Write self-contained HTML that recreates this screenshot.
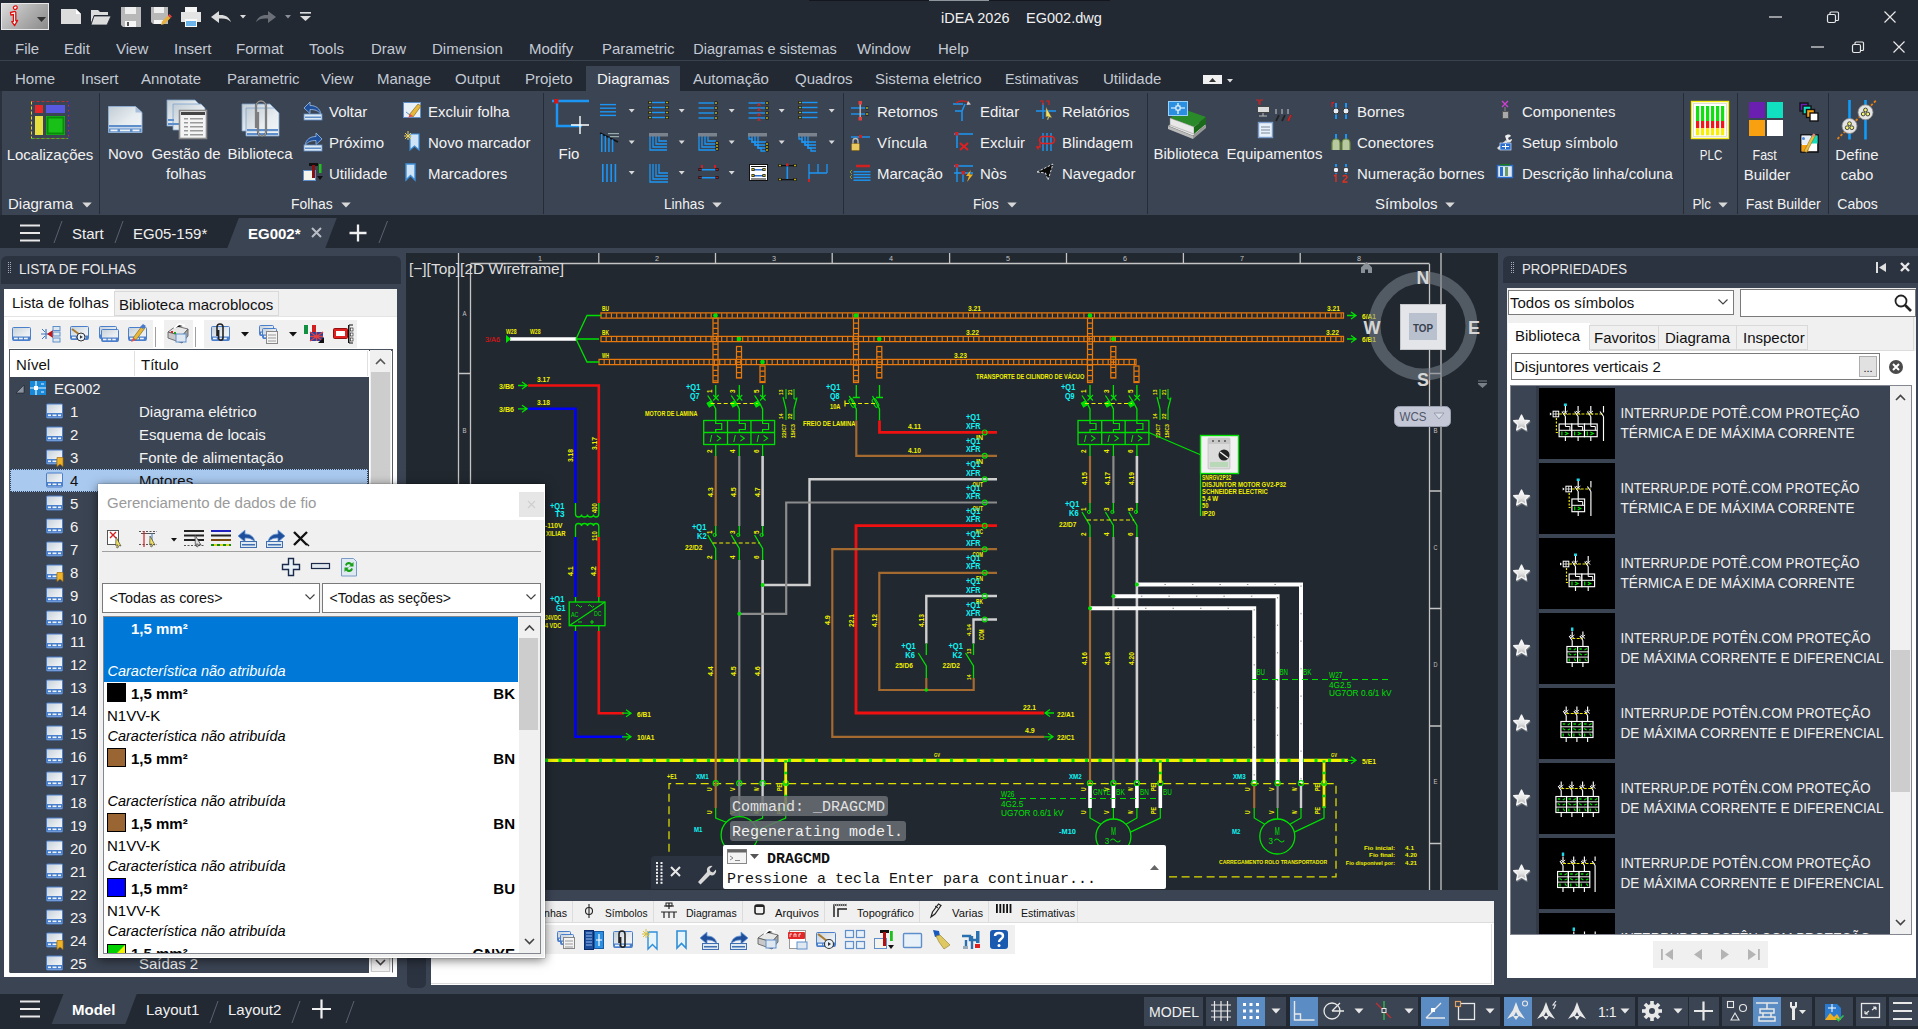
<!DOCTYPE html>
<html><head><meta charset="utf-8"><title>iDEA 2026 EG002.dwg</title><style>
html,body{margin:0;padding:0;}
body{width:1918px;height:1029px;overflow:hidden;background:#3b4453;position:relative;font-family:"Liberation Sans",sans-serif;}
div,span.t,svg{position:absolute;}
span.t{white-space:pre;}
svg{overflow:visible;}
</style></head><body>
<div style="left:0px;top:0px;width:1918px;height:91px;background:#222933;"></div>
<div style="left:809px;top:0px;width:301px;height:1px;background:#14181e;"></div>
<div style="left:929px;top:0px;width:60px;height:1px;background:#8f959d;"></div>
<div style="left:1px;top:3px;width:48px;height:27px;background:linear-gradient(135deg,#dcdcdc 0%,#b4b4b4 45%,#8a8a8a 100%);border:1px solid #e8e8e8;box-sizing:border-box;"></div>
<svg style="left:1px;top:3px;" width="48" height="27" viewBox="0 0 48 27"><path d="M13 3.5c1.5-1.2 3.4-0.6 3.2 1.2c-0.2 1.4-1.6 2-2.8 1.6c-1.2-0.5-1.4-2-0.4-2.8z" fill="#fff" stroke="#e01010" stroke-width="1.3"/><path d="M9.5 9.5l4.5-1.2l0.8 1v8.5l1.8-0.4l-3 5.2l-2.8-4l1.6-0.3v-7l-2.5 0.8z" fill="#fff" stroke="#e01010" stroke-width="1.3" stroke-linejoin="round"/><path d="M36 14l9 0l-4.5 5z" fill="#333"/></svg>
<svg style="left:0px;top:0px;" width="320" height="34" viewBox="0 0 320 34"><path d="M61 9h15l5 5v10h-20z" fill="#dcdcdc"/><path d="M76 9v5h5z" fill="#fff"/><path d="M91 10h7l2 2h8v3h-14l-3 8z" fill="#dcdcdc"/><path d="M94 16h17l-4 9h-16z" fill="#dcdcdc" stroke="#222933" stroke-width="0.8"/><path d="M121 7h20v20h-18l-2-2z" fill="#b8b8b8"/><rect x="125" y="7" width="11" height="7" fill="#efefef"/><rect x="125" y="21" width="11" height="6" fill="#f6f6f6"/><rect x="127" y="22" width="2" height="4" fill="#555"/><path d="M151 7h17v17h-15l-2-2z" fill="#b8b8b8"/><rect x="154" y="7" width="10" height="6" fill="#efefef"/><rect x="154" y="20" width="9" height="4" fill="#f6f6f6"/><path d="M161 25l1-3.5l6-6l2.5 2.5l-6 6z" fill="#e8b040"/><path d="M168 15.5l1.5-1.5l2.5 2.5l-1.5 1.5z" fill="#e04040"/><rect x="185" y="7" width="12" height="6" fill="#f4f4f4"/><path d="M181 12h20v10h-20z" fill="#e4e4e4"/><rect x="185" y="19" width="12" height="8" fill="#fafafa"/><rect x="186" y="21" width="10" height="5" fill="#6cb4ea"/><path d="M211 17l8-6v4c6-0.5 10 1.5 12 7c-3-3-6-4-12-3.5v4.5z" fill="#dcdcdc"/><path d="M240 15h6l-3 3.5z" fill="#dcdcdc"/><path d="M276 17l-8-6v4c-6-0.5-10 1.5-12 7c3-3 6-4 12-3.5v4.5z" fill="#6b7078"/><path d="M285 15h6l-3 3.5z" fill="#8a8f98"/><rect x="300" y="12" width="11" height="1.6" fill="#dcdcdc"/><path d="M300 16h11l-5.5 5z" fill="#dcdcdc"/></svg>
<span class="t" style="top:11px;font-size:14.5px;line-height:14.5px;color:#f0f0f0;font-family:'Liberation Sans',sans-serif;left:941px;">iDEA 2026</span>
<span class="t" style="top:11px;font-size:14.5px;line-height:14.5px;color:#f0f0f0;font-family:'Liberation Sans',sans-serif;left:1026px;">EG002.dwg</span>
<svg style="left:1760px;top:0px;" width="158" height="64" viewBox="0 0 158 64"><g stroke="#e8e8e8" stroke-width="1.2" fill="none"><path d="M9 17h13"/><rect x="67.5" y="14.5" width="8" height="8" rx="1.5"/><path d="M70 14.5v-1.5a1 1 0 0 1 1-1h6.5a1 1 0 0 1 1 1v6.5a1 1 0 0 1-1 1h-1.5"/><path d="M124.5 11.5l11 11M135.500 11.500l-11 11"/><path d="M51 47h13"/><rect x="92.500" y="44.500" width="8" height="8" rx="1.5"/><path d="M95 44.500v-1.5a1 1 0 0 1 1-1h6.500a1 1 0 0 1 1 1v6.500a1 1 0 0 1-1 1h-1.5"/><path d="M133.500 41.500l11 11M144.500 41.500l-11 11"/></g></svg>
<span class="t" style="top:41px;font-size:15px;line-height:15px;color:#c4cad3;font-family:'Liberation Sans',sans-serif;left:15px;">File</span>
<span class="t" style="top:41px;font-size:15px;line-height:15px;color:#c4cad3;font-family:'Liberation Sans',sans-serif;left:64px;">Edit</span>
<span class="t" style="top:41px;font-size:15px;line-height:15px;color:#c4cad3;font-family:'Liberation Sans',sans-serif;left:116px;">View</span>
<span class="t" style="top:41px;font-size:15px;line-height:15px;color:#c4cad3;font-family:'Liberation Sans',sans-serif;left:174px;">Insert</span>
<span class="t" style="top:41px;font-size:15px;line-height:15px;color:#c4cad3;font-family:'Liberation Sans',sans-serif;left:236px;">Format</span>
<span class="t" style="top:41px;font-size:15px;line-height:15px;color:#c4cad3;font-family:'Liberation Sans',sans-serif;left:309px;">Tools</span>
<span class="t" style="top:41px;font-size:15px;line-height:15px;color:#c4cad3;font-family:'Liberation Sans',sans-serif;left:371px;">Draw</span>
<span class="t" style="top:41px;font-size:15px;line-height:15px;color:#c4cad3;font-family:'Liberation Sans',sans-serif;left:432px;">Dimension</span>
<span class="t" style="top:41px;font-size:15px;line-height:15px;color:#c4cad3;font-family:'Liberation Sans',sans-serif;left:529px;">Modify</span>
<span class="t" style="top:41px;font-size:15px;line-height:15px;color:#c4cad3;font-family:'Liberation Sans',sans-serif;left:602px;">Parametric</span>
<svg style="left:0;top:0;" width="1" height="1"><text x="693.3" y="54" font-family="'Liberation Sans',sans-serif" font-size="15" font-weight="normal" font-style="normal" fill="#c4cad3" text-anchor="start" textLength="143.4" lengthAdjust="spacingAndGlyphs">Diagramas e sistemas</text></svg>
<span class="t" style="top:41px;font-size:15px;line-height:15px;color:#c4cad3;font-family:'Liberation Sans',sans-serif;left:857px;">Window</span>
<span class="t" style="top:41px;font-size:15px;line-height:15px;color:#c4cad3;font-family:'Liberation Sans',sans-serif;left:938px;">Help</span>
<div style="left:0px;top:60px;width:1918px;height:1px;background:#3a4250;"></div>
<div style="left:586px;top:66px;width:94px;height:26px;background:#3b4453;"></div>
<span class="t" style="top:71px;font-size:15px;line-height:15px;color:#c4cad3;font-family:'Liberation Sans',sans-serif;left:15px;">Home</span>
<span class="t" style="top:71px;font-size:15px;line-height:15px;color:#c4cad3;font-family:'Liberation Sans',sans-serif;left:81px;">Insert</span>
<span class="t" style="top:71px;font-size:15px;line-height:15px;color:#c4cad3;font-family:'Liberation Sans',sans-serif;left:141px;">Annotate</span>
<span class="t" style="top:71px;font-size:15px;line-height:15px;color:#c4cad3;font-family:'Liberation Sans',sans-serif;left:227px;">Parametric</span>
<span class="t" style="top:71px;font-size:15px;line-height:15px;color:#c4cad3;font-family:'Liberation Sans',sans-serif;left:321px;">View</span>
<span class="t" style="top:71px;font-size:15px;line-height:15px;color:#c4cad3;font-family:'Liberation Sans',sans-serif;left:377px;">Manage</span>
<span class="t" style="top:71px;font-size:15px;line-height:15px;color:#c4cad3;font-family:'Liberation Sans',sans-serif;left:455px;">Output</span>
<span class="t" style="top:71px;font-size:15px;line-height:15px;color:#c4cad3;font-family:'Liberation Sans',sans-serif;left:525px;">Projeto</span>
<span class="t" style="top:71px;font-size:15px;line-height:15px;color:#f4f4f4;font-family:'Liberation Sans',sans-serif;left:597px;">Diagramas</span>
<span class="t" style="top:71px;font-size:15px;line-height:15px;color:#c4cad3;font-family:'Liberation Sans',sans-serif;left:693px;">Automação</span>
<span class="t" style="top:71px;font-size:15px;line-height:15px;color:#c4cad3;font-family:'Liberation Sans',sans-serif;left:795px;">Quadros</span>
<span class="t" style="top:71px;font-size:15px;line-height:15px;color:#c4cad3;font-family:'Liberation Sans',sans-serif;left:875px;">Sistema eletrico</span>
<svg style="left:0;top:0;" width="1" height="1"><text x="1005" y="84" font-family="'Liberation Sans',sans-serif" font-size="15" font-weight="normal" font-style="normal" fill="#c4cad3" text-anchor="start" textLength="73.3" lengthAdjust="spacingAndGlyphs">Estimativas</text></svg>
<span class="t" style="top:71px;font-size:15px;line-height:15px;color:#c4cad3;font-family:'Liberation Sans',sans-serif;left:1103px;">Utilidade</span>
<div style="left:1203px;top:75px;width:19px;height:9px;background:#f0f0f0;"></div>
<svg style="left:1203px;top:75px;" width="35" height="10" viewBox="0 0 35 10"><path d="M6 7l3.500-4l3.500 4z" fill="#333"/><path d="M24 4h6l-3 3.500z" fill="#e0e0e0"/></svg>
<div style="left:0px;top:91px;width:1918px;height:124px;background:#3b4453;"></div>
<div style="left:0px;top:91px;width:2px;height:124px;background:#2a313d;"></div>
<div style="left:99px;top:93px;width:1px;height:121px;background:#252c37;"></div>
<div style="left:543px;top:93px;width:1px;height:121px;background:#252c37;"></div>
<div style="left:843px;top:93px;width:1px;height:121px;background:#252c37;"></div>
<div style="left:1147px;top:93px;width:1px;height:121px;background:#252c37;"></div>
<div style="left:1683px;top:93px;width:1px;height:121px;background:#252c37;"></div>
<div style="left:1737px;top:93px;width:1px;height:121px;background:#252c37;"></div>
<div style="left:1828px;top:93px;width:1px;height:121px;background:#252c37;"></div>
<svg style="left:0px;top:0px;" width="1918" height="216" viewBox="0 0 1918 216"><rect x="31.500" y="101.500" width="37" height="37" fill="none" stroke="#c03030" stroke-width="1" stroke-dasharray="3 2"/><path d="M31.500 101.500v37" stroke="#d8d830" stroke-dasharray="3 2"/><path d="M31.500 138.500h37" stroke="#30c030" stroke-dasharray="3 2"/><path d="M68.500 101.500v37" stroke="#3030c0" stroke-dasharray="3 2"/><rect x="35" y="105" width="8" height="8" fill="#e82828"/><rect x="46" y="105" width="19" height="8" fill="#5858e0"/><rect x="35" y="116" width="8" height="19" fill="#e8e040"/><rect x="46" y="116" width="19" height="19" fill="#18c018"/><rect x="47.500" y="117.500" width="16" height="16" fill="none" stroke="#0a8a0a" stroke-width="2"/><defs><linearGradient id="rbg" x1="0" y1="0" x2="1" y2="1"><stop offset="0" stop-color="#c2ccd4"/><stop offset="0.55" stop-color="#e6ecf0"/><stop offset="1" stop-color="#f4f7f9"/></linearGradient></defs><path d="M108.500 106.500h27l6.500 6v20h-33.500z" fill="url(#rbg)" stroke="#8fb0d6" stroke-width="0.9"/><path d="M135.500 106.500v6h6.500z" fill="#a8c0dc"/><rect x="109" y="125" width="32.500" height="7" fill="#5f8fcb"/><rect x="109" y="127.200" width="32.500" height="1.200" fill="#dfe8f2"/><rect x="110.500" y="129.500" width="7" height="1.800" fill="#eef3f8"/><rect x="120" y="129.500" width="10" height="1.800" fill="#eef3f8"/><rect x="132.500" y="129.500" width="7" height="1.800" fill="#eef3f8"/><path d="M167 100h28l4 4v22h-32z" fill="url(#rbg)" stroke="#7ea2cc" stroke-width="0.8"/><path d="M173 104h28l4 4v22h-32z" fill="url(#rbg)" stroke="#7ea2cc" stroke-width="0.8"/><rect x="168" y="123" width="12" height="2" fill="#5f8fcb"/><rect x="168" y="119" width="6" height="2" fill="#5f8fcb"/><rect x="179.500" y="110.500" width="27" height="28" fill="#f4f4f4" stroke="#8a8a8a" stroke-width="1.6"/><rect x="181" y="112" width="24" height="3" fill="#444"/><g fill="#9a9a9a"><rect x="184" y="118" width="4" height="1.5"/><rect x="190" y="118" width="13" height="1.5"/><rect x="184" y="122" width="4" height="1.5"/><rect x="190" y="122" width="13" height="1.5"/><rect x="184" y="126" width="4" height="1.5"/><rect x="190" y="126" width="13" height="1.5"/><rect x="184" y="130" width="4" height="1.5"/><rect x="190" y="130" width="13" height="1.5"/><rect x="184" y="134" width="4" height="1.5"/><rect x="190" y="134" width="13" height="1.5"/></g><path d="M242 104h28l5 5v22h-33z" fill="url(#rbg)" stroke="#7ea2cc" stroke-width="0.8"/><path d="M246 108h28l5 5v23h-33z" fill="url(#rbg)" stroke="#7ea2cc" stroke-width="0.8"/><rect x="247" y="129" width="31" height="2.200" fill="#5f8fcb"/><rect x="247" y="133" width="31" height="2.200" fill="#5f8fcb"/><path d="M256 128v-22a5 5 0 0 1 10 0v26a4 4 0 0 1 -8 0v-20" fill="none" stroke="#555" stroke-width="2.200"/><path d="M256 128v-22a5 5 0 0 1 10 0v26a4 4 0 0 1 -8 0v-20" fill="none" stroke="#b0b0b0" stroke-width="0.9"/><path d="M304 108l6-6v3.500c6 0 10 3 11 9c-3-4-6-5-11-5v4z" fill="#1f4e9a" stroke="#9cc0ea" stroke-width="0.8"/><rect x="304" y="114" width="18" height="6" fill="#dfe9f2" stroke="#5f8fcb" stroke-width="0.8"/><rect x="305" y="116.500" width="16" height="1.5" fill="#5f8fcb"/><path d="M322 139l-6-6v3.500c-6 0-10 3-11 9c3-4 6-5 11-5v4z" fill="#1f4e9a" stroke="#9cc0ea" stroke-width="0.8"/><rect x="304" y="145" width="18" height="6" fill="#dfe9f2" stroke="#5f8fcb" stroke-width="0.8"/><rect x="305" y="147.500" width="16" height="1.5" fill="#5f8fcb"/><rect x="303.500" y="170.500" width="12" height="10" fill="#f4f4ec" stroke="#5f8fcb"/><rect x="309" y="163" width="9" height="3" fill="#111"/><rect x="312" y="165" width="3" height="13" fill="#8a1010"/><rect x="319" y="164" width="2.500" height="9" fill="#20c020"/><path d="M317 176h6l-3 4z" fill="#111"/><rect x="403.500" y="102.500" width="17" height="15" fill="#e8f0f8" stroke="#5f8fcb"/><path d="M406 112l4 3l8-9" stroke="#5f8fcb" fill="none"/><path d="M409 115l9-11l3 2l-8 11z" fill="#e8b83a" stroke="#7a5a10" stroke-width="0.6"/><path d="M408 118l2-4l3 2z" fill="#e05050"/><path d="M410 134h9v16l-4.500-4l-4.500 4z" fill="#cfe4f6" stroke="#3f8fd8" stroke-width="1.2"/><path d="M405 133l6 6M405 139l6-6M408 131v9M404 136h8" stroke="#e8d060" stroke-width="1"/><path d="M406 164h9v16l-4.500-4.500l-4.500 4.500z" fill="#cfe4f6" stroke="#3f8fd8" stroke-width="1.4"/><path d="M552 101h37M557 101v25h25" fill="none" stroke="#1c96f4" stroke-width="2.400"/><rect x="554" y="99" width="4.500" height="4.500" fill="#d01818"/><path d="M580 116v18M571 125h18" stroke="#fff" stroke-width="1.4"/><rect x="600.0" y="103.9" width="16" height="1.400" fill="#1c96f4"/><rect x="600.0" y="107.5" width="16" height="1.400" fill="#1c96f4"/><rect x="600.0" y="111.1" width="16" height="1.400" fill="#1c96f4"/><rect x="600.0" y="114.7" width="16" height="1.400" fill="#1c96f4"/><rect x="650.5" y="101.8" width="15" height="1.400" fill="#1c96f4"/><rect x="650.5" y="106.8" width="15" height="1.400" fill="#1c96f4"/><rect x="650.5" y="111.8" width="15" height="1.400" fill="#1c96f4"/><rect x="650.5" y="116.8" width="15" height="1.400" fill="#1c96f4"/><rect x="648.5" y="101.0" width="3" height="3" fill="#111"/><rect x="649.2" y="101.7" width="1.600" height="1.600" fill="#e8d020"/><rect x="648.5" y="106.0" width="3" height="3" fill="#111"/><rect x="649.2" y="106.7" width="1.600" height="1.600" fill="#e8d020"/><rect x="648.5" y="111.0" width="3" height="3" fill="#111"/><rect x="649.2" y="111.7" width="1.600" height="1.600" fill="#e8d020"/><rect x="648.5" y="116.0" width="3" height="3" fill="#111"/><rect x="649.2" y="116.7" width="1.600" height="1.600" fill="#e8d020"/><rect x="665.5" y="101.0" width="3" height="3" fill="#111"/><rect x="666.2" y="101.7" width="1.600" height="1.600" fill="#e8d020"/><rect x="665.5" y="106.0" width="3" height="3" fill="#111"/><rect x="666.2" y="106.7" width="1.600" height="1.600" fill="#e8d020"/><rect x="665.5" y="111.0" width="3" height="3" fill="#111"/><rect x="666.2" y="111.7" width="1.600" height="1.600" fill="#e8d020"/><rect x="665.5" y="116.0" width="3" height="3" fill="#111"/><rect x="666.2" y="116.7" width="1.600" height="1.600" fill="#e8d020"/><rect x="698.5" y="102.3" width="17" height="1.400" fill="#1c96f4"/><rect x="698.5" y="107.3" width="17" height="1.400" fill="#1c96f4"/><rect x="698.5" y="112.3" width="17" height="1.400" fill="#1c96f4"/><rect x="698.5" y="117.3" width="17" height="1.400" fill="#1c96f4"/><rect x="714.5" y="101.5" width="3" height="3" fill="#111"/><rect x="715.2" y="102.2" width="1.600" height="1.600" fill="#e8d020"/><rect x="714.5" y="106.5" width="3" height="3" fill="#111"/><rect x="715.2" y="107.2" width="1.600" height="1.600" fill="#e8d020"/><rect x="714.5" y="111.5" width="3" height="3" fill="#111"/><rect x="715.2" y="112.2" width="1.600" height="1.600" fill="#e8d020"/><rect x="714.5" y="116.5" width="3" height="3" fill="#111"/><rect x="715.2" y="117.2" width="1.600" height="1.600" fill="#e8d020"/><rect x="748.5" y="102.3" width="17" height="1.400" fill="#1c96f4"/><rect x="748.5" y="107.3" width="17" height="1.400" fill="#1c96f4"/><rect x="748.5" y="112.3" width="17" height="1.400" fill="#1c96f4"/><rect x="748.5" y="117.3" width="17" height="1.400" fill="#1c96f4"/><rect x="765.5" y="101.5" width="3" height="3" fill="#111"/><rect x="766.2" y="102.2" width="1.600" height="1.600" fill="#e8d020"/><rect x="765.5" y="106.5" width="3" height="3" fill="#111"/><rect x="766.2" y="107.2" width="1.600" height="1.600" fill="#e8d020"/><rect x="765.5" y="111.5" width="3" height="3" fill="#111"/><rect x="766.2" y="112.2" width="1.600" height="1.600" fill="#e8d020"/><rect x="765.5" y="116.5" width="3" height="3" fill="#111"/><rect x="766.2" y="117.2" width="1.600" height="1.600" fill="#e8d020"/><path d="M757.5 103l3 3M760.5 103l-3 3" stroke="#e02020" stroke-width="1"/><path d="M757.5 108l3 3M760.5 108l-3 3" stroke="#e02020" stroke-width="1"/><path d="M757.5 113l3 3M760.5 113l-3 3" stroke="#e02020" stroke-width="1"/><path d="M757.5 118l3 3M760.5 118l-3 3" stroke="#e02020" stroke-width="1"/><rect x="800.5" y="101.8" width="17" height="1.400" fill="#1c96f4"/><rect x="800.5" y="106.8" width="17" height="1.400" fill="#1c96f4"/><rect x="800.5" y="111.8" width="17" height="1.400" fill="#1c96f4"/><rect x="800.5" y="116.8" width="17" height="1.400" fill="#1c96f4"/><rect x="798.5" y="101.0" width="3" height="3" fill="#111"/><rect x="799.2" y="101.7" width="1.600" height="1.600" fill="#e8d020"/><rect x="798.5" y="106.0" width="3" height="3" fill="#111"/><rect x="799.2" y="106.7" width="1.600" height="1.600" fill="#e8d020"/><rect x="798.5" y="111.0" width="3" height="3" fill="#111"/><rect x="799.2" y="111.7" width="1.600" height="1.600" fill="#e8d020"/><rect x="798.5" y="116.0" width="3" height="3" fill="#111"/><rect x="799.2" y="116.7" width="1.600" height="1.600" fill="#e8d020"/><path d="M628.7 109.0h6l-3 3.5z" fill="#d8d8d8"/><path d="M678.7 109.0h6l-3 3.5z" fill="#d8d8d8"/><path d="M728.7 109.0h6l-3 3.5z" fill="#d8d8d8"/><path d="M778.7 109.0h6l-3 3.5z" fill="#d8d8d8"/><path d="M828.7 109.0h6l-3 3.5z" fill="#d8d8d8"/><path d="M600 133l18 9" stroke="#111" stroke-width="1.5"/><rect x="601.0" y="134.0" width="1.500" height="18.0" fill="#1c96f4"/><rect x="604.6" y="135.8" width="1.500" height="16.2" fill="#1c96f4"/><rect x="608.2" y="137.6" width="1.500" height="14.4" fill="#1c96f4"/><rect x="611.8" y="139.4" width="1.500" height="12.6" fill="#1c96f4"/><rect x="608" y="133" width="11" height="1.200" fill="#9aa"/><rect x="610" y="136" width="9" height="1.200" fill="#9aa"/><path d="M650 136V150H667" fill="none" stroke="#1c96f4" stroke-width="1.300"/><path d="M653 136V147H667" fill="none" stroke="#1c96f4" stroke-width="1.300"/><path d="M656 136V144H667" fill="none" stroke="#1c96f4" stroke-width="1.300"/><path d="M659 136V141H667" fill="none" stroke="#1c96f4" stroke-width="1.300"/><rect x="649" y="133" width="19" height="3.500" fill="#7a828e"/><path d="M699 136V150H716" fill="none" stroke="#1c96f4" stroke-width="1.300"/><path d="M702 136V147H716" fill="none" stroke="#1c96f4" stroke-width="1.300"/><path d="M705 136V144H716" fill="none" stroke="#1c96f4" stroke-width="1.300"/><path d="M708 136V141H716" fill="none" stroke="#1c96f4" stroke-width="1.300"/><rect x="698" y="133" width="19" height="3.500" fill="#7a828e"/><rect x="715.5" y="141.5" width="3" height="3" fill="#111"/><rect x="716.2" y="142.2" width="1.600" height="1.600" fill="#e8d020"/><rect x="715.5" y="144.5" width="3" height="3" fill="#111"/><rect x="716.2" y="145.2" width="1.600" height="1.600" fill="#e8d020"/><rect x="715.5" y="147.5" width="3" height="3" fill="#111"/><rect x="716.2" y="148.2" width="1.600" height="1.600" fill="#e8d020"/><path d="M749 136V141l3 3V150H766" fill="none" stroke="#1c96f4" stroke-width="1.300" opacity="0"/><path d="M749 136V139H752V142H766" fill="none" stroke="#1c96f4" stroke-width="1.300"/><path d="M752 136V143l3 3V150H766" fill="none" stroke="#1c96f4" stroke-width="1.300" opacity="0"/><path d="M752 136V142H755V145H766" fill="none" stroke="#1c96f4" stroke-width="1.300"/><path d="M755 136V145l3 3V150H766" fill="none" stroke="#1c96f4" stroke-width="1.300" opacity="0"/><path d="M755 136V145H758V148H766" fill="none" stroke="#1c96f4" stroke-width="1.300"/><path d="M758 136V147l3 3V150H766" fill="none" stroke="#1c96f4" stroke-width="1.300" opacity="0"/><path d="M758 136V148H761V151H766" fill="none" stroke="#1c96f4" stroke-width="1.300"/><rect x="748" y="133" width="19" height="3.500" fill="#7a828e"/><rect x="765.5" y="142.5" width="3" height="3" fill="#111"/><rect x="766.2" y="143.2" width="1.600" height="1.600" fill="#e8d020"/><rect x="765.5" y="145.5" width="3" height="3" fill="#111"/><rect x="766.2" y="146.2" width="1.600" height="1.600" fill="#e8d020"/><rect x="765.5" y="148.5" width="3" height="3" fill="#111"/><rect x="766.2" y="149.2" width="1.600" height="1.600" fill="#e8d020"/><path d="M799 136V141l3 3V150H816" fill="none" stroke="#1c96f4" stroke-width="1.300" opacity="0"/><path d="M799 136V139H802V142H816" fill="none" stroke="#1c96f4" stroke-width="1.300"/><path d="M802 136V143l3 3V150H816" fill="none" stroke="#1c96f4" stroke-width="1.300" opacity="0"/><path d="M802 136V142H805V145H816" fill="none" stroke="#1c96f4" stroke-width="1.300"/><path d="M805 136V145l3 3V150H816" fill="none" stroke="#1c96f4" stroke-width="1.300" opacity="0"/><path d="M805 136V145H808V148H816" fill="none" stroke="#1c96f4" stroke-width="1.300"/><path d="M808 136V147l3 3V150H816" fill="none" stroke="#1c96f4" stroke-width="1.300" opacity="0"/><path d="M808 136V148H811V151H816" fill="none" stroke="#1c96f4" stroke-width="1.300"/><rect x="798" y="133" width="19" height="3.500" fill="#7a828e"/><path d="M628.7 140.5h6l-3 3.5z" fill="#d8d8d8"/><path d="M678.7 140.5h6l-3 3.5z" fill="#d8d8d8"/><path d="M728.7 140.5h6l-3 3.5z" fill="#d8d8d8"/><path d="M778.7 140.5h6l-3 3.5z" fill="#d8d8d8"/><path d="M828.7 140.5h6l-3 3.5z" fill="#d8d8d8"/><rect x="602.0" y="164" width="1.600" height="18" fill="#1c96f4"/><rect x="606.2" y="164" width="1.600" height="18" fill="#1c96f4"/><rect x="610.4" y="164" width="1.600" height="18" fill="#1c96f4"/><rect x="614.6" y="164" width="1.600" height="18" fill="#1c96f4"/><path d="M650 164V182H668" fill="none" stroke="#1c96f4" stroke-width="1.300"/><path d="M653 164V179H668" fill="none" stroke="#1c96f4" stroke-width="1.300"/><path d="M656 164V176H668" fill="none" stroke="#1c96f4" stroke-width="1.300"/><path d="M659 164V173H668" fill="none" stroke="#1c96f4" stroke-width="1.300"/><rect x="700" y="169" width="17" height="1.500" fill="#1c96f4"/><rect x="700" y="177" width="17" height="1.500" fill="#1c96f4"/><rect x="698.5" y="168.0" width="3" height="3" fill="#111"/><rect x="699.2" y="168.7" width="1.600" height="1.600" fill="#d02020"/><rect x="698.5" y="176.0" width="3" height="3" fill="#111"/><rect x="699.2" y="176.7" width="1.600" height="1.600" fill="#d02020"/><rect x="715.5" y="168.0" width="3" height="3" fill="#111"/><rect x="716.2" y="168.7" width="1.600" height="1.600" fill="#d02020"/><rect x="715.5" y="176.0" width="3" height="3" fill="#111"/><rect x="716.2" y="176.7" width="1.600" height="1.600" fill="#d02020"/><rect x="701" y="165" width="2" height="3" fill="#d02020"/><rect x="714" y="165" width="2" height="3" fill="#d02020"/><rect x="749.500" y="164.500" width="18" height="16" fill="#fff" stroke="#111"/><rect x="752" y="169" width="13" height="1.500" fill="#2f6fd0"/><rect x="752" y="175" width="13" height="1.500" fill="#2f6fd0"/><rect x="751.5" y="168.0" width="3" height="3" fill="#111"/><rect x="752.2" y="168.7" width="1.600" height="1.600" fill="#e8d020"/><rect x="751.5" y="174.0" width="3" height="3" fill="#111"/><rect x="752.2" y="174.7" width="1.600" height="1.600" fill="#e8d020"/><rect x="762.5" y="168.0" width="3" height="3" fill="#111"/><rect x="763.2" y="168.7" width="1.600" height="1.600" fill="#e8d020"/><rect x="762.5" y="174.0" width="3" height="3" fill="#111"/><rect x="763.2" y="174.7" width="1.600" height="1.600" fill="#e8d020"/><rect x="751" y="166" width="15" height="1" fill="#111"/><rect x="751" y="178.500" width="15" height="1" fill="#111"/><rect x="786.500" y="166" width="1.600" height="14" fill="#1c96f4"/><rect x="780" y="165" width="15" height="1.300" fill="#111"/><rect x="780" y="179" width="15" height="1.300" fill="#111"/><rect x="778.5" y="164.0" width="3" height="3" fill="#111"/><rect x="779.2" y="164.7" width="1.600" height="1.600" fill="#e8d020"/><rect x="778.5" y="178.0" width="3" height="3" fill="#111"/><rect x="779.2" y="178.7" width="1.600" height="1.600" fill="#e8d020"/><rect x="793.5" y="164.0" width="3" height="3" fill="#111"/><rect x="794.2" y="164.7" width="1.600" height="1.600" fill="#e8d020"/><rect x="793.5" y="178.0" width="3" height="3" fill="#111"/><rect x="794.2" y="178.7" width="1.600" height="1.600" fill="#e8d020"/><rect x="786" y="163.500" width="2.500" height="2.500" fill="#d02020"/><path d="M809 164v18M809 173h18M818 164v9M827 164v9" fill="none" stroke="#1c96f4" stroke-width="1.300"/><rect x="808" y="179" width="2" height="3" fill="#d02020"/><path d="M628.7 171.0h6l-3 3.5z" fill="#d8d8d8"/><path d="M678.7 171.0h6l-3 3.5z" fill="#d8d8d8"/><path d="M728.7 171.0h6l-3 3.5z" fill="#d8d8d8"/><rect x="851.0" y="107.3" width="18" height="1.400" fill="#1c96f4"/><rect x="851.0" y="113.3" width="18" height="1.400" fill="#1c96f4"/><rect x="859.500" y="101" width="1.400" height="19" fill="#bbb" /><rect x="858.500" y="101" width="3.500" height="3.500" fill="#e04040"/><rect x="858.500" y="117" width="3.500" height="3.500" fill="#e04040"/><rect x="865.5" y="106.5" width="3" height="3" fill="#111"/><rect x="866.2" y="107.2" width="1.600" height="1.600" fill="#e8d020"/><rect x="865.5" y="112.5" width="3" height="3" fill="#111"/><rect x="866.2" y="113.2" width="1.600" height="1.600" fill="#e8d020"/><path d="M851 137h19" stroke="#1c96f4" stroke-width="1.400"/><rect x="859" y="135" width="3" height="3" fill="#d02020"/><rect x="851.500" y="143.500" width="8" height="7" rx="1" fill="#e8c860" stroke="#8a6a10" stroke-width="0.7"/><path d="M853 143.500v-2.500a2.500 2.500 0 0 1 5 0v2.500" fill="none" stroke="#bbb" stroke-width="1.300"/><rect x="853.5" y="171.1" width="17" height="1.400" fill="#1c96f4"/><rect x="853.5" y="173.9" width="17" height="1.400" fill="#1c96f4"/><rect x="853.5" y="176.7" width="17" height="1.400" fill="#1c96f4"/><rect x="853.5" y="179.5" width="17" height="1.400" fill="#1c96f4"/><path d="M856 166h14" stroke="#d02020" stroke-width="2.500"/><path d="M852 170l-2 2l2 2M852 175l-2 2l2 2" stroke="#8a9a30" fill="none"/><path d="M953 104h10M955 111h7l3-7M962 111v10" stroke="#1c96f4" stroke-width="1.500" fill="none"/><path d="M956 103c4-3 10-3 14 1" stroke="#d02020" fill="none" stroke-width="1.200"/><path d="M968 101l3 3.500l-4.500 0.500z" fill="#ccc"/><path d="M954 134h19M957 134v14" stroke="#1c96f4" stroke-width="1.500" fill="none"/><rect x="955" y="132" width="3.500" height="3.500" fill="#d02020"/><path d="M960 143l8 7M968 143l-8 7" stroke="#e02020" stroke-width="2"/><path d="M954 166h19M954 173h19M957 166v16M963 173v9" stroke="#1c96f4" stroke-width="1.400" fill="none"/><rect x="955" y="164" width="3.500" height="3.500" fill="#d02020"/><rect x="961.500" y="171" width="3.500" height="3.500" fill="#d02020"/><path d="M971 170l-5 6h3l-2 6l6-7.500h-3.500z" fill="#f0b020"/><path d="M1036 111h20M1043 103v16" stroke="#1c96f4" stroke-width="1.400"/><path d="M1040 101h3v4M1046 101h3v4" stroke="#d02020" fill="none" stroke-width="1.200"/><path d="M1046 107l6 11l-2.500-1l-1.500 3l-1.200-0.500l1.500-3l-2.500 0.500z" fill="#f0e060" stroke="#555" stroke-width="0.5"/><path d="M1043 133v18M1047 133v18M1051 133v18" stroke="#1c96f4" stroke-width="1.400"/><rect x="1039.500" y="136.500" width="15" height="7" rx="3.500" fill="none" stroke="#e02020" stroke-width="1.600"/><path d="M1040 143v4h-3l1.500 2.500" stroke="#e02020" fill="none" stroke-width="1.400"/><path d="M1037 172l16-8l-5 16l-2.500-7z" fill="#0a0a0a" stroke="#eee" stroke-width="0.9" stroke-dasharray="2.500 1.500"/><path d="M1168 126l14-9l24 8l-13 11z" fill="#e8e8e8" stroke="#777" stroke-width="0.8"/><path d="M1168 126v3l25 10v-3z" fill="#bbb"/><path d="M1193 136v3l13-11v-3z" fill="#999"/><path d="M1170 118l13-9l23 8l-12 10z" fill="#2a8a2a"/><path d="M1170 118v7l24 9v-7z" fill="#e8e8e8" stroke="#888" stroke-width="0.5"/><path d="M1194 127v7l12-10v-7z" fill="#1a6a1a"/><rect x="1168.500" y="101.500" width="19" height="14" fill="#2a8fe0" stroke="#9cd0f8"/><path d="M1171 108h14M1178 103v11" stroke="#fff" stroke-width="1.200"/><rect x="1176" y="106" width="4" height="4" fill="#2a8fe0" stroke="#fff"/><rect x="1257.500" y="106.500" width="12" height="6" fill="#ddd" stroke="#444"/><path d="M1263 113v3M1259 116h8" stroke="#bbb"/><path d="M1256 100h3v4M1260 100v5M1260 100h3" stroke="#d02020" fill="none"/><path d="M1276 121l3-6M1282 121l3-6M1288 121l3-6" stroke="#222" stroke-width="1.800"/><path d="M1288 121l3-6" stroke="#d02020" stroke-width="1.800"/><path d="M1276 109v5M1282 109v5M1288 109v5" stroke="#eee" stroke-width="0.800"/><rect x="1258.500" y="122.500" width="14" height="15" fill="#e8f0fa" stroke="#7a9ac8" stroke-width="1.400"/><path d="M1261 127h9M1261 130h9M1261 133h9" stroke="#7a8a9a" stroke-width="1"/><path d="M1336 103v16M1346 103v16" stroke="#1c96f4" stroke-width="2"/><circle cx="1336" cy="111" r="3" fill="#e8eef8" stroke="#333"/><circle cx="1346" cy="111" r="3" fill="#e8eef8" stroke="#333"/><path d="M1332 102v5M1334 102l-2 2" stroke="#d02020" stroke-width="1.200"/><path d="M1336 134v16M1346 134v16" stroke="#1c96f4" stroke-width="2"/><path d="M1332 150v-7a4 4 0 0 1 8 0v7M1342 150v-7a4 4 0 0 1 8 0v7" fill="#b8c8a0" stroke="#6a8a3a" stroke-width="1.200"/><path d="M1336 164v10M1346 164v10" stroke="#1c96f4" stroke-width="2"/><circle cx="1336" cy="170" r="2.800" fill="#e8eef8" stroke="#333"/><circle cx="1346" cy="170" r="2.800" fill="#e8eef8" stroke="#333"/><path d="M1334 176l2-1v7M1343 176.500c1-1.500 4-1.500 4 0.500c0 2-4 3-4 5h4.500" stroke="#e03020" stroke-width="1.400" fill="none"/><path d="M1502 101l6 6M1508 101l-6 6" stroke="#d040d0" stroke-width="1.400"/><rect x="1502.500" y="111.500" width="6" height="7" fill="#aaa" stroke="#555"/><path d="M1505 107v4" stroke="#888"/><path d="M1497 148l9-8l2 2l-9 8z" fill="#ddd"/><path d="M1505 136c2-2 5-2 6 0l-3 2l1 2l3-1c0 3-3 4-5 3z" fill="#eee"/><rect x="1500" y="143" width="11" height="7" fill="#2a6fd0" stroke="#cfe0f8" stroke-width="0.7"/><path d="M1502 146.500h7M1505.500 144v5" stroke="#fff"/><rect x="1497.500" y="165.500" width="15" height="12" fill="#dfe9f2" stroke="#2a6fd0" stroke-width="1.400"/><rect x="1500" y="167" width="3" height="9" fill="#2a6fd0"/><rect x="1505" y="167" width="3" height="9" fill="#6a9a6a"/><rect x="1500" y="164" width="10" height="1.500" fill="#1a7a1a"/><rect x="1691.500" y="101.500" width="37" height="37" fill="#ffffff" stroke="#f0e810" stroke-width="1.400"/><rect x="1693.500" y="103.500" width="33" height="33" fill="none" stroke="#d8d8c8" stroke-width="0.800"/><rect x="1696.0" y="106" width="3.200" height="15" fill="#10e010"/><rect x="1696.0" y="121" width="3.200" height="7.300" fill="#f01818"/><rect x="1696.0" y="128.300" width="3.200" height="7" fill="#f8f000"/><rect x="1701.0" y="106" width="3.200" height="15" fill="#10e010"/><rect x="1701.0" y="121" width="3.200" height="7.300" fill="#f01818"/><rect x="1701.0" y="128.300" width="3.200" height="7" fill="#f8f000"/><rect x="1706.0" y="106" width="3.200" height="15" fill="#10e010"/><rect x="1706.0" y="121" width="3.200" height="7.300" fill="#f01818"/><rect x="1706.0" y="128.300" width="3.200" height="7" fill="#f8f000"/><rect x="1711.0" y="106" width="3.200" height="15" fill="#10e010"/><rect x="1711.0" y="121" width="3.200" height="7.300" fill="#f01818"/><rect x="1711.0" y="128.300" width="3.200" height="7" fill="#f8f000"/><rect x="1716.0" y="106" width="3.200" height="15" fill="#10e010"/><rect x="1716.0" y="121" width="3.200" height="7.300" fill="#f01818"/><rect x="1716.0" y="128.300" width="3.200" height="7" fill="#f8f000"/><rect x="1721.0" y="106" width="3.200" height="15" fill="#10e010"/><rect x="1721.0" y="121" width="3.200" height="7.300" fill="#f01818"/><rect x="1721.0" y="128.300" width="3.200" height="7" fill="#f8f000"/><rect x="1749" y="102" width="16" height="16" fill="#6a1fb0"/><rect x="1767" y="102" width="16" height="16" fill="#10e0c0"/><rect x="1749" y="120" width="16" height="16" fill="#f8a010"/><rect x="1767" y="120" width="16" height="16" fill="#ffffff"/><rect x="1800" y="103" width="8" height="8" fill="#6a1fb0" stroke="#111" stroke-width="1.400"/><rect x="1803" y="106" width="8" height="8" fill="#10e0c0" stroke="#111" stroke-width="1.400"/><rect x="1806.500" y="109.500" width="8" height="8" fill="#f8a010" stroke="#111" stroke-width="1.400"/><rect x="1810" y="113" width="8" height="8" fill="#fff" stroke="#111" stroke-width="1.400"/><rect x="1801" y="135" width="17" height="17" fill="#fff" stroke="#111" stroke-width="1.600"/><rect x="1811" y="135.500" width="6.500" height="8" fill="#10e0c0"/><rect x="1801.500" y="145" width="7" height="6.500" fill="#f8a010"/><path d="M1801.500 135.500h9v6l-4 3h-5z" fill="#e8eef8"/><circle cx="1803.500" cy="138.500" r="1.500" fill="#4a8ad8"/><path d="M1804 151l9-17l2.500 1.500l-9 17z" fill="#e8c040" stroke="#7a5a20" stroke-width="0.500"/><path d="M1812 136l1.500-2.500l2 1l-1.500 2.500z" fill="#d88"/><path d="M1849.500 100v39.500M1865.500 100v39.500" stroke="#109cf8" stroke-width="2.600"/><path d="M1837.500 139l39-39" stroke="#e88010" stroke-width="1.800" stroke-dasharray="2.500 1.800"/><circle cx="1865.500" cy="112.300" r="7.500" fill="#e4e4e4" stroke="#8a8a8a" stroke-width="0.800"/><circle cx="1849.500" cy="126" r="7.500" fill="#e4e4e4" stroke="#8a8a8a" stroke-width="0.800"/><g fill="#f0f070" stroke="#333" stroke-width="0.900"><circle cx="1863.200" cy="114" r="1.900"/><circle cx="1867.800" cy="114" r="1.900"/><circle cx="1865.500" cy="110" r="1.900"/><circle cx="1847.200" cy="127.700" r="1.900"/><circle cx="1851.800" cy="127.700" r="1.900"/><circle cx="1849.500" cy="123.700" r="1.900"/></g><path d="M82.3 202.500h9.400l-4.700 5z" fill="#d8d8d8"/><path d="M341.3 202.500h9.400l-4.700 5z" fill="#d8d8d8"/><path d="M712.3 202.500h9.400l-4.700 5z" fill="#d8d8d8"/><path d="M1007.3 202.500h9.400l-4.700 5z" fill="#d8d8d8"/><path d="M1445.3 202.500h9.400l-4.700 5z" fill="#d8d8d8"/><path d="M1718.3 202.500h9.400l-4.700 5z" fill="#d8d8d8"/></svg>
<span class="t" style="top:147px;font-size:15px;line-height:15px;color:#f2f2f2;font-family:'Liberation Sans',sans-serif;left:50px;transform:translateX(-50%);">Localizações</span>
<span class="t" style="top:146px;font-size:15px;line-height:15px;color:#f2f2f2;font-family:'Liberation Sans',sans-serif;left:125.5px;transform:translateX(-50%);">Novo</span>
<span class="t" style="top:146px;font-size:15px;line-height:15px;color:#f2f2f2;font-family:'Liberation Sans',sans-serif;left:186px;transform:translateX(-50%);">Gestão de</span>
<span class="t" style="top:166px;font-size:15px;line-height:15px;color:#f2f2f2;font-family:'Liberation Sans',sans-serif;left:186px;transform:translateX(-50%);">folhas</span>
<span class="t" style="top:146px;font-size:15px;line-height:15px;color:#f2f2f2;font-family:'Liberation Sans',sans-serif;left:260px;transform:translateX(-50%);">Biblioteca</span>
<span class="t" style="top:104px;font-size:15px;line-height:15px;color:#f2f2f2;font-family:'Liberation Sans',sans-serif;left:329px;">Voltar</span>
<span class="t" style="top:135px;font-size:15px;line-height:15px;color:#f2f2f2;font-family:'Liberation Sans',sans-serif;left:329px;">Próximo</span>
<span class="t" style="top:166px;font-size:15px;line-height:15px;color:#f2f2f2;font-family:'Liberation Sans',sans-serif;left:329px;">Utilidade</span>
<span class="t" style="top:104px;font-size:15px;line-height:15px;color:#f2f2f2;font-family:'Liberation Sans',sans-serif;left:428px;">Excluir folha</span>
<span class="t" style="top:135px;font-size:15px;line-height:15px;color:#f2f2f2;font-family:'Liberation Sans',sans-serif;left:428px;">Novo marcador</span>
<span class="t" style="top:166px;font-size:15px;line-height:15px;color:#f2f2f2;font-family:'Liberation Sans',sans-serif;left:428px;">Marcadores</span>
<span class="t" style="top:146px;font-size:15px;line-height:15px;color:#f2f2f2;font-family:'Liberation Sans',sans-serif;left:569px;transform:translateX(-50%);">Fio</span>
<span class="t" style="top:104px;font-size:15px;line-height:15px;color:#f2f2f2;font-family:'Liberation Sans',sans-serif;left:877px;">Retornos</span>
<span class="t" style="top:135px;font-size:15px;line-height:15px;color:#f2f2f2;font-family:'Liberation Sans',sans-serif;left:877px;">Víncula</span>
<span class="t" style="top:166px;font-size:15px;line-height:15px;color:#f2f2f2;font-family:'Liberation Sans',sans-serif;left:877px;">Marcação</span>
<span class="t" style="top:104px;font-size:15px;line-height:15px;color:#f2f2f2;font-family:'Liberation Sans',sans-serif;left:980px;">Editar</span>
<span class="t" style="top:135px;font-size:15px;line-height:15px;color:#f2f2f2;font-family:'Liberation Sans',sans-serif;left:980px;">Excluir</span>
<span class="t" style="top:166px;font-size:15px;line-height:15px;color:#f2f2f2;font-family:'Liberation Sans',sans-serif;left:980px;">Nòs</span>
<span class="t" style="top:104px;font-size:15px;line-height:15px;color:#f2f2f2;font-family:'Liberation Sans',sans-serif;left:1062px;">Relatórios</span>
<span class="t" style="top:135px;font-size:15px;line-height:15px;color:#f2f2f2;font-family:'Liberation Sans',sans-serif;left:1062px;">Blindagem</span>
<span class="t" style="top:166px;font-size:15px;line-height:15px;color:#f2f2f2;font-family:'Liberation Sans',sans-serif;left:1062px;">Navegador</span>
<span class="t" style="top:146px;font-size:15px;line-height:15px;color:#f2f2f2;font-family:'Liberation Sans',sans-serif;left:1186px;transform:translateX(-50%);">Biblioteca</span>
<span class="t" style="top:146px;font-size:15px;line-height:15px;color:#f2f2f2;font-family:'Liberation Sans',sans-serif;left:1274.5px;transform:translateX(-50%);">Equipamentos</span>
<span class="t" style="top:104px;font-size:15px;line-height:15px;color:#f2f2f2;font-family:'Liberation Sans',sans-serif;left:1357px;">Bornes</span>
<span class="t" style="top:135px;font-size:15px;line-height:15px;color:#f2f2f2;font-family:'Liberation Sans',sans-serif;left:1357px;">Conectores</span>
<span class="t" style="top:166px;font-size:15px;line-height:15px;color:#f2f2f2;font-family:'Liberation Sans',sans-serif;left:1357px;">Numeração bornes</span>
<span class="t" style="top:104px;font-size:15px;line-height:15px;color:#f2f2f2;font-family:'Liberation Sans',sans-serif;left:1522px;">Componentes</span>
<span class="t" style="top:135px;font-size:15px;line-height:15px;color:#f2f2f2;font-family:'Liberation Sans',sans-serif;left:1522px;">Setup símbolo</span>
<span class="t" style="top:166px;font-size:15px;line-height:15px;color:#f2f2f2;font-family:'Liberation Sans',sans-serif;left:1522px;">Descrição linha/coluna</span>
<svg style="left:0;top:0;" width="1" height="1"><text x="1711" y="160" font-family="'Liberation Sans',sans-serif" font-size="15" font-weight="normal" font-style="normal" fill="#f2f2f2" text-anchor="middle" textLength="22.5" lengthAdjust="spacingAndGlyphs">PLC</text></svg>
<svg style="left:0;top:0;" width="1" height="1"><text x="1764.7" y="160" font-family="'Liberation Sans',sans-serif" font-size="15" font-weight="normal" font-style="normal" fill="#f2f2f2" text-anchor="middle" textLength="24.2" lengthAdjust="spacingAndGlyphs">Fast</text></svg>
<span class="t" style="top:167px;font-size:15px;line-height:15px;color:#f2f2f2;font-family:'Liberation Sans',sans-serif;left:1767px;transform:translateX(-50%);">Builder</span>
<span class="t" style="top:147px;font-size:15px;line-height:15px;color:#f2f2f2;font-family:'Liberation Sans',sans-serif;left:1857px;transform:translateX(-50%);">Define</span>
<span class="t" style="top:167px;font-size:15px;line-height:15px;color:#f2f2f2;font-family:'Liberation Sans',sans-serif;left:1857px;transform:translateX(-50%);">cabo</span>
<span class="t" style="top:196px;font-size:15px;line-height:15px;color:#f2f2f2;font-family:'Liberation Sans',sans-serif;left:8px;">Diagrama</span>
<svg style="left:0;top:0;" width="1" height="1"><text x="291" y="209" font-family="'Liberation Sans',sans-serif" font-size="15" font-weight="normal" font-style="normal" fill="#f2f2f2" text-anchor="start" textLength="41.7" lengthAdjust="spacingAndGlyphs">Folhas</text></svg>
<svg style="left:0;top:0;" width="1" height="1"><text x="664" y="209" font-family="'Liberation Sans',sans-serif" font-size="15" font-weight="normal" font-style="normal" fill="#f2f2f2" text-anchor="start" textLength="40.2" lengthAdjust="spacingAndGlyphs">Linhas</text></svg>
<svg style="left:0;top:0;" width="1" height="1"><text x="973" y="209" font-family="'Liberation Sans',sans-serif" font-size="15" font-weight="normal" font-style="normal" fill="#f2f2f2" text-anchor="start" textLength="25.7" lengthAdjust="spacingAndGlyphs">Fios</text></svg>
<span class="t" style="top:196px;font-size:15px;line-height:15px;color:#f2f2f2;font-family:'Liberation Sans',sans-serif;left:1375px;">Símbolos</span>
<svg style="left:0;top:0;" width="1" height="1"><text x="1692.4" y="209" font-family="'Liberation Sans',sans-serif" font-size="15" font-weight="normal" font-style="normal" fill="#f2f2f2" text-anchor="start" textLength="18.6" lengthAdjust="spacingAndGlyphs">Plc</text></svg>
<svg style="left:0;top:0;" width="1" height="1"><text x="1745.7" y="209" font-family="'Liberation Sans',sans-serif" font-size="15" font-weight="normal" font-style="normal" fill="#f2f2f2" text-anchor="start" textLength="75" lengthAdjust="spacingAndGlyphs">Fast Builder</text></svg>
<svg style="left:0;top:0;" width="1" height="1"><text x="1837.3" y="209" font-family="'Liberation Sans',sans-serif" font-size="15" font-weight="normal" font-style="normal" fill="#f2f2f2" text-anchor="start" textLength="40.6" lengthAdjust="spacingAndGlyphs">Cabos</text></svg>
<div style="left:0px;top:215px;width:1918px;height:33px;background:#222933;"></div>
<div style="left:0px;top:248px;width:1918px;height:8px;background:#3b4453;"></div>
<svg style="left:220px;top:215px;" width="130" height="34" viewBox="0 0 130 34"><path d="M7.300 33L18.800 3h98l-11.500 30z" fill="#3b4453"/></svg>
<svg style="left:18px;top:222px;" width="24" height="22" viewBox="0 0 24 22"><path d="M2 3.500h20M2 11h20M2 18.500h20" stroke="#e8e8e8" stroke-width="2"/></svg>
<svg style="left:0px;top:215px;" width="420" height="34" viewBox="0 0 420 34"><g stroke="#5a6270" stroke-width="1"><path d="M54 28l8-22M115 28l8-22M379 28l8.500-22"/></g><path d="M349.500 18h17M358 9.500v17" stroke="#f0f0f0" stroke-width="2.300"/><path d="M312 13l9 9M321 13l-9 9" stroke="#b8bcc4" stroke-width="2"/></svg>
<span class="t" style="top:226px;font-size:15px;line-height:15px;color:#f0f0f0;font-family:'Liberation Sans',sans-serif;left:72px;">Start</span>
<span class="t" style="top:226px;font-size:15px;line-height:15px;color:#f0f0f0;font-family:'Liberation Sans',sans-serif;left:133px;">EG05-159*</span>
<span class="t" style="top:226px;font-size:15px;line-height:15px;color:#ffffff;font-family:'Liberation Sans',sans-serif;font-weight:bold;left:248px;">EG002*</span>
<div style="left:406px;top:253px;width:1092px;height:637px;background:#212830;overflow:hidden;"><svg style="left:0;top:0;font-family:'Liberation Sans',sans-serif;" width="1092" height="637" viewBox="406 253 1092 637"><path d="M458.500 253V890M470.500 264V890M470.500 263.500H1429.500M1429.500 264V890M1441 253V890" stroke="#c4c4c4" stroke-width="1.3" fill="none" /><path d="M598.8 253V263.500" stroke="#c4c4c4" stroke-width="1.3" fill="none" /><path d="M715.5 253V263.500" stroke="#c4c4c4" stroke-width="1.3" fill="none" /><path d="M832.2 253V263.500" stroke="#c4c4c4" stroke-width="1.3" fill="none" /><path d="M949.6 253V263.500" stroke="#c4c4c4" stroke-width="1.3" fill="none" /><path d="M1066.5 253V263.500" stroke="#c4c4c4" stroke-width="1.3" fill="none" /><path d="M1183.4 253V263.500" stroke="#c4c4c4" stroke-width="1.3" fill="none" /><path d="M1300.2 253V263.500" stroke="#c4c4c4" stroke-width="1.3" fill="none" /><text x="540" y="260.5" fill="#c4c4c4" font-size="8" font-weight="normal" text-anchor="middle" textLength="4.0" lengthAdjust="spacingAndGlyphs">1</text><text x="657" y="260.5" fill="#c4c4c4" font-size="8" font-weight="normal" text-anchor="middle" textLength="4.0" lengthAdjust="spacingAndGlyphs">2</text><text x="774" y="260.5" fill="#c4c4c4" font-size="8" font-weight="normal" text-anchor="middle" textLength="4.0" lengthAdjust="spacingAndGlyphs">3</text><text x="891" y="260.5" fill="#c4c4c4" font-size="8" font-weight="normal" text-anchor="middle" textLength="4.0" lengthAdjust="spacingAndGlyphs">4</text><text x="1008" y="260.5" fill="#c4c4c4" font-size="8" font-weight="normal" text-anchor="middle" textLength="4.0" lengthAdjust="spacingAndGlyphs">5</text><text x="1125" y="260.5" fill="#c4c4c4" font-size="8" font-weight="normal" text-anchor="middle" textLength="4.0" lengthAdjust="spacingAndGlyphs">6</text><text x="1242" y="260.5" fill="#c4c4c4" font-size="8" font-weight="normal" text-anchor="middle" textLength="4.0" lengthAdjust="spacingAndGlyphs">7</text><text x="1359" y="260.5" fill="#c4c4c4" font-size="8" font-weight="normal" text-anchor="middle" textLength="4.0" lengthAdjust="spacingAndGlyphs">8</text><path d="M458.500 373.5H470.500M1429.500 373.5H1441" stroke="#c4c4c4" stroke-width="1.3" fill="none" /><path d="M458.500 491H470.500M1429.500 491H1441" stroke="#c4c4c4" stroke-width="1.3" fill="none" /><path d="M458.500 608.5H470.500M1429.500 608.5H1441" stroke="#c4c4c4" stroke-width="1.3" fill="none" /><path d="M458.500 726H470.500M1429.500 726H1441" stroke="#c4c4c4" stroke-width="1.3" fill="none" /><path d="M458.500 843.5H470.500M1429.500 843.5H1441" stroke="#c4c4c4" stroke-width="1.3" fill="none" /><text x="464.5" y="316" fill="#c4c4c4" font-size="8" font-weight="normal" text-anchor="middle" textLength="4.0" lengthAdjust="spacingAndGlyphs">A</text><text x="464.5" y="433" fill="#c4c4c4" font-size="8" font-weight="normal" text-anchor="middle" textLength="4.0" lengthAdjust="spacingAndGlyphs">B</text><text x="1435.5" y="433" fill="#c4c4c4" font-size="8" font-weight="normal" text-anchor="middle" textLength="4.0" lengthAdjust="spacingAndGlyphs">B</text><text x="464.5" y="550" fill="#c4c4c4" font-size="8" font-weight="normal" text-anchor="middle" textLength="4.0" lengthAdjust="spacingAndGlyphs">C</text><text x="1435.5" y="550" fill="#c4c4c4" font-size="8" font-weight="normal" text-anchor="middle" textLength="4.0" lengthAdjust="spacingAndGlyphs">C</text><text x="464.5" y="667" fill="#c4c4c4" font-size="8" font-weight="normal" text-anchor="middle" textLength="4.0" lengthAdjust="spacingAndGlyphs">D</text><text x="1435.5" y="667" fill="#c4c4c4" font-size="8" font-weight="normal" text-anchor="middle" textLength="4.0" lengthAdjust="spacingAndGlyphs">D</text><text x="464.5" y="784" fill="#c4c4c4" font-size="8" font-weight="normal" text-anchor="middle" textLength="4.0" lengthAdjust="spacingAndGlyphs">E</text><text x="1435.5" y="784" fill="#c4c4c4" font-size="8" font-weight="normal" text-anchor="middle" textLength="4.0" lengthAdjust="spacingAndGlyphs">E</text><rect x="601" y="312.9" width="742.5" height="5.200" fill="none" stroke="#e8780c" stroke-width="1.250"/><path d="M605.6 315.5H1343.5" stroke="#e8780c" stroke-width="4.600" stroke-dasharray="1.150 4.100"/><rect x="601" y="336.4" width="742.5" height="5.200" fill="none" stroke="#e8780c" stroke-width="1.250"/><path d="M605.6 339H1343.5" stroke="#e8780c" stroke-width="4.600" stroke-dasharray="1.150 4.100"/><rect x="599" y="359.4" width="537" height="5.200" fill="none" stroke="#e8780c" stroke-width="1.250"/><path d="M603.6 362H1136" stroke="#e8780c" stroke-width="4.600" stroke-dasharray="1.150 4.100"/><rect x="713.0" y="318" width="5" height="64.5" fill="none" stroke="#e8780c" stroke-width="1.250"/><path d="M715.5 322.6V382.5" stroke="#e8780c" stroke-width="4.600" stroke-dasharray="1.150 4.100"/><rect x="853.5" y="318" width="5" height="64.5" fill="none" stroke="#e8780c" stroke-width="1.250"/><path d="M856 322.6V382.5" stroke="#e8780c" stroke-width="4.600" stroke-dasharray="1.150 4.100"/><rect x="1087.5" y="318" width="5" height="64.5" fill="none" stroke="#e8780c" stroke-width="1.250"/><path d="M1090 322.6V382.5" stroke="#e8780c" stroke-width="4.600" stroke-dasharray="1.150 4.100"/><rect x="736.5" y="346.5" width="5" height="31.5" fill="none" stroke="#e8780c" stroke-width="1.250"/><path d="M739 351.1V378" stroke="#e8780c" stroke-width="4.600" stroke-dasharray="1.150 4.100"/><rect x="876.8" y="346.5" width="5" height="31.5" fill="none" stroke="#e8780c" stroke-width="1.250"/><path d="M879.3 351.1V378" stroke="#e8780c" stroke-width="4.600" stroke-dasharray="1.150 4.100"/><rect x="1110.8" y="346.5" width="5" height="31.5" fill="none" stroke="#e8780c" stroke-width="1.250"/><path d="M1113.3 351.1V378" stroke="#e8780c" stroke-width="4.600" stroke-dasharray="1.150 4.100"/><rect x="760.0" y="366" width="5" height="16.5" fill="none" stroke="#e8780c" stroke-width="1.250"/><path d="M762.5 370.6V382.5" stroke="#e8780c" stroke-width="4.600" stroke-dasharray="1.150 4.100"/><rect x="1134.0" y="366" width="5" height="16.5" fill="none" stroke="#e8780c" stroke-width="1.250"/><path d="M1136.5 370.6V382.5" stroke="#e8780c" stroke-width="4.600" stroke-dasharray="1.150 4.100"/><circle cx="715.5" cy="315.5" r="2.3" fill="#00e000"/><circle cx="739" cy="339" r="2.3" fill="#00e000"/><circle cx="762.5" cy="362" r="2.3" fill="#00e000"/><circle cx="856" cy="315.5" r="2.3" fill="#00e000"/><circle cx="879.3" cy="339" r="2.3" fill="#00e000"/><circle cx="1090" cy="315.5" r="2.3" fill="#00e000"/><circle cx="1113.3" cy="339" r="2.3" fill="#00e000"/><path d="M510 339H576" stroke="#ffffff" stroke-width="3.4" fill="none" /><path d="M576 339L587 315.500H601M576 339H599M576 339L587 362H599" stroke="#00e000" stroke-width="1.3" fill="none" /><path d="M506 335l5 4l-5 4z" fill="#00e000"/><text x="485" y="342" fill="#f01010" font-size="7.5" font-weight="normal" text-anchor="start" textLength="15.0" lengthAdjust="spacingAndGlyphs">3/A6</text><text x="506" y="334" fill="#f0f000" font-size="7" font-weight="bold" text-anchor="start" textLength="10.5" lengthAdjust="spacingAndGlyphs">W28</text><text x="530" y="334" fill="#f0f000" font-size="7" font-weight="bold" text-anchor="start" textLength="10.5" lengthAdjust="spacingAndGlyphs">W28</text><text x="602" y="311" fill="#f0f000" font-size="7" font-weight="bold" text-anchor="start" textLength="7.0" lengthAdjust="spacingAndGlyphs">BU</text><text x="602" y="334.5" fill="#f0f000" font-size="7" font-weight="bold" text-anchor="start" textLength="7.0" lengthAdjust="spacingAndGlyphs">BK</text><text x="602" y="358" fill="#f0f000" font-size="7" font-weight="bold" text-anchor="start" textLength="7.0" lengthAdjust="spacingAndGlyphs">WH</text><text x="968" y="311" fill="#f0f000" font-size="6.5" font-weight="bold" text-anchor="start" textLength="13.0" lengthAdjust="spacingAndGlyphs">3.21</text><text x="966" y="334.5" fill="#f0f000" font-size="6.5" font-weight="bold" text-anchor="start" textLength="13.0" lengthAdjust="spacingAndGlyphs">3.22</text><text x="954" y="358" fill="#f0f000" font-size="6.5" font-weight="bold" text-anchor="start" textLength="13.0" lengthAdjust="spacingAndGlyphs">3.23</text><text x="1327" y="311" fill="#f0f000" font-size="6.5" font-weight="bold" text-anchor="start" textLength="13.0" lengthAdjust="spacingAndGlyphs">3.21</text><text x="1326" y="334.5" fill="#f0f000" font-size="6.5" font-weight="bold" text-anchor="start" textLength="13.0" lengthAdjust="spacingAndGlyphs">3.22</text><path d="M1347 315.5H1356M1351 312.0L1356 315.5L1351 319.0" stroke="#00e000" stroke-width="1.3" fill="none" /><path d="M1347 339H1356M1351 335.5L1356 339L1351 342.5" stroke="#00e000" stroke-width="1.3" fill="none" /><text x="1362" y="318.5" fill="#f0f000" font-size="7" font-weight="bold" text-anchor="start" textLength="14.0" lengthAdjust="spacingAndGlyphs">6/A1</text><text x="1362" y="342" fill="#f0f000" font-size="7" font-weight="bold" text-anchor="start" textLength="14.0" lengthAdjust="spacingAndGlyphs">6/B1</text><text x="976" y="379" fill="#f0f000" font-size="6.5" font-weight="bold" text-anchor="start" textLength="108.3" lengthAdjust="spacingAndGlyphs">TRANSPORTE DE CILINDRO DE VÁCUO</text><path d="M528 385.500H598.800V503" stroke="#f01010" stroke-width="2.6" fill="none" /><path d="M528 408.800H575.500V503" stroke="#0000f8" stroke-width="2.6" fill="none" /><path d="M518 385.5H527M522 382.0L527 385.5L522 389.0" stroke="#00e000" stroke-width="1.3" fill="none" /><path d="M518 408.8H527M522 405.3L527 408.8L522 412.3" stroke="#00e000" stroke-width="1.3" fill="none" /><text x="499" y="389" fill="#f0f000" font-size="7.5" font-weight="bold" text-anchor="start" textLength="15.0" lengthAdjust="spacingAndGlyphs">3/B6</text><text x="499" y="412" fill="#f0f000" font-size="7.5" font-weight="bold" text-anchor="start" textLength="15.0" lengthAdjust="spacingAndGlyphs">3/B6</text><text x="537" y="382" fill="#f0f000" font-size="6.5" font-weight="bold" text-anchor="start" textLength="13.0" lengthAdjust="spacingAndGlyphs">3.17</text><text x="537" y="405" fill="#f0f000" font-size="6.5" font-weight="bold" text-anchor="start" textLength="13.0" lengthAdjust="spacingAndGlyphs">3.18</text><text x="596.5" y="450" fill="#f0f000" font-size="6.5" font-weight="bold" text-anchor="start" transform="rotate(-90 596.5 450)" textLength="13.0" lengthAdjust="spacingAndGlyphs">3.17</text><text x="573" y="462" fill="#f0f000" font-size="6.5" font-weight="bold" text-anchor="start" transform="rotate(-90 573 462)" textLength="13.0" lengthAdjust="spacingAndGlyphs">3.18</text><path d="M575.500 503V514q0 3 3 3q3 0 3 -2.500q0 2.500 3 2.500q3 0 3 -2.500q0 2.500 3 2.500q3 0 3 -2.500q0 2.500 2.500 2.500q2.800 0 2.800 -3V503" stroke="#00e000" stroke-width="1.3" fill="none" /><path d="M575.500 537V526.500q0 -3 3 -3q3 0 3 2.500q0 -2.500 3 -2.500q3 0 3 2.500q0 -2.500 3 -2.500q3 0 3 2.500q0 -2.500 2.500 -2.500q2.800 0 2.800 3V537" stroke="#00e000" stroke-width="1.3" fill="none" /><path d="M575.500 537V597" stroke="#0000f8" stroke-width="2.6" fill="none" /><path d="M598.800 537V597" stroke="#f01010" stroke-width="2.6" fill="none" /><text x="550" y="509" fill="#10f4f4" font-size="8.5" font-weight="bold" text-anchor="start" textLength="14.3" lengthAdjust="spacingAndGlyphs">+Q1</text><text x="555" y="517" fill="#10f4f4" font-size="8.5" font-weight="bold" text-anchor="start" textLength="9.6" lengthAdjust="spacingAndGlyphs">T3</text><text x="545" y="528" fill="#f0f000" font-size="7" font-weight="bold" text-anchor="start" textLength="17.5" lengthAdjust="spacingAndGlyphs">-110V</text><text x="546" y="535.5" fill="#f0f000" font-size="6.5" font-weight="bold" text-anchor="start" textLength="19.5" lengthAdjust="spacingAndGlyphs">XILIAR</text><text x="596.5" y="513" fill="#f0f000" font-size="6.5" font-weight="bold" text-anchor="start" transform="rotate(-90 596.5 513)" textLength="9.8" lengthAdjust="spacingAndGlyphs">400</text><text x="596.5" y="541" fill="#f0f000" font-size="6.5" font-weight="bold" text-anchor="start" transform="rotate(-90 596.5 541)" textLength="9.8" lengthAdjust="spacingAndGlyphs">110</text><text x="572.5" y="576" fill="#f0f000" font-size="6.5" font-weight="bold" text-anchor="start" transform="rotate(-90 572.5 576)" textLength="9.8" lengthAdjust="spacingAndGlyphs">4.1</text><text x="596" y="576" fill="#f0f000" font-size="6.5" font-weight="bold" text-anchor="start" transform="rotate(-90 596 576)" textLength="9.8" lengthAdjust="spacingAndGlyphs">4.2</text><path d="M575.500 597V602M598.800 597V602M575.500 625.700V631M598.800 625.700V631" stroke="#00e000" stroke-width="1.3" fill="none" /><rect x="569.200" y="602" width="35.800" height="23.700" fill="none" stroke="#00e000" stroke-width="1.300"/><path d="M569.200 625.700L605 602" stroke="#00e000" stroke-width="1.2" fill="none" /><text x="571" y="616.5" fill="#00e000" font-size="7.5" font-weight="normal" text-anchor="start" textLength="7.5" lengthAdjust="spacingAndGlyphs">AC</text><text x="594" y="616" fill="#00e000" font-size="7.5" font-weight="normal" text-anchor="start" textLength="7.5" lengthAdjust="spacingAndGlyphs">DC</text><path d="M576 606q1.500 -2.500 3 0t3 0M588 606q1.500 -2.500 3 0t3 0M578 622h4M590 622h4M592 620v4" stroke="#00e000" stroke-width="1" fill="none" /><text x="550" y="602" fill="#10f4f4" font-size="8.5" font-weight="bold" text-anchor="start" textLength="14.3" lengthAdjust="spacingAndGlyphs">+Q1</text><text x="556" y="611" fill="#10f4f4" font-size="8.5" font-weight="bold" text-anchor="start" textLength="9.6" lengthAdjust="spacingAndGlyphs">G1</text><text x="545" y="620" fill="#f0f000" font-size="6.5" font-weight="bold" text-anchor="start" textLength="16.2" lengthAdjust="spacingAndGlyphs">24VDC</text><text x="545" y="627.5" fill="#f0f000" font-size="6.5" font-weight="bold" text-anchor="start" textLength="16.2" lengthAdjust="spacingAndGlyphs">4 VDC</text><path d="M575.500 631V736.800H624" stroke="#0000f8" stroke-width="2.6" fill="none" /><path d="M598.800 631V713.200H624" stroke="#f01010" stroke-width="2.6" fill="none" /><path d="M622 713.2H631M626 709.7L631 713.2L626 716.7" stroke="#00e000" stroke-width="1.3" fill="none" /><path d="M622 736.8H631M626 733.3L631 736.8L626 740.3" stroke="#00e000" stroke-width="1.3" fill="none" /><text x="637" y="716.5" fill="#f0f000" font-size="7" font-weight="bold" text-anchor="start" textLength="14.0" lengthAdjust="spacingAndGlyphs">6/B1</text><text x="637" y="740" fill="#f0f000" font-size="7" font-weight="bold" text-anchor="start" textLength="17.5" lengthAdjust="spacingAndGlyphs">10/A1</text><path d="M545 760.300H1348" stroke="#f0f000" stroke-width="3.2" fill="none" /><path d="M545 760.300H1348" stroke="#00e000" stroke-width="3.2" fill="none" stroke-dasharray="3 10.500"/><path d="M1347 760.3H1356M1351 756.8L1356 760.3L1351 763.8" stroke="#00e000" stroke-width="1.3" fill="none" /><text x="1362" y="763.5" fill="#f0f000" font-size="7" font-weight="bold" text-anchor="start" textLength="14.0" lengthAdjust="spacingAndGlyphs">5/E1</text><text x="934" y="757" fill="#f0f000" font-size="6" font-weight="bold" text-anchor="start" textLength="6.0" lengthAdjust="spacingAndGlyphs">GV</text><text x="1331" y="757" fill="#f0f000" font-size="6" font-weight="bold" text-anchor="start" textLength="6.0" lengthAdjust="spacingAndGlyphs">GV</text><path d="M715.7 385V397" stroke="#00e000" stroke-width="1.3" fill="none" /><path d="M713.2 395L718.7 400.500M718.7 395L713.2 400.500" stroke="#00e000" stroke-width="1.1" fill="none" /><path d="M707.7 395.500L712.7 403L715.7 409V420.500" stroke="#00e000" stroke-width="1.3" fill="none" /><rect x="707.2" y="401.500" width="5.500" height="5.500" fill="#00e000" transform="rotate(-30 709.7 404)"/><path d="M715.7 444.500V456" stroke="#00e000" stroke-width="1.3" fill="none" /><text x="711.7" y="393" fill="#f0f000" font-size="7" font-weight="bold" text-anchor="start" transform="rotate(-90 711.7 393)" textLength="3.5" lengthAdjust="spacingAndGlyphs">1</text><text x="711.7" y="453" fill="#f0f000" font-size="7" font-weight="bold" text-anchor="start" transform="rotate(-90 711.7 453)" textLength="3.5" lengthAdjust="spacingAndGlyphs">2</text><path d="M739.3 385V397" stroke="#00e000" stroke-width="1.3" fill="none" /><path d="M736.8 395L742.3 400.500M742.3 395L736.8 400.500" stroke="#00e000" stroke-width="1.1" fill="none" /><path d="M731.3 395.500L736.3 403L739.3 409V420.500" stroke="#00e000" stroke-width="1.3" fill="none" /><rect x="730.8" y="401.500" width="5.500" height="5.500" fill="#00e000" transform="rotate(-30 733.3 404)"/><path d="M739.3 444.500V456" stroke="#00e000" stroke-width="1.3" fill="none" /><text x="735.3" y="393" fill="#f0f000" font-size="7" font-weight="bold" text-anchor="start" transform="rotate(-90 735.3 393)" textLength="3.5" lengthAdjust="spacingAndGlyphs">3</text><text x="735.3" y="453" fill="#f0f000" font-size="7" font-weight="bold" text-anchor="start" transform="rotate(-90 735.3 453)" textLength="3.5" lengthAdjust="spacingAndGlyphs">4</text><path d="M762.6 385V397" stroke="#00e000" stroke-width="1.3" fill="none" /><path d="M760.1 395L765.6 400.500M765.6 395L760.1 400.500" stroke="#00e000" stroke-width="1.1" fill="none" /><path d="M754.6 395.500L759.6 403L762.6 409V420.500" stroke="#00e000" stroke-width="1.3" fill="none" /><rect x="754.1" y="401.500" width="5.500" height="5.500" fill="#00e000" transform="rotate(-30 756.6 404)"/><path d="M762.6 444.500V456" stroke="#00e000" stroke-width="1.3" fill="none" /><text x="758.6" y="393" fill="#f0f000" font-size="7" font-weight="bold" text-anchor="start" transform="rotate(-90 758.6 393)" textLength="3.5" lengthAdjust="spacingAndGlyphs">5</text><text x="758.6" y="453" fill="#f0f000" font-size="7" font-weight="bold" text-anchor="start" transform="rotate(-90 758.6 453)" textLength="3.5" lengthAdjust="spacingAndGlyphs">6</text><path d="M710.7 403.500H757.6" stroke="#f0f000" stroke-width="1.2" fill="none" stroke-dasharray="4 2.500"/><rect x="703.7" y="420.500" width="70.89999999999998" height="24" fill="none" stroke="#00e000" stroke-width="1.300"/><path d="M703.7 432.500H774.6M727.5 420.500V444.500M750.95 420.500V444.500" stroke="#00e000" stroke-width="1.3" fill="none" /><path d="M715.7 420.500V423.500H721.7V429.500H715.7V432.500" stroke="#00e000" stroke-width="1.2" fill="none" /><path d="M711.7 435l-1.500 7M716.7 435.500l4 2.800l-4 2.800" stroke="#00e000" stroke-width="1.1" fill="none" /><path d="M739.3 420.500V423.500H745.3V429.500H739.3V432.500" stroke="#00e000" stroke-width="1.2" fill="none" /><path d="M735.3 435l-1.500 7M740.3 435.500l4 2.800l-4 2.800" stroke="#00e000" stroke-width="1.1" fill="none" /><path d="M762.6 420.500V423.500H768.6V429.500H762.6V432.500" stroke="#00e000" stroke-width="1.2" fill="none" /><path d="M758.6 435l-1.500 7M763.6 435.500l4 2.800l-4 2.800" stroke="#00e000" stroke-width="1.1" fill="none" /><text x="686" y="390" fill="#10f4f4" font-size="8.5" font-weight="bold" text-anchor="start" textLength="14.3" lengthAdjust="spacingAndGlyphs">+Q1</text><text x="690" y="398.5" fill="#10f4f4" font-size="8.5" font-weight="bold" text-anchor="start" textLength="9.6" lengthAdjust="spacingAndGlyphs">Q7</text><text x="645" y="416" fill="#f0f000" font-size="6.5" font-weight="bold" text-anchor="start" textLength="52.4" lengthAdjust="spacingAndGlyphs">MOTOR DE LAMINA</text><path d="M715.7 456V526" stroke="#a46a30" stroke-width="2.2" fill="none" /><path d="M715.7 560V783" stroke="#a46a30" stroke-width="2.2" fill="none" /><path d="M739.3 456V526" stroke="#8c8c8c" stroke-width="2.2" fill="none" /><path d="M739.3 560V783" stroke="#8c8c8c" stroke-width="2.2" fill="none" /><path d="M762.6 456V526" stroke="#cfcfcf" stroke-width="2.6" fill="none" /><path d="M762.6 560V783" stroke="#cfcfcf" stroke-width="2.6" fill="none" /><text x="711.7" y="534" fill="#f0f000" font-size="7" font-weight="bold" text-anchor="start" transform="rotate(-90 711.7 534)" textLength="3.5" lengthAdjust="spacingAndGlyphs">1</text><text x="711.7" y="559" fill="#f0f000" font-size="7" font-weight="bold" text-anchor="start" transform="rotate(-90 711.7 559)" textLength="3.5" lengthAdjust="spacingAndGlyphs">2</text><path d="M715.7 526V536" stroke="#00e000" stroke-width="1.3" fill="none" /><circle cx="714.7" cy="535" r="1.600" fill="none" stroke="#00e000" stroke-width="1"/><path d="M707.7 535L715.7 548.5V560" stroke="#00e000" stroke-width="1.3" fill="none" /><text x="735.3" y="534" fill="#f0f000" font-size="7" font-weight="bold" text-anchor="start" transform="rotate(-90 735.3 534)" textLength="3.5" lengthAdjust="spacingAndGlyphs">3</text><text x="735.3" y="559" fill="#f0f000" font-size="7" font-weight="bold" text-anchor="start" transform="rotate(-90 735.3 559)" textLength="3.5" lengthAdjust="spacingAndGlyphs">4</text><path d="M739.3 526V536" stroke="#00e000" stroke-width="1.3" fill="none" /><circle cx="738.3" cy="535" r="1.600" fill="none" stroke="#00e000" stroke-width="1"/><path d="M731.3 535L739.3 548.5V560" stroke="#00e000" stroke-width="1.3" fill="none" /><text x="758.6" y="534" fill="#f0f000" font-size="7" font-weight="bold" text-anchor="start" transform="rotate(-90 758.6 534)" textLength="3.5" lengthAdjust="spacingAndGlyphs">5</text><text x="758.6" y="559" fill="#f0f000" font-size="7" font-weight="bold" text-anchor="start" transform="rotate(-90 758.6 559)" textLength="3.5" lengthAdjust="spacingAndGlyphs">6</text><path d="M762.6 526V536" stroke="#00e000" stroke-width="1.3" fill="none" /><circle cx="761.6" cy="535" r="1.600" fill="none" stroke="#00e000" stroke-width="1"/><path d="M754.6 535L762.6 548.5V560" stroke="#00e000" stroke-width="1.3" fill="none" /><path d="M712.7 543H759.6" stroke="#f0f000" stroke-width="1.2" fill="none" stroke-dasharray="4 2.500"/><text x="692" y="530" fill="#10f4f4" font-size="8.5" font-weight="bold" text-anchor="start" textLength="14.3" lengthAdjust="spacingAndGlyphs">+Q1</text><text x="697" y="539" fill="#10f4f4" font-size="8.5" font-weight="bold" text-anchor="start" textLength="9.6" lengthAdjust="spacingAndGlyphs">K2</text><text x="685" y="550" fill="#f0f000" font-size="7" font-weight="bold" text-anchor="start" textLength="17.5" lengthAdjust="spacingAndGlyphs">22/D2</text><text x="712.7" y="497" fill="#f0f000" font-size="6.5" font-weight="bold" text-anchor="start" transform="rotate(-90 712.7 497)" textLength="9.8" lengthAdjust="spacingAndGlyphs">4.3</text><text x="712.7" y="676" fill="#f0f000" font-size="6.5" font-weight="bold" text-anchor="start" transform="rotate(-90 712.7 676)" textLength="9.8" lengthAdjust="spacingAndGlyphs">4.4</text><text x="736.3" y="497" fill="#f0f000" font-size="6.5" font-weight="bold" text-anchor="start" transform="rotate(-90 736.3 497)" textLength="9.8" lengthAdjust="spacingAndGlyphs">4.5</text><text x="736.3" y="676" fill="#f0f000" font-size="6.5" font-weight="bold" text-anchor="start" transform="rotate(-90 736.3 676)" textLength="9.8" lengthAdjust="spacingAndGlyphs">4.5</text><text x="759.6" y="497" fill="#f0f000" font-size="6.5" font-weight="bold" text-anchor="start" transform="rotate(-90 759.6 497)" textLength="9.8" lengthAdjust="spacingAndGlyphs">4.7</text><text x="759.6" y="676" fill="#f0f000" font-size="6.5" font-weight="bold" text-anchor="start" transform="rotate(-90 759.6 676)" textLength="9.8" lengthAdjust="spacingAndGlyphs">4.6</text><path d="M786 389V399M786 409V420M783 397L786 409" stroke="#00e000" stroke-width="1.2" fill="none" /><path d="M794 389V399M794 409V420M797 397.500L794 409M794 399H797" stroke="#00e000" stroke-width="1.2" fill="none" /><text x="783" y="395" fill="#f0f000" font-size="5.5" font-weight="bold" text-anchor="start" transform="rotate(-90 783 395)" textLength="5.5" lengthAdjust="spacingAndGlyphs">13</text><text x="792" y="395" fill="#f0f000" font-size="5.5" font-weight="bold" text-anchor="start" transform="rotate(-90 792 395)" textLength="5.5" lengthAdjust="spacingAndGlyphs">21</text><text x="783" y="419" fill="#f0f000" font-size="5.5" font-weight="bold" text-anchor="start" transform="rotate(-90 783 419)" textLength="5.5" lengthAdjust="spacingAndGlyphs">14</text><text x="792" y="419" fill="#f0f000" font-size="5.5" font-weight="bold" text-anchor="start" transform="rotate(-90 792 419)" textLength="5.5" lengthAdjust="spacingAndGlyphs">22</text><text x="786" y="438" fill="#f0f000" font-size="5.5" font-weight="bold" text-anchor="start" transform="rotate(-90 786 438)" textLength="13.8" lengthAdjust="spacingAndGlyphs">22/C7</text><text x="795" y="438" fill="#f0f000" font-size="5.5" font-weight="bold" text-anchor="start" transform="rotate(-90 795 438)" textLength="13.8" lengthAdjust="spacingAndGlyphs">15/C3</text><path d="M1160 389V399M1160 409V420M1157 397L1160 409" stroke="#00e000" stroke-width="1.2" fill="none" /><path d="M1168 389V399M1168 409V420M1171 397.500L1168 409M1168 399H1171" stroke="#00e000" stroke-width="1.2" fill="none" /><text x="1157" y="395" fill="#f0f000" font-size="5.5" font-weight="bold" text-anchor="start" transform="rotate(-90 1157 395)" textLength="5.5" lengthAdjust="spacingAndGlyphs">13</text><text x="1166" y="395" fill="#f0f000" font-size="5.5" font-weight="bold" text-anchor="start" transform="rotate(-90 1166 395)" textLength="5.5" lengthAdjust="spacingAndGlyphs">21</text><text x="1157" y="419" fill="#f0f000" font-size="5.5" font-weight="bold" text-anchor="start" transform="rotate(-90 1157 419)" textLength="5.5" lengthAdjust="spacingAndGlyphs">14</text><text x="1166" y="419" fill="#f0f000" font-size="5.5" font-weight="bold" text-anchor="start" transform="rotate(-90 1166 419)" textLength="5.5" lengthAdjust="spacingAndGlyphs">22</text><text x="1160" y="438" fill="#f0f000" font-size="5.5" font-weight="bold" text-anchor="start" transform="rotate(-90 1160 438)" textLength="13.8" lengthAdjust="spacingAndGlyphs">22/C7</text><text x="1169" y="438" fill="#f0f000" font-size="5.5" font-weight="bold" text-anchor="start" transform="rotate(-90 1169 438)" textLength="13.8" lengthAdjust="spacingAndGlyphs">15/C3</text><path d="M856.3 385V397.500M852.8 397.500H859.8M849.3 396L856.3 409V420.500" stroke="#00e000" stroke-width="1.3" fill="none" /><rect x="850.3" y="398.500" width="4" height="9" rx="1.500" fill="none" stroke="#00e000" stroke-width="1.100" transform="rotate(-30 852.3 403)"/><path d="M879.5 385V397.500M876.0 397.500H883.0M872.5 396L879.5 409V420.500" stroke="#00e000" stroke-width="1.3" fill="none" /><rect x="873.5" y="398.500" width="4" height="9" rx="1.500" fill="none" stroke="#00e000" stroke-width="1.100" transform="rotate(-30 875.5 403)"/><path d="M845 403.500H877" stroke="#f0f000" stroke-width="1.2" fill="none" stroke-dasharray="4 2.500"/><path d="M845 400.500V406.500" stroke="#f0f000" stroke-width="1.2" fill="none" /><text x="826" y="390" fill="#10f4f4" font-size="8.5" font-weight="bold" text-anchor="start" textLength="14.3" lengthAdjust="spacingAndGlyphs">+Q1</text><text x="830" y="398.5" fill="#10f4f4" font-size="8.5" font-weight="bold" text-anchor="start" textLength="9.6" lengthAdjust="spacingAndGlyphs">Q8</text><text x="830" y="408.5" fill="#f0f000" font-size="7" font-weight="bold" text-anchor="start" textLength="10.5" lengthAdjust="spacingAndGlyphs">10A</text><text x="803" y="426" fill="#f0f000" font-size="6.5" font-weight="bold" text-anchor="start" textLength="52.4" lengthAdjust="spacingAndGlyphs">FREIO DE LAMINA</text><path d="M879.500 420.500V432.400H997" stroke="#f01010" stroke-width="2.8" fill="none" /><path d="M856.300 420.500V455.800H997" stroke="#a46a30" stroke-width="2.2" fill="none" /><text x="908" y="429" fill="#f0f000" font-size="6.5" font-weight="bold" text-anchor="start" textLength="13.0" lengthAdjust="spacingAndGlyphs">4.11</text><text x="908" y="452.5" fill="#f0f000" font-size="6.5" font-weight="bold" text-anchor="start" textLength="13.0" lengthAdjust="spacingAndGlyphs">4.10</text><path d="M997 479.200H809.500V585H762.600" stroke="#cfcfcf" stroke-width="2.4" fill="none" /><path d="M997 502.500H786.200V613.800H739.300" stroke="#8c8c8c" stroke-width="2.2" fill="none" /><path d="M997 525.700H856V713H1044" stroke="#f01010" stroke-width="2.8" fill="none" /><path d="M997 549.200H832.300V736.800H1044" stroke="#a46a30" stroke-width="2.2" fill="none" /><path d="M997 572.800H879.300V690H973.700V678" stroke="#a46a30" stroke-width="2.2" fill="none" /><path d="M926.300 690V678" stroke="#a46a30" stroke-width="2.2" fill="none" /><path d="M997 596H926.300V643.500" stroke="#cfcfcf" stroke-width="2.4" fill="none" /><path d="M997 619.500H973.500V643.500" stroke="#cfcfcf" stroke-width="2.4" fill="none" /><circle cx="762.6" cy="585" r="2" fill="#00e000"/><circle cx="739.3" cy="613.8" r="2" fill="#00e000"/><circle cx="926.3" cy="690" r="1.8" fill="#00e000"/><path d="M926.3 643.500V655M918.3 653L926.3 666V678" stroke="#00e000" stroke-width="1.3" fill="none" /><text x="901.3" y="649" fill="#10f4f4" font-size="8.5" font-weight="bold" text-anchor="start" textLength="14.3" lengthAdjust="spacingAndGlyphs">+Q1</text><text x="905.3" y="658" fill="#10f4f4" font-size="8.5" font-weight="bold" text-anchor="start" textLength="9.6" lengthAdjust="spacingAndGlyphs">K6</text><text x="895.3" y="668" fill="#f0f000" font-size="7" font-weight="bold" text-anchor="start" textLength="17.5" lengthAdjust="spacingAndGlyphs">25/D6</text><path d="M973.5 643.500V655M965.5 653L973.5 666V678" stroke="#00e000" stroke-width="1.3" fill="none" /><text x="948.5" y="649" fill="#10f4f4" font-size="8.5" font-weight="bold" text-anchor="start" textLength="14.3" lengthAdjust="spacingAndGlyphs">+Q1</text><text x="952.5" y="658" fill="#10f4f4" font-size="8.5" font-weight="bold" text-anchor="start" textLength="9.6" lengthAdjust="spacingAndGlyphs">K2</text><text x="942.5" y="668" fill="#f0f000" font-size="7" font-weight="bold" text-anchor="start" textLength="17.5" lengthAdjust="spacingAndGlyphs">22/D2</text><text x="971" y="654" fill="#f0f000" font-size="5.5" font-weight="bold" text-anchor="start" transform="rotate(-90 971 654)" textLength="5.5" lengthAdjust="spacingAndGlyphs">13</text><text x="971" y="680" fill="#f0f000" font-size="5.5" font-weight="bold" text-anchor="start" transform="rotate(-90 971 680)" textLength="5.5" lengthAdjust="spacingAndGlyphs">14</text><text x="971" y="636" fill="#f0f000" font-size="6" font-weight="bold" text-anchor="start" transform="rotate(-90 971 636)" textLength="12.0" lengthAdjust="spacingAndGlyphs">4.14</text><text x="983.5" y="640" fill="#f0f000" font-size="7" font-weight="bold" text-anchor="start" transform="rotate(-90 983.5 640)" textLength="10.5" lengthAdjust="spacingAndGlyphs">COM</text><text x="830" y="625" fill="#f0f000" font-size="6.5" font-weight="bold" text-anchor="start" transform="rotate(-90 830 625)" textLength="9.8" lengthAdjust="spacingAndGlyphs">4.9</text><text x="853.5" y="627" fill="#f0f000" font-size="6.5" font-weight="bold" text-anchor="start" transform="rotate(-90 853.5 627)" textLength="13.0" lengthAdjust="spacingAndGlyphs">22.1</text><text x="877" y="627" fill="#f0f000" font-size="6.5" font-weight="bold" text-anchor="start" transform="rotate(-90 877 627)" textLength="13.0" lengthAdjust="spacingAndGlyphs">4.12</text><text x="924" y="627" fill="#f0f000" font-size="6.5" font-weight="bold" text-anchor="start" transform="rotate(-90 924 627)" textLength="13.0" lengthAdjust="spacingAndGlyphs">4.13</text><path d="M1054 713H1045M1050 709.5L1045 713L1050 716.5" stroke="#00e000" stroke-width="1.3" fill="none" /><path d="M1044 736.8H1053M1048 733.3L1053 736.8L1048 740.3" stroke="#00e000" stroke-width="1.3" fill="none" /><text x="1057" y="716.5" fill="#f0f000" font-size="7" font-weight="bold" text-anchor="start" textLength="17.5" lengthAdjust="spacingAndGlyphs">22/A1</text><text x="1057" y="740" fill="#f0f000" font-size="7" font-weight="bold" text-anchor="start" textLength="17.5" lengthAdjust="spacingAndGlyphs">22/C1</text><text x="1023" y="709.5" fill="#f0f000" font-size="6.5" font-weight="bold" text-anchor="start" textLength="13.0" lengthAdjust="spacingAndGlyphs">22.1</text><text x="1025" y="733" fill="#f0f000" font-size="6.5" font-weight="bold" text-anchor="start" textLength="9.8" lengthAdjust="spacingAndGlyphs">4.9</text><circle cx="984.7" cy="432.4" r="2.4" fill="none" stroke="#00e000" stroke-width="1.200"/><text x="966" y="420.4" fill="#10f4f4" font-size="8.5" font-weight="bold" text-anchor="start" textLength="14.3" lengthAdjust="spacingAndGlyphs">+Q1</text><text x="966" y="428.9" fill="#10f4f4" font-size="8.5" font-weight="bold" text-anchor="start" textLength="14.3" lengthAdjust="spacingAndGlyphs">XFR</text><text x="983" y="440.4" fill="#f0f000" font-size="7" font-weight="bold" text-anchor="end" textLength="7.0" lengthAdjust="spacingAndGlyphs">IN</text><circle cx="984.7" cy="455.8" r="2.4" fill="none" stroke="#00e000" stroke-width="1.200"/><text x="966" y="443.8" fill="#10f4f4" font-size="8.5" font-weight="bold" text-anchor="start" textLength="14.3" lengthAdjust="spacingAndGlyphs">+Q1</text><text x="966" y="452.3" fill="#10f4f4" font-size="8.5" font-weight="bold" text-anchor="start" textLength="14.3" lengthAdjust="spacingAndGlyphs">XFR</text><text x="983" y="463.8" fill="#f0f000" font-size="7" font-weight="bold" text-anchor="end" textLength="7.0" lengthAdjust="spacingAndGlyphs">IN</text><circle cx="984.7" cy="479.2" r="2.4" fill="none" stroke="#00e000" stroke-width="1.200"/><text x="966" y="467.2" fill="#10f4f4" font-size="8.5" font-weight="bold" text-anchor="start" textLength="14.3" lengthAdjust="spacingAndGlyphs">+Q1</text><text x="966" y="475.7" fill="#10f4f4" font-size="8.5" font-weight="bold" text-anchor="start" textLength="14.3" lengthAdjust="spacingAndGlyphs">XFR</text><text x="983" y="487.2" fill="#f0f000" font-size="7" font-weight="bold" text-anchor="end" textLength="10.5" lengthAdjust="spacingAndGlyphs">OUT</text><circle cx="984.7" cy="502.5" r="2.4" fill="none" stroke="#00e000" stroke-width="1.200"/><text x="966" y="490.5" fill="#10f4f4" font-size="8.5" font-weight="bold" text-anchor="start" textLength="14.3" lengthAdjust="spacingAndGlyphs">+Q1</text><text x="966" y="499.0" fill="#10f4f4" font-size="8.5" font-weight="bold" text-anchor="start" textLength="14.3" lengthAdjust="spacingAndGlyphs">XFR</text><text x="983" y="510.5" fill="#f0f000" font-size="7" font-weight="bold" text-anchor="end" textLength="10.5" lengthAdjust="spacingAndGlyphs">OUT</text><circle cx="984.7" cy="525.7" r="2.4" fill="none" stroke="#00e000" stroke-width="1.200"/><text x="966" y="513.7" fill="#10f4f4" font-size="8.5" font-weight="bold" text-anchor="start" textLength="14.3" lengthAdjust="spacingAndGlyphs">+Q1</text><text x="966" y="522.2" fill="#10f4f4" font-size="8.5" font-weight="bold" text-anchor="start" textLength="14.3" lengthAdjust="spacingAndGlyphs">XFR</text><text x="983" y="533.7" fill="#f0f000" font-size="7" font-weight="bold" text-anchor="end" textLength="7.0" lengthAdjust="spacingAndGlyphs">NC</text><circle cx="984.7" cy="549.2" r="2.4" fill="none" stroke="#00e000" stroke-width="1.200"/><text x="966" y="537.2" fill="#10f4f4" font-size="8.5" font-weight="bold" text-anchor="start" textLength="14.3" lengthAdjust="spacingAndGlyphs">+Q1</text><text x="966" y="545.7" fill="#10f4f4" font-size="8.5" font-weight="bold" text-anchor="start" textLength="14.3" lengthAdjust="spacingAndGlyphs">XFR</text><text x="983" y="557.2" fill="#f0f000" font-size="7" font-weight="bold" text-anchor="end" textLength="10.5" lengthAdjust="spacingAndGlyphs">COM</text><circle cx="984.7" cy="572.8" r="2.4" fill="none" stroke="#00e000" stroke-width="1.200"/><text x="966" y="560.8" fill="#10f4f4" font-size="8.5" font-weight="bold" text-anchor="start" textLength="14.3" lengthAdjust="spacingAndGlyphs">+Q1</text><text x="966" y="569.3" fill="#10f4f4" font-size="8.5" font-weight="bold" text-anchor="start" textLength="14.3" lengthAdjust="spacingAndGlyphs">XFR</text><text x="983" y="580.8" fill="#f0f000" font-size="7" font-weight="bold" text-anchor="end" textLength="7.0" lengthAdjust="spacingAndGlyphs">FN</text><circle cx="984.7" cy="596" r="2.4" fill="none" stroke="#00e000" stroke-width="1.200"/><text x="966" y="584" fill="#10f4f4" font-size="8.5" font-weight="bold" text-anchor="start" textLength="14.3" lengthAdjust="spacingAndGlyphs">+Q1</text><text x="966" y="592.5" fill="#10f4f4" font-size="8.5" font-weight="bold" text-anchor="start" textLength="14.3" lengthAdjust="spacingAndGlyphs">XFR</text><text x="983" y="604" fill="#f0f000" font-size="7" font-weight="bold" text-anchor="end" textLength="7.0" lengthAdjust="spacingAndGlyphs">BK</text><circle cx="984.7" cy="619.5" r="2.4" fill="none" stroke="#00e000" stroke-width="1.200"/><text x="966" y="607.5" fill="#10f4f4" font-size="8.5" font-weight="bold" text-anchor="start" textLength="14.3" lengthAdjust="spacingAndGlyphs">+Q1</text><text x="966" y="616.0" fill="#10f4f4" font-size="8.5" font-weight="bold" text-anchor="start" textLength="14.3" lengthAdjust="spacingAndGlyphs">XFR</text><text x="983" y="627.5" fill="#f0f000" font-size="7" font-weight="bold" text-anchor="end" textLength="0.0" lengthAdjust="spacingAndGlyphs"></text><path d="M1090 385V397" stroke="#00e000" stroke-width="1.3" fill="none" /><path d="M1087.5 395L1093 400.500M1093 395L1087.5 400.500" stroke="#00e000" stroke-width="1.1" fill="none" /><path d="M1082 395.500L1087 403L1090 409V420.500" stroke="#00e000" stroke-width="1.3" fill="none" /><rect x="1081.5" y="401.500" width="5.500" height="5.500" fill="#00e000" transform="rotate(-30 1084 404)"/><path d="M1090 444.500V456" stroke="#00e000" stroke-width="1.3" fill="none" /><text x="1086" y="393" fill="#f0f000" font-size="7" font-weight="bold" text-anchor="start" transform="rotate(-90 1086 393)" textLength="3.5" lengthAdjust="spacingAndGlyphs">1</text><text x="1086" y="453" fill="#f0f000" font-size="7" font-weight="bold" text-anchor="start" transform="rotate(-90 1086 453)" textLength="3.5" lengthAdjust="spacingAndGlyphs">2</text><path d="M1113.4 385V397" stroke="#00e000" stroke-width="1.3" fill="none" /><path d="M1110.9 395L1116.4 400.500M1116.4 395L1110.9 400.500" stroke="#00e000" stroke-width="1.1" fill="none" /><path d="M1105.4 395.500L1110.4 403L1113.4 409V420.500" stroke="#00e000" stroke-width="1.3" fill="none" /><rect x="1104.9" y="401.500" width="5.500" height="5.500" fill="#00e000" transform="rotate(-30 1107.4 404)"/><path d="M1113.4 444.500V456" stroke="#00e000" stroke-width="1.3" fill="none" /><text x="1109.4" y="393" fill="#f0f000" font-size="7" font-weight="bold" text-anchor="start" transform="rotate(-90 1109.4 393)" textLength="3.5" lengthAdjust="spacingAndGlyphs">3</text><text x="1109.4" y="453" fill="#f0f000" font-size="7" font-weight="bold" text-anchor="start" transform="rotate(-90 1109.4 453)" textLength="3.5" lengthAdjust="spacingAndGlyphs">4</text><path d="M1136.9 385V397" stroke="#00e000" stroke-width="1.3" fill="none" /><path d="M1134.4 395L1139.9 400.500M1139.9 395L1134.4 400.500" stroke="#00e000" stroke-width="1.1" fill="none" /><path d="M1128.9 395.500L1133.9 403L1136.9 409V420.500" stroke="#00e000" stroke-width="1.3" fill="none" /><rect x="1128.4" y="401.500" width="5.500" height="5.500" fill="#00e000" transform="rotate(-30 1130.9 404)"/><path d="M1136.9 444.500V456" stroke="#00e000" stroke-width="1.3" fill="none" /><text x="1132.9" y="393" fill="#f0f000" font-size="7" font-weight="bold" text-anchor="start" transform="rotate(-90 1132.9 393)" textLength="3.5" lengthAdjust="spacingAndGlyphs">5</text><text x="1132.9" y="453" fill="#f0f000" font-size="7" font-weight="bold" text-anchor="start" transform="rotate(-90 1132.9 453)" textLength="3.5" lengthAdjust="spacingAndGlyphs">6</text><path d="M1085 403.500H1131.9" stroke="#f0f000" stroke-width="1.2" fill="none" stroke-dasharray="4 2.500"/><rect x="1078" y="420.500" width="70.90000000000009" height="24" fill="none" stroke="#00e000" stroke-width="1.300"/><path d="M1078 432.500H1148.9M1101.7 420.500V444.500M1125.15 420.500V444.500" stroke="#00e000" stroke-width="1.3" fill="none" /><path d="M1090 420.500V423.500H1096V429.500H1090V432.500" stroke="#00e000" stroke-width="1.2" fill="none" /><path d="M1086 435l-1.500 7M1091 435.500l4 2.800l-4 2.800" stroke="#00e000" stroke-width="1.1" fill="none" /><path d="M1113.4 420.500V423.500H1119.4V429.500H1113.4V432.500" stroke="#00e000" stroke-width="1.2" fill="none" /><path d="M1109.4 435l-1.500 7M1114.4 435.500l4 2.800l-4 2.800" stroke="#00e000" stroke-width="1.1" fill="none" /><path d="M1136.9 420.500V423.500H1142.9V429.500H1136.9V432.500" stroke="#00e000" stroke-width="1.2" fill="none" /><path d="M1132.9 435l-1.500 7M1137.9 435.500l4 2.800l-4 2.800" stroke="#00e000" stroke-width="1.1" fill="none" /><text x="1061" y="390" fill="#10f4f4" font-size="8.5" font-weight="bold" text-anchor="start" textLength="14.3" lengthAdjust="spacingAndGlyphs">+Q1</text><text x="1065" y="398.5" fill="#10f4f4" font-size="8.5" font-weight="bold" text-anchor="start" textLength="9.6" lengthAdjust="spacingAndGlyphs">Q9</text><path d="M1090 456V503" stroke="#a46a30" stroke-width="2.2" fill="none" /><path d="M1090 537V783" stroke="#a46a30" stroke-width="2.2" fill="none" /><path d="M1113.4 456V503" stroke="#8c8c8c" stroke-width="2.2" fill="none" /><path d="M1113.4 537V783" stroke="#8c8c8c" stroke-width="2.2" fill="none" /><path d="M1136.9 456V503" stroke="#cfcfcf" stroke-width="2.6" fill="none" /><path d="M1136.9 537V783" stroke="#cfcfcf" stroke-width="2.6" fill="none" /><text x="1086" y="511" fill="#f0f000" font-size="7" font-weight="bold" text-anchor="start" transform="rotate(-90 1086 511)" textLength="3.5" lengthAdjust="spacingAndGlyphs">1</text><text x="1086" y="536" fill="#f0f000" font-size="7" font-weight="bold" text-anchor="start" transform="rotate(-90 1086 536)" textLength="3.5" lengthAdjust="spacingAndGlyphs">2</text><path d="M1090 503V513" stroke="#00e000" stroke-width="1.3" fill="none" /><circle cx="1089" cy="512" r="1.600" fill="none" stroke="#00e000" stroke-width="1"/><path d="M1082 512L1090 525.5V537" stroke="#00e000" stroke-width="1.3" fill="none" /><text x="1109.4" y="511" fill="#f0f000" font-size="7" font-weight="bold" text-anchor="start" transform="rotate(-90 1109.4 511)" textLength="3.5" lengthAdjust="spacingAndGlyphs">3</text><text x="1109.4" y="536" fill="#f0f000" font-size="7" font-weight="bold" text-anchor="start" transform="rotate(-90 1109.4 536)" textLength="3.5" lengthAdjust="spacingAndGlyphs">4</text><path d="M1113.4 503V513" stroke="#00e000" stroke-width="1.3" fill="none" /><circle cx="1112.4" cy="512" r="1.600" fill="none" stroke="#00e000" stroke-width="1"/><path d="M1105.4 512L1113.4 525.5V537" stroke="#00e000" stroke-width="1.3" fill="none" /><text x="1132.9" y="511" fill="#f0f000" font-size="7" font-weight="bold" text-anchor="start" transform="rotate(-90 1132.9 511)" textLength="3.5" lengthAdjust="spacingAndGlyphs">5</text><text x="1132.9" y="536" fill="#f0f000" font-size="7" font-weight="bold" text-anchor="start" transform="rotate(-90 1132.9 536)" textLength="3.5" lengthAdjust="spacingAndGlyphs">6</text><path d="M1136.9 503V513" stroke="#00e000" stroke-width="1.3" fill="none" /><circle cx="1135.9" cy="512" r="1.600" fill="none" stroke="#00e000" stroke-width="1"/><path d="M1128.9 512L1136.9 525.5V537" stroke="#00e000" stroke-width="1.3" fill="none" /><path d="M1087 520H1133.9" stroke="#f0f000" stroke-width="1.2" fill="none" stroke-dasharray="4 2.500"/><text x="1065" y="507" fill="#10f4f4" font-size="8.5" font-weight="bold" text-anchor="start" textLength="14.3" lengthAdjust="spacingAndGlyphs">+Q1</text><text x="1069" y="516" fill="#10f4f4" font-size="8.5" font-weight="bold" text-anchor="start" textLength="9.6" lengthAdjust="spacingAndGlyphs">K6</text><text x="1059" y="527" fill="#f0f000" font-size="7" font-weight="bold" text-anchor="start" textLength="17.5" lengthAdjust="spacingAndGlyphs">22/D7</text><text x="1087" y="485" fill="#f0f000" font-size="6.5" font-weight="bold" text-anchor="start" transform="rotate(-90 1087 485)" textLength="13.0" lengthAdjust="spacingAndGlyphs">4.15</text><text x="1087" y="665" fill="#f0f000" font-size="6.5" font-weight="bold" text-anchor="start" transform="rotate(-90 1087 665)" textLength="13.0" lengthAdjust="spacingAndGlyphs">4.16</text><text x="1110.4" y="485" fill="#f0f000" font-size="6.5" font-weight="bold" text-anchor="start" transform="rotate(-90 1110.4 485)" textLength="13.0" lengthAdjust="spacingAndGlyphs">4.17</text><text x="1110.4" y="665" fill="#f0f000" font-size="6.5" font-weight="bold" text-anchor="start" transform="rotate(-90 1110.4 665)" textLength="13.0" lengthAdjust="spacingAndGlyphs">4.18</text><text x="1133.9" y="485" fill="#f0f000" font-size="6.5" font-weight="bold" text-anchor="start" transform="rotate(-90 1133.9 485)" textLength="13.0" lengthAdjust="spacingAndGlyphs">4.19</text><text x="1133.9" y="665" fill="#f0f000" font-size="6.5" font-weight="bold" text-anchor="start" transform="rotate(-90 1133.9 665)" textLength="13.0" lengthAdjust="spacingAndGlyphs">4.20</text><path d="M1136.9 584.5H1301V783" stroke="#ffffff" stroke-width="4" fill="none" /><path d="M1136.9 584.5H1301V783" stroke="#8a8a8a" stroke-width="1" fill="none" stroke-dasharray="1.500 26"/><circle cx="1136.9" cy="584.5" r="2" fill="#00e000"/><path d="M1113.4 596.2H1277.6V783" stroke="#ffffff" stroke-width="4" fill="none" /><path d="M1113.4 596.2H1277.6V783" stroke="#8a8a8a" stroke-width="1" fill="none" stroke-dasharray="1.500 26"/><circle cx="1113.4" cy="596.2" r="2" fill="#00e000"/><path d="M1090 608.3H1254.2V783" stroke="#ffffff" stroke-width="4" fill="none" /><path d="M1090 608.3H1254.2V783" stroke="#8a8a8a" stroke-width="1" fill="none" stroke-dasharray="1.500 26"/><circle cx="1090" cy="608.3" r="2" fill="#00e000"/><text x="1256.5" y="675" fill="#00e000" font-size="8.5" font-weight="normal" text-anchor="start" textLength="8.5" lengthAdjust="spacingAndGlyphs">BU</text><text x="1279.5" y="675" fill="#00e000" font-size="8.5" font-weight="normal" text-anchor="start" textLength="8.5" lengthAdjust="spacingAndGlyphs">BN</text><text x="1303" y="675" fill="#00e000" font-size="8.5" font-weight="normal" text-anchor="start" textLength="8.5" lengthAdjust="spacingAndGlyphs">BK</text><path d="M1252 679.500H1390" stroke="#00e000" stroke-width="1.2" fill="none" stroke-dasharray="6 4"/><text x="1329" y="677.5" fill="#00e000" font-size="8.5" font-weight="normal" text-anchor="start" textLength="13.4" lengthAdjust="spacingAndGlyphs">W27</text><text x="1329" y="687.5" fill="#00e000" font-size="8.5" font-weight="normal" text-anchor="start" textLength="22.3" lengthAdjust="spacingAndGlyphs">4G2.5</text><text x="1329" y="696" fill="#00e000" font-size="8.5" font-weight="normal" text-anchor="start" textLength="62.5" lengthAdjust="spacingAndGlyphs">UG7OR 0.6/1 kV</text><path d="M1148.700 432.500L1201 455" stroke="#00e000" stroke-width="1.2" fill="none" /><rect x="1200.500" y="435.500" width="38" height="38" fill="#f2f2f2" stroke="#00e000" stroke-width="1.400"/><rect x="1208" y="438" width="22" height="31" rx="1" fill="#dcdcdc" stroke="#aaa" stroke-width="0.500"/><rect x="1208" y="438" width="22" height="6" fill="#c8c8c8"/><circle cx="1224" cy="455" r="5.500" fill="#222"/><path d="M1220 452l8 6" stroke="#eee" stroke-width="1.500"/><rect x="1210" y="462" width="18" height="5" fill="#b8d8b8"/><circle cx="1213" cy="441" r="1" fill="#555"/><circle cx="1219" cy="441" r="1" fill="#555"/><circle cx="1225" cy="441" r="1" fill="#555"/><path d="M1200.500 474V516" stroke="#00e000" stroke-width="1.2" fill="none" /><text x="1202" y="480.0" fill="#f0f000" font-size="6.5" font-weight="bold" text-anchor="start" textLength="29.2" lengthAdjust="spacingAndGlyphs">SNRGV2P32</text><text x="1202" y="487.1" fill="#f0f000" font-size="6.5" font-weight="bold" text-anchor="start" textLength="84.1" lengthAdjust="spacingAndGlyphs">DISJUNTOR MOTOR GV2-P32</text><text x="1202" y="494.2" fill="#f0f000" font-size="6.5" font-weight="bold" text-anchor="start" textLength="65.8" lengthAdjust="spacingAndGlyphs">SCHNEIDER ELECTRIC</text><text x="1202" y="501.3" fill="#f0f000" font-size="6.5" font-weight="bold" text-anchor="start" textLength="16.2" lengthAdjust="spacingAndGlyphs">5,4 W</text><text x="1202" y="508.4" fill="#f0f000" font-size="6.5" font-weight="bold" text-anchor="start" textLength="6.5" lengthAdjust="spacingAndGlyphs">50</text><text x="1202" y="515.5" fill="#f0f000" font-size="6.5" font-weight="bold" text-anchor="start" textLength="13.0" lengthAdjust="spacingAndGlyphs">IP20</text><path d="M669 876.800V783.500H1336V876.800H1169" stroke="#e0e000" stroke-width="1.25" fill="none" stroke-dasharray="8 4.500"/><text x="667" y="779" fill="#f0f000" font-size="6.5" font-weight="bold" text-anchor="start" textLength="9.8" lengthAdjust="spacingAndGlyphs">+E1</text><text x="696" y="779" fill="#10f4f4" font-size="7.5" font-weight="bold" text-anchor="start" textLength="12.7" lengthAdjust="spacingAndGlyphs">XM1</text><text x="1069" y="779" fill="#10f4f4" font-size="7.5" font-weight="bold" text-anchor="start" textLength="12.7" lengthAdjust="spacingAndGlyphs">XM2</text><text x="1233" y="779" fill="#10f4f4" font-size="7.5" font-weight="bold" text-anchor="start" textLength="12.7" lengthAdjust="spacingAndGlyphs">XM3</text><circle cx="715.7" cy="783.3" r="2.6" fill="none" stroke="#00e000" stroke-width="1.200"/><circle cx="739.3" cy="783.3" r="2.6" fill="none" stroke="#00e000" stroke-width="1.200"/><circle cx="762.6" cy="783.3" r="2.6" fill="none" stroke="#00e000" stroke-width="1.200"/><circle cx="1090" cy="783.3" r="2.6" fill="none" stroke="#00e000" stroke-width="1.200"/><circle cx="1113.4" cy="783.3" r="2.6" fill="none" stroke="#00e000" stroke-width="1.200"/><circle cx="1136.9" cy="783.3" r="2.6" fill="none" stroke="#00e000" stroke-width="1.200"/><circle cx="1160.3" cy="783.3" r="2.6" fill="none" stroke="#00e000" stroke-width="1.200"/><circle cx="1254.2" cy="783.3" r="2.6" fill="none" stroke="#00e000" stroke-width="1.200"/><circle cx="1277.6" cy="783.3" r="2.6" fill="none" stroke="#00e000" stroke-width="1.200"/><circle cx="1301" cy="783.3" r="2.6" fill="none" stroke="#00e000" stroke-width="1.200"/><circle cx="1324" cy="783.3" r="2.6" fill="none" stroke="#00e000" stroke-width="1.200"/><circle cx="785.7" cy="783.3" r="2.6" fill="none" stroke="#00e000" stroke-width="1.200"/><path d="M785.7 760.300V812" stroke="#f0f000" stroke-width="2.8" fill="none" /><path d="M785.7 760.300V812" stroke="#00e000" stroke-width="2.8" fill="none" stroke-dasharray="2.500 9"/><path d="M1160.3 760.300V783" stroke="#f0f000" stroke-width="2.8" fill="none" /><path d="M1160.3 760.300V783" stroke="#00e000" stroke-width="2.8" fill="none" stroke-dasharray="2.500 9"/><path d="M1324 760.300V808" stroke="#f0f000" stroke-width="2.8" fill="none" /><path d="M1324 760.300V808" stroke="#00e000" stroke-width="2.8" fill="none" stroke-dasharray="2.500 9"/><path d="M715.700 783V808" stroke="#a46a30" stroke-width="2.2" fill="none" /><path d="M739.300 783V808" stroke="#8c8c8c" stroke-width="2.2" fill="none" /><path d="M762.600 783V808" stroke="#cfcfcf" stroke-width="2.4" fill="none" /><circle cx="739.4" cy="835" r="18.3" fill="none" stroke="#00e000" stroke-width="1.300"/><path d="M715.7 808V818L726.2 822.2" stroke="#00e000" stroke-width="1.2" fill="none" /><path d="M739.3 808V816.7" stroke="#00e000" stroke-width="1.2" fill="none" /><path d="M762.6 808V818L752.6 822.2" stroke="#00e000" stroke-width="1.2" fill="none" /><path d="M785.7 808V818L757.2 830.4" stroke="#00e000" stroke-width="1.2" fill="none" /><text x="694" y="832" fill="#10f4f4" font-size="7.5" font-weight="bold" text-anchor="start" textLength="8.4" lengthAdjust="spacingAndGlyphs">M1</text><text x="711.7" y="791" fill="#f0f000" font-size="7" font-weight="bold" text-anchor="start" transform="rotate(-90 711.7 791)" textLength="3.5" lengthAdjust="spacingAndGlyphs">U</text><text x="711.7" y="814" fill="#f0f000" font-size="7" font-weight="bold" text-anchor="start" transform="rotate(-90 711.7 814)" textLength="3.5" lengthAdjust="spacingAndGlyphs">U</text><text x="735.3" y="791" fill="#f0f000" font-size="7" font-weight="bold" text-anchor="start" transform="rotate(-90 735.3 791)" textLength="3.5" lengthAdjust="spacingAndGlyphs">V</text><text x="735.3" y="814" fill="#f0f000" font-size="7" font-weight="bold" text-anchor="start" transform="rotate(-90 735.3 814)" textLength="3.5" lengthAdjust="spacingAndGlyphs">V</text><text x="758.6" y="791" fill="#f0f000" font-size="7" font-weight="bold" text-anchor="start" transform="rotate(-90 758.6 791)" textLength="3.5" lengthAdjust="spacingAndGlyphs">W</text><text x="758.6" y="814" fill="#f0f000" font-size="7" font-weight="bold" text-anchor="start" transform="rotate(-90 758.6 814)" textLength="3.5" lengthAdjust="spacingAndGlyphs">W</text><text x="781.7" y="791" fill="#f0f000" font-size="7" font-weight="bold" text-anchor="start" transform="rotate(-90 781.7 791)" textLength="7.0" lengthAdjust="spacingAndGlyphs">PE</text><text x="781.7" y="814" fill="#f0f000" font-size="7" font-weight="bold" text-anchor="start" transform="rotate(-90 781.7 814)" textLength="7.0" lengthAdjust="spacingAndGlyphs">PE</text><path d="M1090 786V808" stroke="#ffffff" stroke-width="3.6" fill="none" /><path d="M1113.4 786V808" stroke="#ffffff" stroke-width="3.6" fill="none" /><path d="M1136.9 786V808" stroke="#ffffff" stroke-width="3.6" fill="none" /><path d="M1160.3 786V808" stroke="#ffffff" stroke-width="3.6" fill="none" /><circle cx="1113.4" cy="836.5" r="17.5" fill="none" stroke="#00e000" stroke-width="1.300"/><path d="M1090 808V818L1100.8 824.2" stroke="#00e000" stroke-width="1.2" fill="none" /><path d="M1113.4 808V819.0" stroke="#00e000" stroke-width="1.2" fill="none" /><path d="M1136.9 808V818L1126.0 824.2" stroke="#00e000" stroke-width="1.2" fill="none" /><path d="M1160.3 808V818L1130.4 832.1" stroke="#00e000" stroke-width="1.2" fill="none" /><text x="1113.4" y="834.5" fill="#00e000" font-size="10" font-weight="normal" text-anchor="middle" textLength="5.0" lengthAdjust="spacingAndGlyphs">M</text><text x="1106.9" y="844.0" fill="#00e000" font-size="9" font-weight="normal" text-anchor="middle" textLength="4.5" lengthAdjust="spacingAndGlyphs">3</text><path d="M1110.4 840.5q2.500 -3 5 0t5 0" stroke="#00e000" stroke-width="1.1" fill="none" /><text x="1059" y="834" fill="#10f4f4" font-size="7.5" font-weight="bold" text-anchor="start" textLength="16.9" lengthAdjust="spacingAndGlyphs">-M10</text><text x="1093" y="795" fill="#00e000" font-size="8.5" font-weight="normal" text-anchor="start" textLength="17.8" lengthAdjust="spacingAndGlyphs">GNYE</text><text x="1116" y="795" fill="#00e000" font-size="8.5" font-weight="normal" text-anchor="start" textLength="8.9" lengthAdjust="spacingAndGlyphs">BK</text><text x="1140" y="795" fill="#00e000" font-size="8.5" font-weight="normal" text-anchor="start" textLength="8.9" lengthAdjust="spacingAndGlyphs">BN</text><text x="1163" y="795" fill="#00e000" font-size="8.5" font-weight="normal" text-anchor="start" textLength="8.9" lengthAdjust="spacingAndGlyphs">BU</text><path d="M1000 798.500H1160" stroke="#00e000" stroke-width="1.2" fill="none" stroke-dasharray="6 4"/><text x="1001" y="797" fill="#00e000" font-size="8.5" font-weight="normal" text-anchor="start" textLength="13.4" lengthAdjust="spacingAndGlyphs">W26</text><text x="1001" y="807" fill="#00e000" font-size="8.5" font-weight="normal" text-anchor="start" textLength="22.3" lengthAdjust="spacingAndGlyphs">4G2.5</text><text x="1001" y="815.5" fill="#00e000" font-size="8.5" font-weight="normal" text-anchor="start" textLength="62.5" lengthAdjust="spacingAndGlyphs">UG7OR 0.6/1 kV</text><text x="1086" y="791" fill="#f0f000" font-size="7" font-weight="bold" text-anchor="start" transform="rotate(-90 1086 791)" textLength="3.5" lengthAdjust="spacingAndGlyphs">U</text><text x="1086" y="814" fill="#f0f000" font-size="7" font-weight="bold" text-anchor="start" transform="rotate(-90 1086 814)" textLength="3.5" lengthAdjust="spacingAndGlyphs">U</text><text x="1109.4" y="791" fill="#f0f000" font-size="7" font-weight="bold" text-anchor="start" transform="rotate(-90 1109.4 791)" textLength="3.5" lengthAdjust="spacingAndGlyphs">V</text><text x="1109.4" y="814" fill="#f0f000" font-size="7" font-weight="bold" text-anchor="start" transform="rotate(-90 1109.4 814)" textLength="3.5" lengthAdjust="spacingAndGlyphs">V</text><text x="1132.9" y="791" fill="#f0f000" font-size="7" font-weight="bold" text-anchor="start" transform="rotate(-90 1132.9 791)" textLength="3.5" lengthAdjust="spacingAndGlyphs">W</text><text x="1132.9" y="814" fill="#f0f000" font-size="7" font-weight="bold" text-anchor="start" transform="rotate(-90 1132.9 814)" textLength="3.5" lengthAdjust="spacingAndGlyphs">W</text><text x="1156.3" y="791" fill="#f0f000" font-size="7" font-weight="bold" text-anchor="start" transform="rotate(-90 1156.3 791)" textLength="7.0" lengthAdjust="spacingAndGlyphs">PE</text><text x="1156.3" y="814" fill="#f0f000" font-size="7" font-weight="bold" text-anchor="start" transform="rotate(-90 1156.3 814)" textLength="7.0" lengthAdjust="spacingAndGlyphs">PE</text><path d="M1254.200 786V808" stroke="#a46a30" stroke-width="2.2" fill="none" /><path d="M1277.600 786V808" stroke="#8c8c8c" stroke-width="2.2" fill="none" /><path d="M1301 786V808" stroke="#cfcfcf" stroke-width="2.4" fill="none" /><circle cx="1277.3" cy="836.5" r="17.5" fill="none" stroke="#00e000" stroke-width="1.300"/><path d="M1254.2 808V818L1264.7 824.2" stroke="#00e000" stroke-width="1.2" fill="none" /><path d="M1277.6 808V819.0" stroke="#00e000" stroke-width="1.2" fill="none" /><path d="M1301 808V818L1289.9 824.2" stroke="#00e000" stroke-width="1.2" fill="none" /><path d="M1324 808V818L1294.3 832.1" stroke="#00e000" stroke-width="1.2" fill="none" /><text x="1277.3" y="834.5" fill="#00e000" font-size="10" font-weight="normal" text-anchor="middle" textLength="5.0" lengthAdjust="spacingAndGlyphs">M</text><text x="1270.8" y="844.0" fill="#00e000" font-size="9" font-weight="normal" text-anchor="middle" textLength="4.5" lengthAdjust="spacingAndGlyphs">3</text><path d="M1274.3 840.5q2.500 -3 5 0t5 0" stroke="#00e000" stroke-width="1.1" fill="none" /><text x="1232" y="834" fill="#10f4f4" font-size="7.5" font-weight="bold" text-anchor="start" textLength="8.4" lengthAdjust="spacingAndGlyphs">M2</text><text x="1250.2" y="791" fill="#f0f000" font-size="7" font-weight="bold" text-anchor="start" transform="rotate(-90 1250.2 791)" textLength="3.5" lengthAdjust="spacingAndGlyphs">U</text><text x="1250.2" y="814" fill="#f0f000" font-size="7" font-weight="bold" text-anchor="start" transform="rotate(-90 1250.2 814)" textLength="3.5" lengthAdjust="spacingAndGlyphs">U</text><text x="1273.6" y="791" fill="#f0f000" font-size="7" font-weight="bold" text-anchor="start" transform="rotate(-90 1273.6 791)" textLength="3.5" lengthAdjust="spacingAndGlyphs">V</text><text x="1273.6" y="814" fill="#f0f000" font-size="7" font-weight="bold" text-anchor="start" transform="rotate(-90 1273.6 814)" textLength="3.5" lengthAdjust="spacingAndGlyphs">V</text><text x="1297" y="791" fill="#f0f000" font-size="7" font-weight="bold" text-anchor="start" transform="rotate(-90 1297 791)" textLength="3.5" lengthAdjust="spacingAndGlyphs">W</text><text x="1297" y="814" fill="#f0f000" font-size="7" font-weight="bold" text-anchor="start" transform="rotate(-90 1297 814)" textLength="3.5" lengthAdjust="spacingAndGlyphs">W</text><text x="1320" y="791" fill="#f0f000" font-size="7" font-weight="bold" text-anchor="start" transform="rotate(-90 1320 791)" textLength="7.0" lengthAdjust="spacingAndGlyphs">PE</text><text x="1320" y="814" fill="#f0f000" font-size="7" font-weight="bold" text-anchor="start" transform="rotate(-90 1320 814)" textLength="7.0" lengthAdjust="spacingAndGlyphs">PE</text><text x="1219" y="863.5" fill="#f0f000" font-size="6" font-weight="bold" text-anchor="start" textLength="108.1" lengthAdjust="spacingAndGlyphs">CARREGAMENTO ROLO TRANSPORTADOR</text><text x="1395" y="849.5" fill="#f0f000" font-size="6" font-weight="bold" text-anchor="end" textLength="31.0" lengthAdjust="spacingAndGlyphs">Fio inicial:</text><text x="1405" y="849.5" fill="#f0f000" font-size="6" font-weight="bold" text-anchor="start" textLength="9.0" lengthAdjust="spacingAndGlyphs">4.1</text><text x="1395" y="857.4" fill="#f0f000" font-size="6" font-weight="bold" text-anchor="end" textLength="25.9" lengthAdjust="spacingAndGlyphs">Fio final:</text><text x="1405" y="857.4" fill="#f0f000" font-size="6" font-weight="bold" text-anchor="start" textLength="12.0" lengthAdjust="spacingAndGlyphs">4.20</text><text x="1395" y="865.3" fill="#f0f000" font-size="6" font-weight="bold" text-anchor="end" textLength="49.2" lengthAdjust="spacingAndGlyphs">Fio disponível por:</text><text x="1405" y="865.3" fill="#f0f000" font-size="6" font-weight="bold" text-anchor="start" textLength="12.0" lengthAdjust="spacingAndGlyphs">4.21</text></svg></div>
<svg style="left:0;top:0;" width="1" height="1"><text x="409" y="274" font-family="'Liberation Sans',sans-serif" font-size="15.5" font-weight="normal" font-style="normal" fill="#dcdcdc" text-anchor="start" textLength="155" lengthAdjust="spacingAndGlyphs">[−][Top][2D Wireframe]</text></svg>
<svg style="left:0px;top:0px;" width="1500" height="440" viewBox="0 0 1500 440"><circle cx="1423" cy="326" r="48.500" fill="none" stroke="#7c838e" stroke-width="12" opacity="0.55"/><rect x="1400.500" y="304.500" width="45" height="45" fill="#e4e5e8" stroke="#c4c6ca" stroke-width="1"/><rect x="1409" y="313" width="28" height="27" fill="#b9c1ce"/><path d="M1361 267.500l5.500-5.500l5.500 5.500v5.500h-4v-3.500h-3v3.500h-4z" fill="#8a9098"/><path d="M1478 381h9M1478 383.500h9l-4.500 4z" stroke="#7a8088" fill="#7a8088" stroke-width="1"/><rect x="1394.500" y="406.500" width="56" height="20" rx="5" fill="#c4c8d6" stroke="#9aa0b0" stroke-width="1"/><path d="M1434 413h10l-5 6z" fill="#d8dce8" stroke="#8a90a0" stroke-width="0.800"/></svg>
<svg style="left:0;top:0;" width="1" height="1"><text x="1423" y="331.5" font-family="'Liberation Sans',sans-serif" font-size="11.5" font-weight="bold" font-style="normal" fill="#3a4250" text-anchor="middle" textLength="20" lengthAdjust="spacingAndGlyphs">TOP</text></svg>
<span class="t" style="top:269px;font-size:18px;line-height:18px;color:#d6d6d6;font-family:'Liberation Sans',sans-serif;font-weight:bold;left:1423px;transform:translateX(-50%);">N</span>
<span class="t" style="top:371px;font-size:18px;line-height:18px;color:#d6d6d6;font-family:'Liberation Sans',sans-serif;font-weight:bold;left:1423px;transform:translateX(-50%);">S</span>
<span class="t" style="top:319px;font-size:18px;line-height:18px;color:#d6d6d6;font-family:'Liberation Sans',sans-serif;font-weight:bold;left:1372px;transform:translateX(-50%);">W</span>
<span class="t" style="top:319px;font-size:18px;line-height:18px;color:#d6d6d6;font-family:'Liberation Sans',sans-serif;font-weight:bold;left:1474px;transform:translateX(-50%);">E</span>
<svg style="left:0;top:0;" width="1" height="1"><text x="1413" y="421" font-family="'Liberation Sans',sans-serif" font-size="12.5" font-weight="normal" font-style="normal" fill="#50566a" text-anchor="middle" textLength="27" lengthAdjust="spacingAndGlyphs">WCS</text></svg>
<div style="left:730px;top:796px;width:158px;height:20px;background:rgba(106,110,116,0.85);border-radius:3px;"></div>
<div style="left:730px;top:821px;width:176px;height:20px;background:rgba(106,110,116,0.85);border-radius:3px;"></div>
<span class="t" style="top:800px;font-size:15px;line-height:15px;color:#e2e2e2;font-family:'Liberation Mono',sans-serif;left:732px;">Command: _DRAGCMD</span>
<span class="t" style="top:825px;font-size:15px;line-height:15px;color:#f0f0f0;font-family:'Liberation Mono',sans-serif;left:732px;">Regenerating model.</span>
<div style="left:651px;top:856px;width:74px;height:33px;background:#2c3340;border-radius:4px 0 0 0;"></div>
<svg style="left:651px;top:856px;" width="74" height="33" viewBox="0 0 74 33"><rect x="5.0" y="6.0" width="2" height="2" fill="#f0f0f0"/><rect x="9.5" y="6.0" width="2" height="2" fill="#f0f0f0"/><rect x="5.0" y="9.3" width="2" height="2" fill="#f0f0f0"/><rect x="9.5" y="9.3" width="2" height="2" fill="#f0f0f0"/><rect x="5.0" y="12.6" width="2" height="2" fill="#f0f0f0"/><rect x="9.5" y="12.6" width="2" height="2" fill="#f0f0f0"/><rect x="5.0" y="15.9" width="2" height="2" fill="#f0f0f0"/><rect x="9.5" y="15.9" width="2" height="2" fill="#f0f0f0"/><rect x="5.0" y="19.2" width="2" height="2" fill="#f0f0f0"/><rect x="9.5" y="19.2" width="2" height="2" fill="#f0f0f0"/><rect x="5.0" y="22.5" width="2" height="2" fill="#f0f0f0"/><rect x="9.5" y="22.5" width="2" height="2" fill="#f0f0f0"/><rect x="5.0" y="25.8" width="2" height="2" fill="#f0f0f0"/><rect x="9.5" y="25.8" width="2" height="2" fill="#f0f0f0"/><path d="M20 11l9 9M29 11l-9 9" stroke="#e8e8e8" stroke-width="2"/><path d="M47 26l9-10a4.500 4.500 0 0 1 5.500-6l-3 3l1 2.500l2.500 1l3-3a4.500 4.500 0 0 1 -6 5.500l-9.500 9.500z" fill="#d8d8d8"/></svg>
<div style="left:723px;top:845px;width:443px;height:44px;background:#ffffff;border-radius:2px;"></div>
<svg style="left:727px;top:848px;" width="44" height="18" viewBox="0 0 44 18"><rect x="0.500" y="1.500" width="19" height="14" fill="#f4f4f4" stroke="#888"/><rect x="0.500" y="1.500" width="19" height="3" fill="#666"/><path d="M3 8l3 2l-3 2M8 12.500h5" stroke="#888" fill="none"/><path d="M23 6h9l-4.500 5z" fill="#555"/></svg>
<span class="t" style="top:852px;font-size:15px;line-height:15px;color:#111;font-family:'Liberation Mono',sans-serif;font-weight:bold;left:767px;">DRAGCMD</span>
<span class="t" style="top:872px;font-size:15px;line-height:15px;color:#111;font-family:'Liberation Mono',sans-serif;left:727px;">Pressione a tecla Enter para continuar...</span>
<svg style="left:1148px;top:862px;" width="14" height="10" viewBox="0 0 14 10"><path d="M2 8l4.500-5l4.500 5z" fill="#666"/></svg>
<div style="left:1px;top:256px;width:400px;height:32px;background:#2c3340;border-radius:6px 6px 0 0;"></div>
<div style="left:1px;top:284px;width:400px;height:700px;background:#3b4453;border-radius:0 0 6px 6px;"></div>
<svg style="left:8px;top:262px;" width="6" height="14" viewBox="0 0 6 14"><rect x="0" y="0" width="1" height="1" fill="#aab"/><rect x="2" y="0" width="1" height="1" fill="#aab"/><rect x="0" y="2" width="1" height="1" fill="#aab"/><rect x="2" y="2" width="1" height="1" fill="#aab"/><rect x="0" y="4" width="1" height="1" fill="#aab"/><rect x="2" y="4" width="1" height="1" fill="#aab"/><rect x="0" y="6" width="1" height="1" fill="#aab"/><rect x="2" y="6" width="1" height="1" fill="#aab"/><rect x="0" y="8" width="1" height="1" fill="#aab"/><rect x="2" y="8" width="1" height="1" fill="#aab"/><rect x="0" y="10" width="1" height="1" fill="#aab"/><rect x="2" y="10" width="1" height="1" fill="#aab"/></svg>
<svg style="left:0;top:0;" width="1" height="1"><text x="19" y="274" font-family="'Liberation Sans',sans-serif" font-size="15" font-weight="normal" font-style="normal" fill="#e8e8e8" text-anchor="start" textLength="117" lengthAdjust="spacingAndGlyphs">LISTA DE FOLHAS</text></svg>
<div style="left:4px;top:289px;width:393px;height:688px;background:#ffffff;"></div>
<div style="left:4px;top:289px;width:393px;height:27px;background:#f0f0f0;"></div>
<div style="left:4px;top:289px;width:111px;height:28px;background:#ffffff;"></div>
<div style="left:114px;top:291px;width:165px;height:25px;background:#f0f0f0;border:1px solid #d9d9d9;box-sizing:border-box;"></div>
<div style="left:4px;top:316px;width:393px;height:1px;background:#e4e4e4;"></div>
<span class="t" style="top:295px;font-size:15px;line-height:15px;color:#111;font-family:'Liberation Sans',sans-serif;left:12px;">Lista de folhas</span>
<span class="t" style="top:297px;font-size:15px;line-height:15px;color:#111;font-family:'Liberation Sans',sans-serif;left:119px;">Biblioteca macroblocos</span>
<div style="left:8px;top:320px;width:145px;height:28px;background:#f0f0f0;"></div>
<div style="left:164px;top:320px;width:29px;height:28px;background:#f0f0f0;"></div>
<div style="left:204px;top:320px;width:153px;height:28px;background:#f0f0f0;"></div>
<div style="left:155px;top:327px;width:1px;height:20px;background:#a0a0a0;"></div>
<div style="left:195px;top:327px;width:1px;height:20px;background:#a0a0a0;"></div>
<svg style="left:0px;top:0px;" width="400" height="360" viewBox="0 0 400 360"><defs><linearGradient id="shg2" x1="0" y1="0" x2="1" y2="1"><stop offset="0" stop-color="#c4cfd8"/><stop offset="0.6" stop-color="#e9eef2"/><stop offset="1" stop-color="#f6f8fa"/></linearGradient></defs><rect x="12.5" y="327.5" width="18" height="13" rx="1" fill="url(#shg2)" stroke="#4a7fcc" stroke-width="1"/><rect x="13" y="336.5" width="17" height="4" fill="#4a7fcc"/><rect x="14.0" y="337.7" width="3.8" height="1.600" fill="#eef3f8"/><rect x="19.0" y="337.7" width="3.8" height="1.600" fill="#eef3f8"/><rect x="24.0" y="337.7" width="3.8" height="1.600" fill="#eef3f8"/><path d="M41 334h9M46 329v10" stroke="#3f78c0" stroke-width="1.2"/><path d="M47 334l6-4v8z" fill="#c01818"/><rect x="53" y="326.500" width="7" height="4" fill="#dfe8f1" stroke="#5f8fcb"/><rect x="53" y="332" width="7" height="4" fill="#dfe8f1" stroke="#5f8fcb"/><rect x="53" y="338" width="7" height="4" fill="#dfe8f1" stroke="#5f8fcb"/><path d="M42 329l3 3M42 339l3-3" stroke="#3f78c0"/><rect x="70.5" y="326.5" width="18" height="13" rx="1" fill="url(#shg2)" stroke="#4a7fcc" stroke-width="1"/><rect x="71" y="335.5" width="17" height="4" fill="#4a7fcc"/><rect x="72.0" y="336.7" width="3.8" height="1.600" fill="#eef3f8"/><rect x="77.0" y="336.7" width="3.8" height="1.600" fill="#eef3f8"/><rect x="82.0" y="336.7" width="3.8" height="1.600" fill="#eef3f8"/><path d="M72 329l8 6" stroke="#a87a30" stroke-width="2"/><circle cx="81" cy="337" r="4" fill="#e8f0f8" stroke="#333" stroke-width="1"/><path d="M80 335.200v3.600l2.800-1.800z" fill="#333"/><rect x="99.5" y="326.5" width="17" height="12" rx="1" fill="url(#shg2)" stroke="#4a7fcc" stroke-width="1"/><rect x="100" y="334.5" width="16" height="4" fill="#4a7fcc"/><rect x="101.0" y="335.7" width="3.5" height="1.600" fill="#eef3f8"/><rect x="105.7" y="335.7" width="3.5" height="1.600" fill="#eef3f8"/><rect x="110.3" y="335.7" width="3.5" height="1.600" fill="#eef3f8"/><rect x="101.5" y="329.5" width="17" height="12" rx="1" fill="url(#shg2)" stroke="#4a7fcc" stroke-width="1"/><rect x="102" y="337.5" width="16" height="4" fill="#4a7fcc"/><rect x="103.0" y="338.7" width="3.5" height="1.600" fill="#eef3f8"/><rect x="107.7" y="338.7" width="3.5" height="1.600" fill="#eef3f8"/><rect x="112.3" y="338.7" width="3.5" height="1.600" fill="#eef3f8"/><rect x="128.5" y="327.5" width="18" height="13" rx="1" fill="url(#shg2)" stroke="#4a7fcc" stroke-width="1"/><rect x="129" y="336.5" width="17" height="4" fill="#4a7fcc"/><rect x="130.0" y="337.7" width="3.8" height="1.600" fill="#eef3f8"/><rect x="135.0" y="337.7" width="3.8" height="1.600" fill="#eef3f8"/><rect x="140.0" y="337.7" width="3.8" height="1.600" fill="#eef3f8"/><path d="M133 338l9-12l3 2l-9 12z" fill="#e8b83a" stroke="#7a5a10" stroke-width="0.6"/><path d="M131 342l2-4l3 2z" fill="#e05050"/><path d="M140 327l3-3l3 2l-3 3z" fill="#4a7ad0"/><path d="M168 332l8-6l12 3l-6 7z" fill="#e8e8e8" stroke="#555" stroke-width="0.8"/><path d="M168 332v6l14 5v-7z" fill="#c8c8c8" stroke="#555" stroke-width="0.8"/><path d="M182 336v7l6-7v-7z" fill="#aaa" stroke="#555" stroke-width="0.8"/><rect x="176" y="334" width="10" height="8" fill="#dfe8f1" stroke="#5f8fcb"/><path d="M174 328l5-4l6 1.500" stroke="#fff" stroke-width="2"/><rect x="171" y="331" width="2" height="2" fill="#e02020"/><rect x="174" y="332" width="2" height="2" fill="#20a020"/><rect x="211.5" y="326.5" width="18" height="14" rx="1" fill="url(#shg2)" stroke="#4a7fcc" stroke-width="1"/><rect x="212" y="336.5" width="17" height="4" fill="#4a7fcc"/><rect x="213.0" y="337.7" width="3.8" height="1.600" fill="#eef3f8"/><rect x="218.0" y="337.7" width="3.8" height="1.600" fill="#eef3f8"/><rect x="223.0" y="337.7" width="3.8" height="1.600" fill="#eef3f8"/><path d="M217 336v-9a3 3 0 0 1 6 0v11a2.200 2.200 0 0 1 -4.400 0v-8" fill="none" stroke="#222" stroke-width="1.600"/><path d="M241 332h8l-4 4.500z" fill="#111"/><rect x="259.5" y="325.5" width="14" height="10" rx="1" fill="url(#shg2)" stroke="#4a7fcc" stroke-width="1"/><rect x="260" y="331.5" width="13" height="4" fill="#4a7fcc"/><rect x="261.0" y="332.7" width="2.5" height="1.600" fill="#eef3f8"/><rect x="264.7" y="332.7" width="2.5" height="1.600" fill="#eef3f8"/><rect x="268.3" y="332.7" width="2.5" height="1.600" fill="#eef3f8"/><rect x="262.5" y="328.5" width="14" height="10" rx="1" fill="url(#shg2)" stroke="#4a7fcc" stroke-width="1"/><rect x="263" y="334.5" width="13" height="4" fill="#4a7fcc"/><rect x="264.0" y="335.7" width="2.5" height="1.600" fill="#eef3f8"/><rect x="267.7" y="335.7" width="2.5" height="1.600" fill="#eef3f8"/><rect x="271.3" y="335.7" width="2.5" height="1.600" fill="#eef3f8"/><rect x="266.500" y="331.500" width="11" height="12" fill="#f4f4f4" stroke="#888"/><path d="M268 335h8M268 338h8M268 341h8" stroke="#999"/><path d="M289 332h8l-4 4.500z" fill="#111"/><rect x="304" y="325" width="4" height="9" fill="#109040"/><rect x="308" y="325" width="4" height="9" fill="#f4f4f4"/><rect x="312" y="325" width="4" height="9" fill="#d02020"/><rect x="310" y="332" width="13" height="9" fill="#2840a0"/><path d="M310 332l13 9M323 332l-13 9M316.500 332v9M310 336.500h13" stroke="#e04040" stroke-width="1.400"/><path d="M324 337v6h-6z" fill="#111"/><rect x="333.500" y="328.500" width="14" height="10" rx="1" fill="#e02020" stroke="#901010"/><rect x="336" y="331" width="9" height="5" fill="#fff"/><rect x="348" y="325" width="1.500" height="18" fill="#111"/><path d="M349 325h4M349 343h4" stroke="#111"/><rect x="350.500" y="328" width="2.500" height="3" fill="#fff" stroke="#111" stroke-width="0.6"/><rect x="350.500" y="333" width="2.500" height="3" fill="#fff" stroke="#111" stroke-width="0.6"/><rect x="350.500" y="338" width="2.500" height="3" fill="#fff" stroke="#111" stroke-width="0.6"/></svg>
<div style="left:9px;top:349px;width:384px;height:624px;background:#ffffff;border:1px solid #555c66;border-top:2px solid #4a5260;border-bottom-color:#fff;box-sizing:border-box;"></div>
<div style="left:10px;top:350px;width:359px;height:27px;background:#ffffff;"></div>
<div style="left:134px;top:351px;width:1px;height:25px;background:#e0e0e0;"></div>
<div style="left:367px;top:351px;width:1px;height:25px;background:#e0e0e0;"></div>
<span class="t" style="top:357px;font-size:15px;line-height:15px;color:#111;font-family:'Liberation Sans',sans-serif;left:16px;">Nível</span>
<span class="t" style="top:357px;font-size:15px;line-height:15px;color:#111;font-family:'Liberation Sans',sans-serif;left:141px;">Título</span>
<div style="left:10px;top:377px;width:359px;height:596px;background:#3b4453;"></div>
<div style="left:370px;top:350px;width:21px;height:622px;background:#f0f0f0;"></div>
<div style="left:371px;top:372px;width:19px;height:120px;background:#cdcdcd;"></div>
<svg style="left:370px;top:350px;" width="21" height="622" viewBox="0 0 21 622"><path d="M6 14l4.500-4.500l4.500 4.500" stroke="#555" stroke-width="1.600" fill="none"/><path d="M6 609l4.500 4.500l4.500-4.500" stroke="#555" stroke-width="1.600" fill="none"/></svg>
<div style="left:371px;top:953px;width:19px;height:19px;background:#f0f0f0;border:1px solid #c8c8c8;box-sizing:border-box;"></div>
<svg style="left:370px;top:953px;" width="21" height="19" viewBox="0 0 21 19"><path d="M6 7l4.500 4.500l4.500-4.500" stroke="#444" stroke-width="1.600" fill="none"/></svg>
<div style="left:10px;top:469px;width:358px;height:23px;background:#a9c9ef;border:1px dotted #30425e;box-sizing:border-box;"></div>
<svg style="left:0px;top:0px;" width="400" height="980" viewBox="0 0 400 980"><defs><linearGradient id="shg" x1="0" y1="0" x2="1" y2="1"><stop offset="0" stop-color="#c4cfd8"/><stop offset="0.6" stop-color="#e9eef2"/><stop offset="1" stop-color="#f6f8fa"/></linearGradient></defs><path d="M16 393l8-8v8z" fill="#8a92a0" stroke="#1a1f28" stroke-width="0.6"/><rect x="30" y="381" width="16" height="14" fill="#1888d8"/><path d="M30 388h16M36 381v14" stroke="#e8f4ff" stroke-width="1.200"/><rect x="34" y="386" width="4" height="4" fill="#fff"/><path d="M41 384h3M41 392h3" stroke="#e8f4ff"/><rect x="46.5" y="404.0" width="16" height="14" rx="1" fill="url(#shg)" stroke="#4a7fcc" stroke-width="1"/><rect x="47" y="413.0" width="15" height="4.500" fill="#4a7fcc"/><rect x="48" y="414.5" width="3" height="1.600" fill="#eef3f8"/><rect x="52.5" y="414.5" width="4" height="1.600" fill="#eef3f8"/><rect x="58" y="414.5" width="3" height="1.600" fill="#eef3f8"/><rect x="46.5" y="427.0" width="16" height="14" rx="1" fill="url(#shg)" stroke="#4a7fcc" stroke-width="1"/><rect x="47" y="436.0" width="15" height="4.500" fill="#4a7fcc"/><rect x="48" y="437.5" width="3" height="1.600" fill="#eef3f8"/><rect x="52.5" y="437.5" width="4" height="1.600" fill="#eef3f8"/><rect x="58" y="437.5" width="3" height="1.600" fill="#eef3f8"/><rect x="46.5" y="450.0" width="16" height="14" rx="1" fill="url(#shg)" stroke="#4a7fcc" stroke-width="1"/><rect x="47" y="459.0" width="15" height="4.500" fill="#4a7fcc"/><rect x="48" y="460.5" width="3" height="1.600" fill="#eef3f8"/><rect x="52.5" y="460.5" width="4" height="1.600" fill="#eef3f8"/><rect x="58" y="460.5" width="3" height="1.600" fill="#eef3f8"/><path d="M57 457.5h6v9l-3-2.500l-3 2.500z" fill="#f0b428" stroke="#a87010" stroke-width="0.7"/><rect x="46.5" y="473.0" width="16" height="14" rx="1" fill="url(#shg)" stroke="#4a7fcc" stroke-width="1"/><rect x="47" y="482.0" width="15" height="4.500" fill="#4a7fcc"/><rect x="48" y="483.5" width="3" height="1.600" fill="#eef3f8"/><rect x="52.5" y="483.5" width="4" height="1.600" fill="#eef3f8"/><rect x="58" y="483.5" width="3" height="1.600" fill="#eef3f8"/><rect x="46.5" y="496.0" width="16" height="14" rx="1" fill="url(#shg)" stroke="#4a7fcc" stroke-width="1"/><rect x="47" y="505.0" width="15" height="4.500" fill="#4a7fcc"/><rect x="48" y="506.5" width="3" height="1.600" fill="#eef3f8"/><rect x="52.5" y="506.5" width="4" height="1.600" fill="#eef3f8"/><rect x="58" y="506.5" width="3" height="1.600" fill="#eef3f8"/><rect x="46.5" y="519.0" width="16" height="14" rx="1" fill="url(#shg)" stroke="#4a7fcc" stroke-width="1"/><rect x="47" y="528.0" width="15" height="4.500" fill="#4a7fcc"/><rect x="48" y="529.5" width="3" height="1.600" fill="#eef3f8"/><rect x="52.5" y="529.5" width="4" height="1.600" fill="#eef3f8"/><rect x="58" y="529.5" width="3" height="1.600" fill="#eef3f8"/><rect x="46.5" y="542.0" width="16" height="14" rx="1" fill="url(#shg)" stroke="#4a7fcc" stroke-width="1"/><rect x="47" y="551.0" width="15" height="4.500" fill="#4a7fcc"/><rect x="48" y="552.5" width="3" height="1.600" fill="#eef3f8"/><rect x="52.5" y="552.5" width="4" height="1.600" fill="#eef3f8"/><rect x="58" y="552.5" width="3" height="1.600" fill="#eef3f8"/><rect x="46.5" y="565.0" width="16" height="14" rx="1" fill="url(#shg)" stroke="#4a7fcc" stroke-width="1"/><rect x="47" y="574.0" width="15" height="4.500" fill="#4a7fcc"/><rect x="48" y="575.5" width="3" height="1.600" fill="#eef3f8"/><rect x="52.5" y="575.5" width="4" height="1.600" fill="#eef3f8"/><rect x="58" y="575.5" width="3" height="1.600" fill="#eef3f8"/><path d="M57 572.5h6v9l-3-2.500l-3 2.500z" fill="#f0b428" stroke="#a87010" stroke-width="0.7"/><rect x="46.5" y="588.0" width="16" height="14" rx="1" fill="url(#shg)" stroke="#4a7fcc" stroke-width="1"/><rect x="47" y="597.0" width="15" height="4.500" fill="#4a7fcc"/><rect x="48" y="598.5" width="3" height="1.600" fill="#eef3f8"/><rect x="52.5" y="598.5" width="4" height="1.600" fill="#eef3f8"/><rect x="58" y="598.5" width="3" height="1.600" fill="#eef3f8"/><rect x="46.5" y="611.0" width="16" height="14" rx="1" fill="url(#shg)" stroke="#4a7fcc" stroke-width="1"/><rect x="47" y="620.0" width="15" height="4.500" fill="#4a7fcc"/><rect x="48" y="621.5" width="3" height="1.600" fill="#eef3f8"/><rect x="52.5" y="621.5" width="4" height="1.600" fill="#eef3f8"/><rect x="58" y="621.5" width="3" height="1.600" fill="#eef3f8"/><rect x="46.5" y="634.0" width="16" height="14" rx="1" fill="url(#shg)" stroke="#4a7fcc" stroke-width="1"/><rect x="47" y="643.0" width="15" height="4.500" fill="#4a7fcc"/><rect x="48" y="644.5" width="3" height="1.600" fill="#eef3f8"/><rect x="52.5" y="644.5" width="4" height="1.600" fill="#eef3f8"/><rect x="58" y="644.5" width="3" height="1.600" fill="#eef3f8"/><rect x="46.5" y="657.0" width="16" height="14" rx="1" fill="url(#shg)" stroke="#4a7fcc" stroke-width="1"/><rect x="47" y="666.0" width="15" height="4.500" fill="#4a7fcc"/><rect x="48" y="667.5" width="3" height="1.600" fill="#eef3f8"/><rect x="52.5" y="667.5" width="4" height="1.600" fill="#eef3f8"/><rect x="58" y="667.5" width="3" height="1.600" fill="#eef3f8"/><rect x="46.5" y="680.0" width="16" height="14" rx="1" fill="url(#shg)" stroke="#4a7fcc" stroke-width="1"/><rect x="47" y="689.0" width="15" height="4.500" fill="#4a7fcc"/><rect x="48" y="690.5" width="3" height="1.600" fill="#eef3f8"/><rect x="52.5" y="690.5" width="4" height="1.600" fill="#eef3f8"/><rect x="58" y="690.5" width="3" height="1.600" fill="#eef3f8"/><rect x="46.5" y="703.0" width="16" height="14" rx="1" fill="url(#shg)" stroke="#4a7fcc" stroke-width="1"/><rect x="47" y="712.0" width="15" height="4.500" fill="#4a7fcc"/><rect x="48" y="713.5" width="3" height="1.600" fill="#eef3f8"/><rect x="52.5" y="713.5" width="4" height="1.600" fill="#eef3f8"/><rect x="58" y="713.5" width="3" height="1.600" fill="#eef3f8"/><rect x="46.5" y="726.0" width="16" height="14" rx="1" fill="url(#shg)" stroke="#4a7fcc" stroke-width="1"/><rect x="47" y="735.0" width="15" height="4.500" fill="#4a7fcc"/><rect x="48" y="736.5" width="3" height="1.600" fill="#eef3f8"/><rect x="52.5" y="736.5" width="4" height="1.600" fill="#eef3f8"/><rect x="58" y="736.5" width="3" height="1.600" fill="#eef3f8"/><rect x="46.5" y="749.0" width="16" height="14" rx="1" fill="url(#shg)" stroke="#4a7fcc" stroke-width="1"/><rect x="47" y="758.0" width="15" height="4.500" fill="#4a7fcc"/><rect x="48" y="759.5" width="3" height="1.600" fill="#eef3f8"/><rect x="52.5" y="759.5" width="4" height="1.600" fill="#eef3f8"/><rect x="58" y="759.5" width="3" height="1.600" fill="#eef3f8"/><rect x="46.5" y="772.0" width="16" height="14" rx="1" fill="url(#shg)" stroke="#4a7fcc" stroke-width="1"/><rect x="47" y="781.0" width="15" height="4.500" fill="#4a7fcc"/><rect x="48" y="782.5" width="3" height="1.600" fill="#eef3f8"/><rect x="52.5" y="782.5" width="4" height="1.600" fill="#eef3f8"/><rect x="58" y="782.5" width="3" height="1.600" fill="#eef3f8"/><rect x="46.5" y="795.0" width="16" height="14" rx="1" fill="url(#shg)" stroke="#4a7fcc" stroke-width="1"/><rect x="47" y="804.0" width="15" height="4.500" fill="#4a7fcc"/><rect x="48" y="805.5" width="3" height="1.600" fill="#eef3f8"/><rect x="52.5" y="805.5" width="4" height="1.600" fill="#eef3f8"/><rect x="58" y="805.5" width="3" height="1.600" fill="#eef3f8"/><rect x="46.5" y="818.0" width="16" height="14" rx="1" fill="url(#shg)" stroke="#4a7fcc" stroke-width="1"/><rect x="47" y="827.0" width="15" height="4.500" fill="#4a7fcc"/><rect x="48" y="828.5" width="3" height="1.600" fill="#eef3f8"/><rect x="52.5" y="828.5" width="4" height="1.600" fill="#eef3f8"/><rect x="58" y="828.5" width="3" height="1.600" fill="#eef3f8"/><rect x="46.5" y="841.0" width="16" height="14" rx="1" fill="url(#shg)" stroke="#4a7fcc" stroke-width="1"/><rect x="47" y="850.0" width="15" height="4.500" fill="#4a7fcc"/><rect x="48" y="851.5" width="3" height="1.600" fill="#eef3f8"/><rect x="52.5" y="851.5" width="4" height="1.600" fill="#eef3f8"/><rect x="58" y="851.5" width="3" height="1.600" fill="#eef3f8"/><rect x="46.5" y="864.0" width="16" height="14" rx="1" fill="url(#shg)" stroke="#4a7fcc" stroke-width="1"/><rect x="47" y="873.0" width="15" height="4.500" fill="#4a7fcc"/><rect x="48" y="874.5" width="3" height="1.600" fill="#eef3f8"/><rect x="52.5" y="874.5" width="4" height="1.600" fill="#eef3f8"/><rect x="58" y="874.5" width="3" height="1.600" fill="#eef3f8"/><rect x="46.5" y="887.0" width="16" height="14" rx="1" fill="url(#shg)" stroke="#4a7fcc" stroke-width="1"/><rect x="47" y="896.0" width="15" height="4.500" fill="#4a7fcc"/><rect x="48" y="897.5" width="3" height="1.600" fill="#eef3f8"/><rect x="52.5" y="897.5" width="4" height="1.600" fill="#eef3f8"/><rect x="58" y="897.5" width="3" height="1.600" fill="#eef3f8"/><rect x="46.5" y="910.0" width="16" height="14" rx="1" fill="url(#shg)" stroke="#4a7fcc" stroke-width="1"/><rect x="47" y="919.0" width="15" height="4.500" fill="#4a7fcc"/><rect x="48" y="920.5" width="3" height="1.600" fill="#eef3f8"/><rect x="52.5" y="920.5" width="4" height="1.600" fill="#eef3f8"/><rect x="58" y="920.5" width="3" height="1.600" fill="#eef3f8"/><rect x="46.5" y="933.0" width="16" height="14" rx="1" fill="url(#shg)" stroke="#4a7fcc" stroke-width="1"/><rect x="47" y="942.0" width="15" height="4.500" fill="#4a7fcc"/><rect x="48" y="943.5" width="3" height="1.600" fill="#eef3f8"/><rect x="52.5" y="943.5" width="4" height="1.600" fill="#eef3f8"/><rect x="58" y="943.5" width="3" height="1.600" fill="#eef3f8"/><path d="M57 940.5h6v9l-3-2.500l-3 2.500z" fill="#f0b428" stroke="#a87010" stroke-width="0.7"/><rect x="46.5" y="956.0" width="16" height="14" rx="1" fill="url(#shg)" stroke="#4a7fcc" stroke-width="1"/><rect x="47" y="965.0" width="15" height="4.500" fill="#4a7fcc"/><rect x="48" y="966.5" width="3" height="1.600" fill="#eef3f8"/><rect x="52.5" y="966.5" width="4" height="1.600" fill="#eef3f8"/><rect x="58" y="966.5" width="3" height="1.600" fill="#eef3f8"/></svg>
<span class="t" style="top:381px;font-size:15px;line-height:15px;color:#f4f4f4;font-family:'Liberation Sans',sans-serif;left:54px;">EG002</span>
<span class="t" style="top:404px;font-size:15px;line-height:15px;color:#f4f4f4;font-family:'Liberation Sans',sans-serif;left:70px;">1</span>
<span class="t" style="top:404px;font-size:15px;line-height:15px;color:#f4f4f4;font-family:'Liberation Sans',sans-serif;left:139px;">Diagrama elétrico</span>
<span class="t" style="top:427px;font-size:15px;line-height:15px;color:#f4f4f4;font-family:'Liberation Sans',sans-serif;left:70px;">2</span>
<span class="t" style="top:427px;font-size:15px;line-height:15px;color:#f4f4f4;font-family:'Liberation Sans',sans-serif;left:139px;">Esquema de locais</span>
<span class="t" style="top:450px;font-size:15px;line-height:15px;color:#f4f4f4;font-family:'Liberation Sans',sans-serif;left:70px;">3</span>
<span class="t" style="top:450px;font-size:15px;line-height:15px;color:#f4f4f4;font-family:'Liberation Sans',sans-serif;left:139px;">Fonte de alimentação</span>
<span class="t" style="top:473px;font-size:15px;line-height:15px;color:#111;font-family:'Liberation Sans',sans-serif;left:70px;">4</span>
<span class="t" style="top:473px;font-size:15px;line-height:15px;color:#111;font-family:'Liberation Sans',sans-serif;left:139px;">Motores</span>
<span class="t" style="top:496px;font-size:15px;line-height:15px;color:#f4f4f4;font-family:'Liberation Sans',sans-serif;left:70px;">5</span>
<span class="t" style="top:519px;font-size:15px;line-height:15px;color:#f4f4f4;font-family:'Liberation Sans',sans-serif;left:70px;">6</span>
<span class="t" style="top:542px;font-size:15px;line-height:15px;color:#f4f4f4;font-family:'Liberation Sans',sans-serif;left:70px;">7</span>
<span class="t" style="top:565px;font-size:15px;line-height:15px;color:#f4f4f4;font-family:'Liberation Sans',sans-serif;left:70px;">8</span>
<span class="t" style="top:588px;font-size:15px;line-height:15px;color:#f4f4f4;font-family:'Liberation Sans',sans-serif;left:70px;">9</span>
<span class="t" style="top:611px;font-size:15px;line-height:15px;color:#f4f4f4;font-family:'Liberation Sans',sans-serif;left:70px;">10</span>
<span class="t" style="top:634px;font-size:15px;line-height:15px;color:#f4f4f4;font-family:'Liberation Sans',sans-serif;left:70px;">11</span>
<span class="t" style="top:657px;font-size:15px;line-height:15px;color:#f4f4f4;font-family:'Liberation Sans',sans-serif;left:70px;">12</span>
<span class="t" style="top:680px;font-size:15px;line-height:15px;color:#f4f4f4;font-family:'Liberation Sans',sans-serif;left:70px;">13</span>
<span class="t" style="top:703px;font-size:15px;line-height:15px;color:#f4f4f4;font-family:'Liberation Sans',sans-serif;left:70px;">14</span>
<span class="t" style="top:726px;font-size:15px;line-height:15px;color:#f4f4f4;font-family:'Liberation Sans',sans-serif;left:70px;">15</span>
<span class="t" style="top:749px;font-size:15px;line-height:15px;color:#f4f4f4;font-family:'Liberation Sans',sans-serif;left:70px;">16</span>
<span class="t" style="top:772px;font-size:15px;line-height:15px;color:#f4f4f4;font-family:'Liberation Sans',sans-serif;left:70px;">17</span>
<span class="t" style="top:795px;font-size:15px;line-height:15px;color:#f4f4f4;font-family:'Liberation Sans',sans-serif;left:70px;">18</span>
<span class="t" style="top:818px;font-size:15px;line-height:15px;color:#f4f4f4;font-family:'Liberation Sans',sans-serif;left:70px;">19</span>
<span class="t" style="top:841px;font-size:15px;line-height:15px;color:#f4f4f4;font-family:'Liberation Sans',sans-serif;left:70px;">20</span>
<span class="t" style="top:864px;font-size:15px;line-height:15px;color:#f4f4f4;font-family:'Liberation Sans',sans-serif;left:70px;">21</span>
<span class="t" style="top:887px;font-size:15px;line-height:15px;color:#f4f4f4;font-family:'Liberation Sans',sans-serif;left:70px;">22</span>
<span class="t" style="top:910px;font-size:15px;line-height:15px;color:#f4f4f4;font-family:'Liberation Sans',sans-serif;left:70px;">23</span>
<span class="t" style="top:933px;font-size:15px;line-height:15px;color:#f4f4f4;font-family:'Liberation Sans',sans-serif;left:70px;">24</span>
<span class="t" style="top:956px;font-size:15px;line-height:15px;color:#f4f4f4;font-family:'Liberation Sans',sans-serif;left:70px;">25</span>
<span class="t" style="top:956px;font-size:15px;line-height:15px;color:#f4f4f4;font-family:'Liberation Sans',sans-serif;left:139px;">Saídas 2</span>
<div style="left:407px;top:893px;width:19px;height:95px;background:#2c3340;border-radius:0 0 5px 5px;"></div>
<div style="left:431px;top:901px;width:1063px;height:84px;background:#ffffff;"></div>
<div style="left:431px;top:901px;width:1063px;height:22px;background:#f0f0f0;"></div>
<div style="left:431px;top:922px;width:1063px;height:1px;background:#dcdcdc;"></div>
<div style="left:1491px;top:924px;width:1px;height:59px;background:#dcdcdc;"></div>
<div style="left:431px;top:983px;width:1061px;height:1px;background:#dcdcdc;"></div>
<div style="left:572px;top:901px;width:1px;height:21px;background:#dcdcdc;"></div>
<div style="left:653px;top:901px;width:1px;height:21px;background:#dcdcdc;"></div>
<div style="left:742px;top:901px;width:1px;height:21px;background:#dcdcdc;"></div>
<div style="left:824px;top:901px;width:1px;height:21px;background:#dcdcdc;"></div>
<div style="left:919px;top:901px;width:1px;height:21px;background:#dcdcdc;"></div>
<div style="left:988px;top:901px;width:1px;height:21px;background:#dcdcdc;"></div>
<div style="left:1077px;top:901px;width:1px;height:21px;background:#dcdcdc;"></div>
<svg style="left:0;top:0;" width="1" height="1"><text x="567" y="917" font-family="'Liberation Sans',sans-serif" font-size="11.5" font-weight="normal" font-style="normal" fill="#111" text-anchor="end" textLength="23" lengthAdjust="spacingAndGlyphs">nhas</text></svg>
<svg style="left:0;top:0;" width="1" height="1"><text x="605" y="917" font-family="'Liberation Sans',sans-serif" font-size="11.5" font-weight="normal" font-style="normal" fill="#111" text-anchor="start" textLength="42.5" lengthAdjust="spacingAndGlyphs">Símbolos</text></svg>
<svg style="left:0;top:0;" width="1" height="1"><text x="686" y="917" font-family="'Liberation Sans',sans-serif" font-size="11.5" font-weight="normal" font-style="normal" fill="#111" text-anchor="start" textLength="50.7" lengthAdjust="spacingAndGlyphs">Diagramas</text></svg>
<svg style="left:0;top:0;" width="1" height="1"><text x="775" y="917" font-family="'Liberation Sans',sans-serif" font-size="11.5" font-weight="normal" font-style="normal" fill="#111" text-anchor="start" textLength="43.8" lengthAdjust="spacingAndGlyphs">Arquivos</text></svg>
<svg style="left:0;top:0;" width="1" height="1"><text x="857" y="917" font-family="'Liberation Sans',sans-serif" font-size="11.5" font-weight="normal" font-style="normal" fill="#111" text-anchor="start" textLength="57" lengthAdjust="spacingAndGlyphs">Topográfico</text></svg>
<svg style="left:0;top:0;" width="1" height="1"><text x="952" y="917" font-family="'Liberation Sans',sans-serif" font-size="11.5" font-weight="normal" font-style="normal" fill="#111" text-anchor="start" textLength="31" lengthAdjust="spacingAndGlyphs">Varias</text></svg>
<svg style="left:0;top:0;" width="1" height="1"><text x="1021" y="917" font-family="'Liberation Sans',sans-serif" font-size="11.5" font-weight="normal" font-style="normal" fill="#111" text-anchor="start" textLength="54" lengthAdjust="spacingAndGlyphs">Estimativas</text></svg>
<div style="left:545px;top:925px;width:470px;height:29px;background:#f0f0f0;"></div>
<svg style="left:0px;top:0px;" width="1100" height="960" viewBox="0 0 1100 960"><defs><linearGradient id="shg3" x1="0" y1="0" x2="1" y2="1"><stop offset="0" stop-color="#c4cfd8"/><stop offset="0.6" stop-color="#e9eef2"/><stop offset="1" stop-color="#f6f8fa"/></linearGradient></defs><circle cx="589" cy="911" r="3.500" fill="none" stroke="#222" stroke-width="1.100"/><path d="M589 904v14" stroke="#222" stroke-width="1.100"/><path d="M664 906h10M669 903v6M661 912h16M664 912v6M669 912v6M674 912v6" stroke="#222" stroke-width="1.200" fill="none"/><rect x="666" y="903" width="6" height="3" fill="none" stroke="#222"/><rect x="755" y="905" width="9" height="9" rx="2" fill="none" stroke="#222" stroke-width="1.600"/><path d="M755 906h9" stroke="#222" stroke-width="2"/><path d="M834 917v-12h13M838 917v-8h9" stroke="#222" stroke-width="1.500" fill="none"/><path d="M834 905h13" stroke="#999" stroke-width="2.500" stroke-dasharray="1 1"/><path d="M931 917l1.500-5l6-8l2.500 1.500l-6 8.500z" fill="none" stroke="#222" stroke-width="1.200"/><path d="M935 906l3 2" stroke="#222"/><rect x="996.0" y="904" width="1.800" height="9" fill="#111"/><rect x="999.4" y="904" width="1.800" height="9" fill="#111"/><rect x="1002.8" y="904" width="1.800" height="9" fill="#111"/><rect x="1006.2" y="904" width="1.800" height="9" fill="#111"/><rect x="1009.6" y="904" width="1.800" height="9" fill="#111"/><rect x="557.5" y="931.5" width="13" height="10" rx="1" fill="url(#shg3)" stroke="#4a7fcc" stroke-width="1"/><rect x="558" y="937.5" width="12" height="4" fill="#4a7fcc"/><rect x="559.0" y="938.7" width="2.1" height="1.600" fill="#eef3f8"/><rect x="562.3" y="938.7" width="2.1" height="1.600" fill="#eef3f8"/><rect x="565.7" y="938.7" width="2.1" height="1.600" fill="#eef3f8"/><rect x="560.5" y="934.5" width="13" height="10" rx="1" fill="url(#shg3)" stroke="#4a7fcc" stroke-width="1"/><rect x="561" y="940.5" width="12" height="4" fill="#4a7fcc"/><rect x="562.0" y="941.7" width="2.1" height="1.600" fill="#eef3f8"/><rect x="565.3" y="941.7" width="2.1" height="1.600" fill="#eef3f8"/><rect x="568.7" y="941.7" width="2.1" height="1.600" fill="#eef3f8"/><rect x="563.500" y="937.500" width="11" height="11" fill="#f4f4f4" stroke="#888"/><path d="M565 941h8M565 944h8M565 947h8" stroke="#999"/><rect x="584.500" y="930.500" width="9" height="19" fill="#1a4a9a" stroke="#0a2a6a"/><path d="M586 933h6M586 936h6M586 939h6M586 942h6M586 945h6" stroke="#9ac0f0"/><rect x="594.500" y="931.500" width="9" height="17" fill="#2a8fe0" stroke="#1a5aa0"/><path d="M596 940h6M599 934v12" stroke="#fff" stroke-width="1.200"/><rect x="613.5" y="931.5" width="19" height="16" rx="1" fill="url(#shg3)" stroke="#4a7fcc" stroke-width="1"/><rect x="614" y="943.5" width="18" height="4" fill="#4a7fcc"/><rect x="615.0" y="944.7" width="4.1" height="1.600" fill="#eef3f8"/><rect x="620.3" y="944.7" width="4.1" height="1.600" fill="#eef3f8"/><rect x="625.7" y="944.7" width="4.1" height="1.600" fill="#eef3f8"/><path d="M619 943v-9a3 3 0 0 1 6 0v11a2.200 2.200 0 0 1 -4.400 0v-8" fill="none" stroke="#222" stroke-width="1.600"/><path d="M648 932h9v17l-4.500-4.500l-4.500 4.500z" fill="#e8f4fc" stroke="#2f8fd8" stroke-width="1.400"/><path d="M643 931l6 6M643 937l6-6M646 929v9M642 934h8" stroke="#d8c040" stroke-width="1"/><path d="M677 931h9v17l-4.500-4.500l-4.500 4.500z" fill="#e8f4fc" stroke="#2f8fd8" stroke-width="1.600"/><path d="M700 938l7-6v4c6 0 9 3 10 8c-3-3-5-4-10-4v4z" fill="#1f4e9a" stroke="#6a9ad8" stroke-width="0.800"/><rect x="702.500" y="943.500" width="16" height="6" fill="#dfe9f2" stroke="#3f6fb0"/><rect x="704" y="946" width="13" height="1.500" fill="#3f6fb0"/><path d="M748 938l-7-6v4c-6 0-9 3-10 8c3-3 5-4 10-4v4z" fill="#1f4e9a" stroke="#6a9ad8" stroke-width="0.800"/><rect x="730.500" y="943.500" width="16" height="6" fill="#dfe9f2" stroke="#3f6fb0"/><rect x="732" y="946" width="13" height="1.500" fill="#3f6fb0"/><path d="M758 938l8-6l12 3l-6 7z" fill="#e8e8e8" stroke="#555" stroke-width="0.800"/><path d="M758 938v6l14 5v-7z" fill="#c8c8c8" stroke="#555" stroke-width="0.800"/><path d="M772 942v7l6-7v-7z" fill="#aaa" stroke="#555" stroke-width="0.800"/><rect x="766" y="940" width="10" height="8" fill="#dfe8f1" stroke="#5f8fcb"/><path d="M764 934l5-4l6 1.500" stroke="#fff" stroke-width="2"/><rect x="789.500" y="930.500" width="16" height="18" fill="#fff" stroke="#999"/><rect x="788" y="932" width="17" height="7" rx="1" fill="#e02828"/><rect x="797" y="942" width="10" height="7" fill="#dfe8f1" stroke="#5f8fcb"/><path d="M790 937v-3h2M794 937v-3h2v3M799 937v-3h2" stroke="#fff" stroke-width="0.800" fill="none"/><rect x="816.5" y="932.5" width="19" height="14" rx="1" fill="url(#shg3)" stroke="#4a7fcc" stroke-width="1"/><rect x="817" y="942.5" width="18" height="4" fill="#4a7fcc"/><rect x="818.0" y="943.7" width="4.1" height="1.600" fill="#eef3f8"/><rect x="823.3" y="943.7" width="4.1" height="1.600" fill="#eef3f8"/><rect x="828.7" y="943.7" width="4.1" height="1.600" fill="#eef3f8"/><path d="M818 934l9 7" stroke="#a87a30" stroke-width="2.200"/><circle cx="829" cy="944" r="4.500" fill="#e8f0f8" stroke="#333" stroke-width="1.100"/><path d="M828 942v4l3-2z" fill="#333"/><rect x="845.5" y="930.5" width="8" height="7" fill="#e8f0f8" stroke="#5f8fcb" stroke-width="1.200"/><rect x="856.5" y="930.5" width="8" height="7" fill="#e8f0f8" stroke="#5f8fcb" stroke-width="1.200"/><rect x="845.5" y="941.5" width="8" height="7" fill="#e8f0f8" stroke="#5f8fcb" stroke-width="1.200"/><rect x="856.5" y="941.5" width="8" height="7" fill="#e8f0f8" stroke="#5f8fcb" stroke-width="1.200"/><rect x="874.500" y="938.500" width="12" height="10" fill="#f4f4ec" stroke="#5f8fcb"/><rect x="880" y="930" width="9" height="3" fill="#111"/><rect x="883" y="932" width="3" height="14" fill="#b01010"/><rect x="890" y="931" width="2.800" height="10" fill="#20c020"/><path d="M888 945h6l-3 4z" fill="#111"/><rect x="903.500" y="933.500" width="18" height="14" rx="1" fill="#e8f0f8" stroke="#5f8fcb" stroke-width="1.400"/><path d="M933 930l6 1l1 5l-5 1z" fill="#1a5ac0"/><path d="M936 936l4-1l10 10l-6 4l-5-7z" fill="#e0c860" stroke="#8a7a30" stroke-width="0.600"/><path d="M962 936h8v4h6M972 936v13M966 940v9" stroke="#2a6fb0" stroke-width="2.400" fill="none"/><rect x="976" y="931" width="3.500" height="12" fill="#2a6fb0"/><rect x="975" y="944" width="5" height="4" fill="#e02020"/><rect x="963" y="946" width="5" height="3" fill="#9ab"/><rect x="990" y="930" width="18" height="19" rx="3" fill="#1a5ab0"/><path d="M995 936c0-4 8-4 8 0c0 3-4 3-4 6" stroke="#fff" stroke-width="2.400" fill="none"/><circle cx="999" cy="945.500" r="1.500" fill="#fff"/></svg>
<div style="left:1503px;top:256px;width:415px;height:32px;background:#2c3340;border-radius:6px 0 0 0;"></div>
<div style="left:1503px;top:283px;width:415px;height:701px;background:#3b4453;"></div>
<svg style="left:1511px;top:262px;" width="6" height="14" viewBox="0 0 6 14"><rect x="0" y="0" width="1" height="1" fill="#aab"/><rect x="2" y="0" width="1" height="1" fill="#aab"/><rect x="0" y="2" width="1" height="1" fill="#aab"/><rect x="2" y="2" width="1" height="1" fill="#aab"/><rect x="0" y="4" width="1" height="1" fill="#aab"/><rect x="2" y="4" width="1" height="1" fill="#aab"/><rect x="0" y="6" width="1" height="1" fill="#aab"/><rect x="2" y="6" width="1" height="1" fill="#aab"/><rect x="0" y="8" width="1" height="1" fill="#aab"/><rect x="2" y="8" width="1" height="1" fill="#aab"/><rect x="0" y="10" width="1" height="1" fill="#aab"/><rect x="2" y="10" width="1" height="1" fill="#aab"/></svg>
<svg style="left:0;top:0;" width="1" height="1"><text x="1522" y="274" font-family="'Liberation Sans',sans-serif" font-size="15" font-weight="normal" font-style="normal" fill="#e8e8e8" text-anchor="start" textLength="105" lengthAdjust="spacingAndGlyphs">PROPRIEDADES</text></svg>
<svg style="left:1872px;top:259px;" width="42" height="18" viewBox="0 0 42 18"><rect x="4" y="3" width="2" height="11" fill="#e0e0e0"/><path d="M14 4v9l-7-4.500z" fill="#e0e0e0"/><path d="M29 4l8 8M37 4l-8 8" stroke="#e8e8e8" stroke-width="2.400"/></svg>
<div style="left:1507px;top:288px;width:409px;height:690px;background:#ffffff;"></div>
<div style="left:1507px;top:288px;width:409px;height:63px;background:#f0f0f0;"></div>
<div style="left:1913px;top:289px;width:1px;height:688px;background:#dcdcdc;"></div>
<div style="left:1508px;top:976px;width:406px;height:1px;background:#dcdcdc;"></div>
<div style="left:1508px;top:290px;width:226px;height:25px;background:#ffffff;border:1px solid #7a7a7a;box-sizing:border-box;"></div>
<span class="t" style="top:295px;font-size:15px;line-height:15px;color:#111;font-family:'Liberation Sans',sans-serif;left:1510px;">Todos os símbolos</span>
<svg style="left:1717px;top:297px;" width="12" height="10" viewBox="0 0 12 10"><path d="M1.500 2.500l4.500 4.500l4.500-4.500" stroke="#444" stroke-width="1.200" fill="none"/></svg>
<div style="left:1740px;top:289px;width:176px;height:28px;background:#ffffff;border:1px solid #7a7a7a;box-sizing:border-box;"></div>
<svg style="left:1893px;top:293px;" width="22" height="22" viewBox="0 0 22 22"><circle cx="8" cy="8" r="5.500" fill="none" stroke="#222" stroke-width="1.800"/><path d="M12 12l6 6" stroke="#222" stroke-width="2.600"/></svg>
<div style="left:1508px;top:323px;width:82px;height:28px;background:#ffffff;"></div>
<div style="left:1589px;top:325px;width:70px;height:25px;background:#f0f0f0;border:1px solid #d9d9d9;box-sizing:border-box;"></div>
<div style="left:1658px;top:325px;width:79px;height:25px;background:#f0f0f0;border:1px solid #d9d9d9;box-sizing:border-box;"></div>
<div style="left:1736px;top:325px;width:72px;height:25px;background:#f0f0f0;border:1px solid #d9d9d9;box-sizing:border-box;"></div>
<div style="left:1508px;top:350px;width:406px;height:627px;background:#ffffff;"></div>
<div style="left:1590px;top:350px;width:324px;height:1px;background:#dcdcdc;"></div>
<span class="t" style="top:328px;font-size:15px;line-height:15px;color:#111;font-family:'Liberation Sans',sans-serif;left:1515px;">Biblioteca</span>
<span class="t" style="top:330px;font-size:15px;line-height:15px;color:#111;font-family:'Liberation Sans',sans-serif;left:1594px;">Favoritos</span>
<span class="t" style="top:330px;font-size:15px;line-height:15px;color:#111;font-family:'Liberation Sans',sans-serif;left:1665px;">Diagrama</span>
<span class="t" style="top:330px;font-size:15px;line-height:15px;color:#111;font-family:'Liberation Sans',sans-serif;left:1743px;">Inspector</span>
<div style="left:1511px;top:353px;width:369px;height:27px;background:#ffffff;border:1px solid #7a7a7a;box-sizing:border-box;"></div>
<span class="t" style="top:359px;font-size:15px;line-height:15px;color:#111;font-family:'Liberation Sans',sans-serif;left:1514px;">Disjuntores verticais 2</span>
<div style="left:1859px;top:356px;width:18px;height:21px;background:#e1e1e1;border:1px solid #adadad;box-sizing:border-box;"></div>
<span class="t" style="top:363px;font-size:11px;line-height:11px;color:#111;font-family:'Liberation Sans',sans-serif;left:1868px;transform:translateX(-50%);">...</span>
<svg style="left:1888px;top:359px;" width="16" height="16" viewBox="0 0 16 16"><circle cx="8" cy="8" r="7" fill="#4a4a4a"/><path d="M5 5l6 6M11 5l-6 6" stroke="#fff" stroke-width="2"/></svg>
<div style="left:1511px;top:386px;width:380px;height:548px;overflow:hidden;"><div style="left:0px;top:0px;width:380px;height:550px;background:#3b4453;"></div><div style="left:25px;top:0px;width:3px;height:550px;background:#323a47;"></div><div style="left:28px;top:2px;width:76px;height:71px;background:#000000;"></div><svg style="left:0;top:0;" width="1" height="1"><text x="109.5" y="32" font-family="'Liberation Sans',sans-serif" font-size="15" font-weight="normal" font-style="normal" fill="#f0f0f0" text-anchor="start" textLength="239" lengthAdjust="spacingAndGlyphs">INTERRUP.DE POTÊ.COM PROTEÇÃO</text></svg><svg style="left:0;top:0;" width="1" height="1"><text x="109.5" y="52" font-family="'Liberation Sans',sans-serif" font-size="15" font-weight="normal" font-style="normal" fill="#f0f0f0" text-anchor="start" textLength="234" lengthAdjust="spacingAndGlyphs">TÉRMICA E DE MÁXIMA CORRENTE</text></svg><div style="left:28px;top:77px;width:76px;height:71px;background:#000000;"></div><svg style="left:0;top:0;" width="1" height="1"><text x="109.5" y="107" font-family="'Liberation Sans',sans-serif" font-size="15" font-weight="normal" font-style="normal" fill="#f0f0f0" text-anchor="start" textLength="239" lengthAdjust="spacingAndGlyphs">INTERRUP.DE POTÊ.COM PROTEÇÃO</text></svg><svg style="left:0;top:0;" width="1" height="1"><text x="109.5" y="127" font-family="'Liberation Sans',sans-serif" font-size="15" font-weight="normal" font-style="normal" fill="#f0f0f0" text-anchor="start" textLength="234" lengthAdjust="spacingAndGlyphs">TÉRMICA E DE MÁXIMA CORRENTE</text></svg><div style="left:28px;top:152px;width:76px;height:71px;background:#000000;"></div><svg style="left:0;top:0;" width="1" height="1"><text x="109.5" y="182" font-family="'Liberation Sans',sans-serif" font-size="15" font-weight="normal" font-style="normal" fill="#f0f0f0" text-anchor="start" textLength="239" lengthAdjust="spacingAndGlyphs">INTERRUP.DE POTÊ.COM PROTEÇÃO</text></svg><svg style="left:0;top:0;" width="1" height="1"><text x="109.5" y="202" font-family="'Liberation Sans',sans-serif" font-size="15" font-weight="normal" font-style="normal" fill="#f0f0f0" text-anchor="start" textLength="234" lengthAdjust="spacingAndGlyphs">TÉRMICA E DE MÁXIMA CORRENTE</text></svg><div style="left:28px;top:227px;width:76px;height:71px;background:#000000;"></div><svg style="left:0;top:0;" width="1" height="1"><text x="109.5" y="257" font-family="'Liberation Sans',sans-serif" font-size="15" font-weight="normal" font-style="normal" fill="#f0f0f0" text-anchor="start" textLength="250" lengthAdjust="spacingAndGlyphs">INTERRUP.DE POTÊN.COM PROTEÇÃO</text></svg><svg style="left:0;top:0;" width="1" height="1"><text x="109.5" y="277" font-family="'Liberation Sans',sans-serif" font-size="15" font-weight="normal" font-style="normal" fill="#f0f0f0" text-anchor="start" textLength="263" lengthAdjust="spacingAndGlyphs">DE MÁXIMA CORRENTE E DIFERENCIAL</text></svg><div style="left:28px;top:302px;width:76px;height:71px;background:#000000;"></div><svg style="left:0;top:0;" width="1" height="1"><text x="109.5" y="332" font-family="'Liberation Sans',sans-serif" font-size="15" font-weight="normal" font-style="normal" fill="#f0f0f0" text-anchor="start" textLength="250" lengthAdjust="spacingAndGlyphs">INTERRUP.DE POTÊN.COM PROTEÇÃO</text></svg><svg style="left:0;top:0;" width="1" height="1"><text x="109.5" y="352" font-family="'Liberation Sans',sans-serif" font-size="15" font-weight="normal" font-style="normal" fill="#f0f0f0" text-anchor="start" textLength="263" lengthAdjust="spacingAndGlyphs">DE MÁXIMA CORRENTE E DIFERENCIAL</text></svg><div style="left:28px;top:377px;width:76px;height:71px;background:#000000;"></div><svg style="left:0;top:0;" width="1" height="1"><text x="109.5" y="407" font-family="'Liberation Sans',sans-serif" font-size="15" font-weight="normal" font-style="normal" fill="#f0f0f0" text-anchor="start" textLength="250" lengthAdjust="spacingAndGlyphs">INTERRUP.DE POTÊN.COM PROTEÇÃO</text></svg><svg style="left:0;top:0;" width="1" height="1"><text x="109.5" y="427" font-family="'Liberation Sans',sans-serif" font-size="15" font-weight="normal" font-style="normal" fill="#f0f0f0" text-anchor="start" textLength="263" lengthAdjust="spacingAndGlyphs">DE MÁXIMA CORRENTE E DIFERENCIAL</text></svg><div style="left:28px;top:452px;width:76px;height:71px;background:#000000;"></div><svg style="left:0;top:0;" width="1" height="1"><text x="109.5" y="482" font-family="'Liberation Sans',sans-serif" font-size="15" font-weight="normal" font-style="normal" fill="#f0f0f0" text-anchor="start" textLength="250" lengthAdjust="spacingAndGlyphs">INTERRUP.DE POTÊN.COM PROTEÇÃO</text></svg><svg style="left:0;top:0;" width="1" height="1"><text x="109.5" y="502" font-family="'Liberation Sans',sans-serif" font-size="15" font-weight="normal" font-style="normal" fill="#f0f0f0" text-anchor="start" textLength="263" lengthAdjust="spacingAndGlyphs">DE MÁXIMA CORRENTE E DIFERENCIAL</text></svg><div style="left:28px;top:527px;width:76px;height:71px;background:#000000;"></div><svg style="left:0;top:0;" width="1" height="1"><text x="109.5" y="557" font-family="'Liberation Sans',sans-serif" font-size="15" font-weight="normal" font-style="normal" fill="#f0f0f0" text-anchor="start" textLength="250" lengthAdjust="spacingAndGlyphs">INTERRUP.DE POTÊN.COM PROTEÇÃO</text></svg><svg style="left:0;top:0;" width="1" height="1"><text x="109.5" y="577" font-family="'Liberation Sans',sans-serif" font-size="15" font-weight="normal" font-style="normal" fill="#f0f0f0" text-anchor="start" textLength="263" lengthAdjust="spacingAndGlyphs">DE MÁXIMA CORRENTE E DIFERENCIAL</text></svg><svg style="left:0px;top:0px;" width="380" height="550" viewBox="0 0 380 550"><defs><linearGradient id="stg" x1="0" y1="0" x2="0" y2="1"><stop offset="0" stop-color="#ffffff"/><stop offset="0.55" stop-color="#e4e4e4"/><stop offset="1" stop-color="#a8a8a8"/></linearGradient></defs><polygon points="10.5,29.1 12.8,34.1 18.3,34.8 14.2,38.5 15.3,43.9 10.5,41.2 5.7,43.9 6.8,38.5 2.7,34.8 8.2,34.1" fill="#6e747c" stroke="#6e747c" stroke-width="1.600" stroke-linejoin="round" transform="translate(0.6 1.2)"/><polygon points="10.5,29.1 12.8,34.1 18.3,34.8 14.2,38.5 15.3,43.9 10.5,41.2 5.7,43.9 6.8,38.5 2.7,34.8 8.2,34.1" fill="url(#stg)" stroke="#f4f4f4" stroke-width="1.400" stroke-linejoin="round"/><path d="M54.4 20v6.500M50.9 25.5l3.500 5M54.4 30.5V55" stroke="#ffffff" stroke-width="1.15" fill="none"/><path d="M52.2 25l4.400 3.500M56.6 25l-4.400 3.500" stroke="#ffffff" stroke-width="0.900"/><rect x="48.1" y="38" width="12.700" height="12.700" fill="#000" stroke="#ffffff" stroke-width="1.15"/><path d="M48.1 44.3h12.700M54.4 38v2.500h4.500v3.800" stroke="#ffffff" stroke-width="1" fill="none"/><path d="M50.9 45.5v4M53.9 46l3 1.500l-3 1.500" stroke="#00e000" stroke-width="1.200" fill="none"/><path d="M67.1 20v6.500M63.6 25.5l3.500 5M67.1 30.5V55" stroke="#ffffff" stroke-width="1.15" fill="none"/><path d="M64.9 25l4.400 3.500M69.3 25l-4.400 3.500" stroke="#ffffff" stroke-width="0.900"/><rect x="60.8" y="38" width="12.700" height="12.700" fill="#000" stroke="#ffffff" stroke-width="1.15"/><path d="M60.8 44.3h12.700M67.1 38v2.500h4.500v3.800" stroke="#ffffff" stroke-width="1" fill="none"/><path d="M63.6 45.5v4M66.6 46l3 1.500l-3 1.500" stroke="#00e000" stroke-width="1.200" fill="none"/><path d="M79.8 20v6.500M76.3 25.5l3.500 5M79.8 30.5V55" stroke="#ffffff" stroke-width="1.15" fill="none"/><path d="M77.6 25l4.400 3.500M82.0 25l-4.400 3.500" stroke="#ffffff" stroke-width="0.900"/><rect x="73.5" y="38" width="12.700" height="12.700" fill="#000" stroke="#ffffff" stroke-width="1.15"/><path d="M73.5 44.3h12.700M79.8 38v2.500h4.500v3.800" stroke="#ffffff" stroke-width="1" fill="none"/><path d="M76.3 45.5v4M79.3 46l3 1.500l-3 1.500" stroke="#00e000" stroke-width="1.200" fill="none"/><path d="M43.4 28H92.5" stroke="#f0e800" stroke-width="1.200" stroke-dasharray="3 1.500"/><path d="M45.4 32V46.5h3" stroke="#f0e800" stroke-width="1.200" stroke-dasharray="2 1.500" fill="none"/><rect x="42.1" y="25.2" width="5.600" height="5.600" fill="#000" stroke="#ffffff" stroke-width="1"/><path d="M44.9 25.2v5.600M42.1 28h5.600" stroke="#ffffff" stroke-width="0.800"/><path d="M38.9 26.5l2 1.500l-2 1.500z" fill="#ffffff"/><rect x="52.9" y="17.5" width="3" height="2.500" fill="#20d8e8"/><path d="M92.5 20v6.500M89.0 25.5l3.500 5M92.5 30.5V55" stroke="#ffffff" stroke-width="1.15" fill="none"/><polygon points="10.5,104.1 12.8,109.1 18.3,109.8 14.2,113.5 15.3,118.9 10.5,116.2 5.7,118.9 6.8,113.5 2.7,109.8 8.2,109.1" fill="#6e747c" stroke="#6e747c" stroke-width="1.600" stroke-linejoin="round" transform="translate(0.6 1.2)"/><polygon points="10.5,104.1 12.8,109.1 18.3,109.8 14.2,113.5 15.3,118.9 10.5,116.2 5.7,118.9 6.8,113.5 2.7,109.8 8.2,109.1" fill="url(#stg)" stroke="#f4f4f4" stroke-width="1.400" stroke-linejoin="round"/><path d="M67.2 95v6.500M63.7 100.5l3.500 5M67.2 105.5V130" stroke="#ffffff" stroke-width="1.15" fill="none"/><path d="M65.0 100l4.400 3.500M69.4 100l-4.400 3.500" stroke="#ffffff" stroke-width="0.900"/><rect x="60.9" y="113" width="12.700" height="12.700" fill="#000" stroke="#ffffff" stroke-width="1.15"/><path d="M60.9 119.3h12.700M67.2 113v2.500h4.500v3.800" stroke="#ffffff" stroke-width="1" fill="none"/><path d="M63.7 120.5v4M66.7 121l3 1.500l-3 1.500" stroke="#00e000" stroke-width="1.200" fill="none"/><path d="M56.2 103H79.9" stroke="#f0e800" stroke-width="1.200" stroke-dasharray="3 1.500"/><path d="M58.2 107V121.5h3" stroke="#f0e800" stroke-width="1.200" stroke-dasharray="2 1.500" fill="none"/><rect x="54.9" y="100.2" width="5.600" height="5.600" fill="#000" stroke="#ffffff" stroke-width="1"/><path d="M57.7 100.2v5.600M54.9 103h5.600" stroke="#ffffff" stroke-width="0.800"/><path d="M51.7 101.5l2 1.500l-2 1.500z" fill="#ffffff"/><rect x="65.7" y="92.5" width="3" height="2.500" fill="#20d8e8"/><path d="M79.9 95v6.500M76.4 100.5l3.500 5M79.9 105.5V130" stroke="#ffffff" stroke-width="1.15" fill="none"/><polygon points="10.5,179.1 12.8,184.1 18.3,184.8 14.2,188.5 15.3,193.9 10.5,191.2 5.7,193.9 6.8,188.5 2.7,184.8 8.2,184.1" fill="#6e747c" stroke="#6e747c" stroke-width="1.600" stroke-linejoin="round" transform="translate(0.6 1.2)"/><polygon points="10.5,179.1 12.8,184.1 18.3,184.8 14.2,188.5 15.3,193.9 10.5,191.2 5.7,193.9 6.8,188.5 2.7,184.8 8.2,184.1" fill="url(#stg)" stroke="#f4f4f4" stroke-width="1.400" stroke-linejoin="round"/><path d="M64.5 170v6.500M61.0 175.5l3.500 5M64.5 180.5V205" stroke="#ffffff" stroke-width="1.15" fill="none"/><path d="M62.3 175l4.400 3.500M66.7 175l-4.400 3.500" stroke="#ffffff" stroke-width="0.900"/><rect x="58.1" y="188" width="12.700" height="12.700" fill="#000" stroke="#ffffff" stroke-width="1.15"/><path d="M58.1 194.3h12.700M64.5 188v2.500h4.500v3.800" stroke="#ffffff" stroke-width="1" fill="none"/><path d="M61.0 195.5v4M64.0 196l3 1.500l-3 1.500" stroke="#00e000" stroke-width="1.200" fill="none"/><path d="M77.2 170v6.500M73.7 175.5l3.500 5M77.2 180.5V205" stroke="#ffffff" stroke-width="1.15" fill="none"/><path d="M75.0 175l4.400 3.500M79.4 175l-4.400 3.500" stroke="#ffffff" stroke-width="0.900"/><rect x="70.9" y="188" width="12.700" height="12.700" fill="#000" stroke="#ffffff" stroke-width="1.15"/><path d="M70.9 194.3h12.700M77.2 188v2.500h4.500v3.800" stroke="#ffffff" stroke-width="1" fill="none"/><path d="M73.7 195.5v4M76.7 196l3 1.500l-3 1.500" stroke="#00e000" stroke-width="1.200" fill="none"/><path d="M53.5 178H77.2" stroke="#f0e800" stroke-width="1.200" stroke-dasharray="3 1.500"/><path d="M55.5 182V196.5h3" stroke="#f0e800" stroke-width="1.200" stroke-dasharray="2 1.500" fill="none"/><rect x="52.2" y="175.2" width="5.600" height="5.600" fill="#000" stroke="#ffffff" stroke-width="1"/><path d="M55.0 175.2v5.600M52.2 178h5.600" stroke="#ffffff" stroke-width="0.800"/><path d="M49.0 176.5l2 1.500l-2 1.500z" fill="#ffffff"/><rect x="63.0" y="167.5" width="3" height="2.500" fill="#20d8e8"/><polygon points="10.5,254.1 12.8,259.1 18.3,259.8 14.2,263.5 15.3,268.9 10.5,266.2 5.7,268.9 6.8,263.5 2.7,259.8 8.2,259.1" fill="#6e747c" stroke="#6e747c" stroke-width="1.600" stroke-linejoin="round" transform="translate(0.6 1.2)"/><polygon points="10.5,254.1 12.8,259.1 18.3,259.8 14.2,263.5 15.3,268.9 10.5,266.2 5.7,268.9 6.8,263.5 2.7,259.8 8.2,259.1" fill="url(#stg)" stroke="#f4f4f4" stroke-width="1.400" stroke-linejoin="round"/><path d="M61.2 245.5v4.500M58.2 250.0l3 4.500M61.2 254.5V281.0" stroke="#ffffff" stroke-width="1.15" fill="none"/><path d="M59.0 249.0l4.400 3.500M63.4 249.0l-4.400 3.500" stroke="#ffffff" stroke-width="0.900"/><rect x="55.9" y="260.5" width="10.700" height="16" fill="#000" stroke="#ffffff" stroke-width="1.15"/><path d="M55.9 265.8h10.700M55.9 271.1h10.700" stroke="#ffffff" stroke-width="0.900"/><path d="M57.7 263.0h2.500M62.7 264.0l2.500-1.500M57.7 267.5l2.500 1.500M62.7 269.0l2.500-1M58.2 272.5v3M63.2 272.5l1.500 2.500" stroke="#00e000" stroke-width="1.300" fill="none"/><path d="M71.9 245.5v4.500M68.9 250.0l3 4.500M71.9 254.5V281.0" stroke="#ffffff" stroke-width="1.15" fill="none"/><path d="M69.7 249.0l4.400 3.500M74.1 249.0l-4.400 3.500" stroke="#ffffff" stroke-width="0.900"/><rect x="66.6" y="260.5" width="10.700" height="16" fill="#000" stroke="#ffffff" stroke-width="1.15"/><path d="M66.6 265.8h10.700M66.6 271.1h10.700" stroke="#ffffff" stroke-width="0.900"/><path d="M68.4 263.0h2.500M73.4 264.0l2.500-1.500M68.4 267.5l2.500 1.500M73.4 269.0l2.500-1M68.9 272.5v3M73.9 272.5l1.500 2.500" stroke="#00e000" stroke-width="1.300" fill="none"/><path d="M61.2 252.5H71.9" stroke="#f0e800" stroke-width="1.200" stroke-dasharray="3 1.500"/><rect x="60.0" y="241.5" width="2.400" height="3.500" fill="#20d8e8"/><polygon points="10.5,329.1 12.8,334.1 18.3,334.8 14.2,338.5 15.3,343.9 10.5,341.2 5.7,343.9 6.8,338.5 2.7,334.8 8.2,334.1" fill="#6e747c" stroke="#6e747c" stroke-width="1.600" stroke-linejoin="round" transform="translate(0.6 1.2)"/><polygon points="10.5,329.1 12.8,334.1 18.3,334.8 14.2,338.5 15.3,343.9 10.5,341.2 5.7,343.9 6.8,338.5 2.7,334.8 8.2,334.1" fill="url(#stg)" stroke="#f4f4f4" stroke-width="1.400" stroke-linejoin="round"/><path d="M55.2 320.5v4.500M52.2 325.0l3 4.500M55.2 329.5V356.0" stroke="#ffffff" stroke-width="1.15" fill="none"/><path d="M53.0 324.0l4.400 3.500M57.4 324.0l-4.400 3.500" stroke="#ffffff" stroke-width="0.900"/><rect x="49.9" y="335.5" width="10.700" height="16" fill="#000" stroke="#ffffff" stroke-width="1.15"/><path d="M49.9 340.8h10.700M49.9 346.1h10.700" stroke="#ffffff" stroke-width="0.900"/><path d="M51.7 338.0h2.500M56.7 339.0l2.500-1.500M51.7 342.5l2.500 1.500M56.7 344.0l2.500-1M52.2 347.5v3M57.2 347.5l1.500 2.500" stroke="#00e000" stroke-width="1.300" fill="none"/><path d="M65.9 320.5v4.500M62.9 325.0l3 4.500M65.9 329.5V356.0" stroke="#ffffff" stroke-width="1.15" fill="none"/><path d="M63.7 324.0l4.400 3.500M68.1 324.0l-4.400 3.500" stroke="#ffffff" stroke-width="0.900"/><rect x="60.6" y="335.5" width="10.700" height="16" fill="#000" stroke="#ffffff" stroke-width="1.15"/><path d="M60.6 340.8h10.700M60.6 346.1h10.700" stroke="#ffffff" stroke-width="0.900"/><path d="M62.4 338.0h2.500M67.4 339.0l2.500-1.500M62.4 342.5l2.500 1.500M67.4 344.0l2.500-1M62.9 347.5v3M67.9 347.5l1.500 2.500" stroke="#00e000" stroke-width="1.300" fill="none"/><path d="M76.6 320.5v4.500M73.6 325.0l3 4.500M76.6 329.5V356.0" stroke="#ffffff" stroke-width="1.15" fill="none"/><path d="M74.4 324.0l4.400 3.500M78.8 324.0l-4.400 3.500" stroke="#ffffff" stroke-width="0.900"/><rect x="71.3" y="335.5" width="10.700" height="16" fill="#000" stroke="#ffffff" stroke-width="1.15"/><path d="M71.3 340.8h10.700M71.3 346.1h10.700" stroke="#ffffff" stroke-width="0.900"/><path d="M73.1 338.0h2.500M78.1 339.0l2.500-1.500M73.1 342.5l2.500 1.500M78.1 344.0l2.500-1M73.6 347.5v3M78.6 347.5l1.500 2.500" stroke="#00e000" stroke-width="1.300" fill="none"/><path d="M55.2 327.5H76.6" stroke="#f0e800" stroke-width="1.200" stroke-dasharray="3 1.500"/><polygon points="10.5,404.1 12.8,409.1 18.3,409.8 14.2,413.5 15.3,418.9 10.5,416.2 5.7,418.9 6.8,413.5 2.7,409.8 8.2,409.1" fill="#6e747c" stroke="#6e747c" stroke-width="1.600" stroke-linejoin="round" transform="translate(0.6 1.2)"/><polygon points="10.5,404.1 12.8,409.1 18.3,409.8 14.2,413.5 15.3,418.9 10.5,416.2 5.7,418.9 6.8,413.5 2.7,409.8 8.2,409.1" fill="url(#stg)" stroke="#f4f4f4" stroke-width="1.400" stroke-linejoin="round"/><path d="M50.2 395.5v4.500M47.2 400.0l3 4.500M50.2 404.5V431.0" stroke="#ffffff" stroke-width="1.15" fill="none"/><path d="M48.0 399.0l4.400 3.500M52.4 399.0l-4.400 3.500" stroke="#ffffff" stroke-width="0.900"/><rect x="44.9" y="410.5" width="10.700" height="16" fill="#000" stroke="#ffffff" stroke-width="1.15"/><path d="M44.9 415.8h10.700M44.9 421.1h10.700" stroke="#ffffff" stroke-width="0.900"/><path d="M46.7 413.0h2.500M51.7 414.0l2.500-1.500M46.7 417.5l2.500 1.500M51.7 419.0l2.500-1M47.2 422.5v3M52.2 422.5l1.500 2.500" stroke="#00e000" stroke-width="1.300" fill="none"/><path d="M60.9 395.5v4.500M57.9 400.0l3 4.500M60.9 404.5V431.0" stroke="#ffffff" stroke-width="1.15" fill="none"/><path d="M58.7 399.0l4.400 3.500M63.1 399.0l-4.400 3.500" stroke="#ffffff" stroke-width="0.900"/><rect x="55.6" y="410.5" width="10.700" height="16" fill="#000" stroke="#ffffff" stroke-width="1.15"/><path d="M55.6 415.8h10.700M55.6 421.1h10.700" stroke="#ffffff" stroke-width="0.900"/><path d="M57.4 413.0h2.500M62.4 414.0l2.500-1.500M57.4 417.5l2.500 1.500M62.4 419.0l2.500-1M57.9 422.5v3M62.9 422.5l1.500 2.500" stroke="#00e000" stroke-width="1.300" fill="none"/><path d="M71.6 395.5v4.500M68.6 400.0l3 4.500M71.6 404.5V431.0" stroke="#ffffff" stroke-width="1.15" fill="none"/><path d="M69.4 399.0l4.400 3.500M73.8 399.0l-4.400 3.500" stroke="#ffffff" stroke-width="0.900"/><rect x="66.3" y="410.5" width="10.700" height="16" fill="#000" stroke="#ffffff" stroke-width="1.15"/><path d="M66.3 415.8h10.700M66.3 421.1h10.700" stroke="#ffffff" stroke-width="0.900"/><path d="M68.1 413.0h2.500M73.1 414.0l2.500-1.500M68.1 417.5l2.500 1.500M73.1 419.0l2.500-1M68.6 422.5v3M73.6 422.5l1.500 2.500" stroke="#00e000" stroke-width="1.300" fill="none"/><path d="M82.3 395.5v4.500M79.3 400.0l3 4.500M82.3 404.5V431.0" stroke="#ffffff" stroke-width="1.15" fill="none"/><path d="M80.1 399.0l4.400 3.500M84.5 399.0l-4.400 3.500" stroke="#ffffff" stroke-width="0.900"/><rect x="77.0" y="410.5" width="10.700" height="16" fill="#000" stroke="#ffffff" stroke-width="1.15"/><path d="M77.0 415.8h10.700M77.0 421.1h10.700" stroke="#ffffff" stroke-width="0.900"/><path d="M78.8 413.0h2.500M83.8 414.0l2.500-1.500M78.8 417.5l2.500 1.500M83.8 419.0l2.500-1M79.3 422.5v3M84.3 422.5l1.500 2.500" stroke="#00e000" stroke-width="1.300" fill="none"/><path d="M50.2 402.5H82.3" stroke="#f0e800" stroke-width="1.200" stroke-dasharray="3 1.500"/><polygon points="10.5,479.1 12.8,484.1 18.3,484.8 14.2,488.5 15.3,493.9 10.5,491.2 5.7,493.9 6.8,488.5 2.7,484.8 8.2,484.1" fill="#6e747c" stroke="#6e747c" stroke-width="1.600" stroke-linejoin="round" transform="translate(0.6 1.2)"/><polygon points="10.5,479.1 12.8,484.1 18.3,484.8 14.2,488.5 15.3,493.9 10.5,491.2 5.7,493.9 6.8,488.5 2.7,484.8 8.2,484.1" fill="url(#stg)" stroke="#f4f4f4" stroke-width="1.400" stroke-linejoin="round"/><path d="M52.0 470.5v4.500M49.0 475.0l3 4.500M52.0 479.5V506.0" stroke="#ffffff" stroke-width="1.15" fill="none"/><path d="M49.8 474.0l4.400 3.500M54.2 474.0l-4.400 3.500" stroke="#ffffff" stroke-width="0.900"/><rect x="46.6" y="485.5" width="10.700" height="16" fill="#000" stroke="#ffffff" stroke-width="1.15"/><path d="M46.6 490.8h10.700M46.6 496.1h10.700" stroke="#ffffff" stroke-width="0.900"/><path d="M48.5 488.0h2.500M53.5 489.0l2.500-1.500M48.5 492.5l2.500 1.500M53.5 494.0l2.500-1M49.0 497.5v3M54.0 497.5l1.500 2.500" stroke="#00e000" stroke-width="1.300" fill="none"/><path d="M62.7 470.5v4.500M59.7 475.0l3 4.500M62.7 479.5V506.0" stroke="#ffffff" stroke-width="1.15" fill="none"/><path d="M60.5 474.0l4.400 3.500M64.9 474.0l-4.400 3.500" stroke="#ffffff" stroke-width="0.900"/><rect x="57.4" y="485.5" width="10.700" height="16" fill="#000" stroke="#ffffff" stroke-width="1.15"/><path d="M57.4 490.8h10.700M57.4 496.1h10.700" stroke="#ffffff" stroke-width="0.900"/><path d="M59.2 488.0h2.500M64.2 489.0l2.500-1.500M59.2 492.5l2.500 1.500M64.2 494.0l2.500-1M59.7 497.5v3M64.7 497.5l1.500 2.500" stroke="#00e000" stroke-width="1.300" fill="none"/><path d="M73.4 470.5v4.500M70.4 475.0l3 4.500M73.4 479.5V506.0" stroke="#ffffff" stroke-width="1.15" fill="none"/><path d="M71.2 474.0l4.400 3.500M75.6 474.0l-4.400 3.500" stroke="#ffffff" stroke-width="0.900"/><rect x="68.1" y="485.5" width="10.700" height="16" fill="#000" stroke="#ffffff" stroke-width="1.15"/><path d="M68.1 490.8h10.700M68.1 496.1h10.700" stroke="#ffffff" stroke-width="0.900"/><path d="M69.9 488.0h2.500M74.9 489.0l2.500-1.500M69.9 492.5l2.500 1.500M74.9 494.0l2.500-1M70.4 497.5v3M75.4 497.5l1.500 2.500" stroke="#00e000" stroke-width="1.300" fill="none"/><path d="M52.0 477.5H84.1" stroke="#f0e800" stroke-width="1.200" stroke-dasharray="3 1.500"/><rect x="50.8" y="466.5" width="2.400" height="3.500" fill="#20d8e8"/><path d="M84.1 470.5v4.500M81.1 475.0l3 4.500M84.1 479.5V506.0" stroke="#ffffff" stroke-width="1.15" fill="none"/><polygon points="10.5,554.1 12.8,559.1 18.3,559.8 14.2,563.5 15.3,568.9 10.5,566.2 5.7,568.9 6.8,563.5 2.7,559.8 8.2,559.1" fill="#6e747c" stroke="#6e747c" stroke-width="1.600" stroke-linejoin="round" transform="translate(0.6 1.2)"/><polygon points="10.5,554.1 12.8,559.1 18.3,559.8 14.2,563.5 15.3,568.9 10.5,566.2 5.7,568.9 6.8,563.5 2.7,559.8 8.2,559.1" fill="url(#stg)" stroke="#f4f4f4" stroke-width="1.400" stroke-linejoin="round"/><path d="M62.8 545.5v4.500M59.8 550.0l3 4.500M62.8 554.5V581.0" stroke="#ffffff" stroke-width="1.15" fill="none"/><path d="M60.6 549.0l4.400 3.500M65.0 549.0l-4.400 3.500" stroke="#ffffff" stroke-width="0.900"/><rect x="57.4" y="560.5" width="10.700" height="16" fill="#000" stroke="#ffffff" stroke-width="1.15"/><path d="M57.4 565.8h10.700M57.4 571.1h10.700" stroke="#ffffff" stroke-width="0.900"/><path d="M59.3 563.0h2.500M64.3 564.0l2.500-1.500M59.3 567.5l2.500 1.500M64.3 569.0l2.500-1M59.8 572.5v3M64.8 572.5l1.500 2.500" stroke="#00e000" stroke-width="1.300" fill="none"/><path d="M73.5 545.5v4.500M70.5 550.0l3 4.500M73.5 554.5V581.0" stroke="#ffffff" stroke-width="1.15" fill="none"/><path d="M71.3 549.0l4.400 3.500M75.7 549.0l-4.400 3.500" stroke="#ffffff" stroke-width="0.900"/><rect x="68.1" y="560.5" width="10.700" height="16" fill="#000" stroke="#ffffff" stroke-width="1.15"/><path d="M68.1 565.8h10.700M68.1 571.1h10.700" stroke="#ffffff" stroke-width="0.900"/><path d="M70.0 563.0h2.500M75.0 564.0l2.500-1.500M70.0 567.5l2.500 1.500M75.0 569.0l2.500-1M70.5 572.5v3M75.5 572.5l1.500 2.500" stroke="#00e000" stroke-width="1.300" fill="none"/><path d="M62.8 552.5H84.2" stroke="#f0e800" stroke-width="1.200" stroke-dasharray="3 1.500"/><rect x="61.6" y="541.5" width="2.400" height="3.500" fill="#20d8e8"/><path d="M84.2 545.5v4.500M81.2 550.0l3 4.500M84.2 554.5V581.0" stroke="#ffffff" stroke-width="1.15" fill="none"/></svg></div>
<div style="left:1510px;top:385px;width:402px;height:550px;border:1px solid #828790;box-sizing:border-box;"></div>
<div style="left:1890px;top:386px;width:21px;height:548px;background:#f0f0f0;"></div>
<div style="left:1891px;top:650px;width:19px;height:142px;background:#cdcdcd;"></div>
<svg style="left:1890px;top:386px;" width="21" height="548" viewBox="0 0 21 548"><path d="M6 14l4.500-4.500l4.500 4.500" stroke="#444" stroke-width="1.600" fill="none"/><path d="M6 534l4.500 4.500l4.500-4.500" stroke="#444" stroke-width="1.600" fill="none"/></svg>
<div style="left:1653px;top:941px;width:115px;height:27px;background:#f0f0f0;"></div>
<svg style="left:1653px;top:941px;" width="115" height="27" viewBox="0 0 115 27"><g fill="#b4b4b4"><rect x="8" y="8" width="1.800" height="11"/><path d="M20 8v11l-8-5.500z"/><path d="M49 8v11l-8-5.500z" /><path d="M68 8v11l8-5.500z"/><path d="M95 8v11l8-5.500z"/><rect x="105" y="8" width="1.800" height="11"/></g></svg>
<div style="left:0px;top:994px;width:1918px;height:35px;background:#222933;"></div>
<svg style="left:40px;top:994px;" width="110" height="35" viewBox="0 0 110 35"><path d="M11.600 30L23.500 0h73.200l-11.300 30z" fill="#3b4453"/></svg>
<svg style="left:18px;top:998px;" width="24" height="22" viewBox="0 0 24 22"><path d="M2 3.500h20M2 11h20M2 18.500h20" stroke="#e8e8e8" stroke-width="2"/></svg>
<svg style="left:0px;top:994px;" width="400" height="35" viewBox="0 0 400 35"><g stroke="#5a6270" stroke-width="1"><path d="M210 29l8-22M292 29l8-22M346 29l8-22"/></g><path d="M312 15h19M321.500 5.500v19" stroke="#f0f0f0" stroke-width="2.200"/></svg>
<span class="t" style="top:1002px;font-size:15px;line-height:15px;color:#ffffff;font-family:'Liberation Sans',sans-serif;font-weight:bold;left:72px;">Model</span>
<span class="t" style="top:1002px;font-size:15px;line-height:15px;color:#f0f0f0;font-family:'Liberation Sans',sans-serif;left:146px;">Layout1</span>
<span class="t" style="top:1002px;font-size:15px;line-height:15px;color:#f0f0f0;font-family:'Liberation Sans',sans-serif;left:228px;">Layout2</span>
<div style="left:1144px;top:997px;width:59px;height:29px;background:#3b4453;"></div>
<div style="left:1206px;top:997px;width:80px;height:29px;background:#3b4453;"></div>
<div style="left:1290px;top:997px;width:128px;height:29px;background:#3b4453;"></div>
<div style="left:1421px;top:997px;width:79px;height:29px;background:#3b4453;"></div>
<div style="left:1504px;top:997px;width:131px;height:29px;background:#3b4453;"></div>
<div style="left:1638px;top:997px;width:50px;height:29px;background:#3b4453;"></div>
<div style="left:1689px;top:997px;width:30px;height:29px;background:#3b4453;"></div>
<div style="left:1722px;top:997px;width:90px;height:29px;background:#3b4453;"></div>
<div style="left:1815px;top:997px;width:38px;height:29px;background:#3b4453;"></div>
<div style="left:1856px;top:997px;width:30px;height:29px;background:#3b4453;"></div>
<div style="left:1889px;top:997px;width:29px;height:29px;background:#3b4453;"></div>
<div style="left:1237px;top:997px;width:28px;height:29px;background:#5b8cc4;"></div>
<div style="left:1290px;top:997px;width:28px;height:29px;background:#5b8cc4;"></div>
<div style="left:1421px;top:997px;width:28px;height:29px;background:#5b8cc4;"></div>
<div style="left:1504px;top:997px;width:28px;height:29px;background:#5b8cc4;"></div>
<div style="left:1753px;top:997px;width:28px;height:29px;background:#5b8cc4;"></div>
<svg style="left:0;top:0;" width="1" height="1"><text x="1149" y="1017" font-family="'Liberation Sans',sans-serif" font-size="15" font-weight="normal" font-style="normal" fill="#f0f0f0" text-anchor="start" textLength="50" lengthAdjust="spacingAndGlyphs">MODEL</text></svg>
<svg style="left:0px;top:0px;" width="1918" height="1029" viewBox="0 0 1918 1029"><path d="M1211 1005h20M1211 1011h20M1211 1017h20M1214.500 1001v20M1221 1001v20M1227.500 1001v20" stroke="#e8e8e8" stroke-width="1.200"/><rect x="1243.0" y="1003.0" width="3" height="3" fill="#fff"/><rect x="1249.5" y="1003.0" width="3" height="3" fill="#fff"/><rect x="1256.0" y="1003.0" width="3" height="3" fill="#fff"/><rect x="1243.0" y="1009.5" width="3" height="3" fill="#fff"/><rect x="1249.5" y="1009.5" width="3" height="3" fill="#fff"/><rect x="1256.0" y="1009.5" width="3" height="3" fill="#fff"/><rect x="1243.0" y="1016.0" width="3" height="3" fill="#fff"/><rect x="1249.5" y="1016.0" width="3" height="3" fill="#fff"/><rect x="1256.0" y="1016.0" width="3" height="3" fill="#fff"/><path d="M1271.5 1008.500h9l-4.500 5z" fill="#e8e8e8"/><path d="M1294.500 1001v19h20M1294.500 1014h6v6" stroke="#e8e8e8" stroke-width="1.400" fill="none"/><circle cx="1332" cy="1011" r="8" fill="none" stroke="#e8e8e8" stroke-width="1.300"/><path d="M1332 1011h12M1332 1011l8-8" stroke="#e8e8e8" stroke-width="1.300"/><path d="M1354.5 1008.500h9l-4.500 5z" fill="#e8e8e8"/><path d="M1384 1001v19" stroke="#30c050" stroke-width="1.300"/><path d="M1376 1003l15 15" stroke="#c03030" stroke-width="1.300"/><rect x="1382" y="1008.500" width="4" height="4" fill="#3b4453" stroke="#e8e8e8" stroke-width="1"/><path d="M1404.5 1008.500h9l-4.500 5z" fill="#e8e8e8"/><path d="M1426 1018h19M1426 1018l15-15" stroke="#e8e8e8" stroke-width="1.400"/><rect x="1431" y="1008" width="4" height="4" fill="#fff"/><rect x="1458.500" y="1003.500" width="16" height="16" fill="none" stroke="#e8e8e8" stroke-width="1.300"/><rect x="1455.500" y="1001.500" width="5" height="5" fill="#3b4453" stroke="#e0a060" stroke-width="1.200"/><path d="M1485.5 1008.500h9l-4.500 5z" fill="#e8e8e8"/><path d="M1516 1002l3 8l6 9l-6-3l-3 4l-3-4l-6 3l6-9z" fill="#e8e8e8"/><path d="M1516 1012l2 4h-4z" fill="#5b8cc4"/><circle cx="1525" cy="1003.500" r="2.500" fill="none" stroke="#e8e8e8" stroke-width="1.100"/><path d="M1546 1002l3 8l6 9l-6-3l-3 4l-3-4l-6 3l6-9z" fill="#e8e8e8"/><path d="M1546 1012l2 4h-4z" fill="#3b4453"/><path d="M1556 1001l-3 4h2.500l-2 4" stroke="#e8e8e8" stroke-width="1.100" fill="none"/><path d="M1577 1002l3 8l6 9l-6-3l-3 4l-3-4l-6 3l6-9z" fill="#e8e8e8"/><path d="M1577 1012l2 4h-4z" fill="#3b4453"/><path d="M1620.5 1008.500h9l-4.500 5z" fill="#e8e8e8"/><rect x="1650.2" y="1001" width="3.600" height="20" fill="#e8e8e8" transform="rotate(0 1652 1011)"/><rect x="1650.2" y="1001" width="3.600" height="20" fill="#e8e8e8" transform="rotate(45 1652 1011)"/><rect x="1650.2" y="1001" width="3.600" height="20" fill="#e8e8e8" transform="rotate(90 1652 1011)"/><rect x="1650.2" y="1001" width="3.600" height="20" fill="#e8e8e8" transform="rotate(135 1652 1011)"/><circle cx="1652" cy="1011" r="7" fill="#e8e8e8"/><circle cx="1652" cy="1011" r="3" fill="#3b4453"/><path d="M1673.5 1008.500h9l-4.500 5z" fill="#e8e8e8"/><path d="M1694 1011h19M1703.500 1001.500v19" stroke="#e8e8e8" stroke-width="2.200"/><rect x="1727.500" y="1001.500" width="6" height="6" fill="none" stroke="#e8e8e8" stroke-width="1.100"/><circle cx="1743" cy="1008" r="3.500" fill="none" stroke="#e8e8e8" stroke-width="1.100"/><path d="M1731 1020l4-7l4 7z" fill="none" stroke="#e8e8e8" stroke-width="1.100"/><path d="M1756 1003h22M1767 1003v6M1760 1009h14v4h-14zM1763 1013v4M1771 1013v4M1759 1017h16v4h-16z" stroke="#e8e8e8" stroke-width="1.500" fill="none"/><path d="M1790 1002v5l2 2v11h3v-11l2-2v-5h-2v4h-3v-4z" fill="#e8e8e8"/><path d="M1799 1010h7l-3.500 4z" fill="#e8e8e8"/><path d="M1825 1004h12l4 4v12h-16z" fill="#2a7ad0"/><path d="M1825 1020l5-7l4 4l3-3l4 6z" fill="#f0b020"/><path d="M1828 1008h8M1832 1004v8" stroke="#fff" stroke-width="1"/><path d="M1836 1018l2.500 2.500l5-5" stroke="#30c050" stroke-width="1.600" fill="none"/><rect x="1861.500" y="1003.500" width="18" height="14" fill="none" stroke="#e8e8e8" stroke-width="1.300"/><path d="M1865 1014l4-3M1865 1014v-3M1865 1014h3M1876 1007l-4 3M1876 1007v3M1876 1007h-3" stroke="#e8e8e8" stroke-width="1.100"/><path d="M1893 1003h19M1893 1011h19M1893 1019h19" stroke="#e8e8e8" stroke-width="2"/></svg>
<span class="t" style="top:1005px;font-size:14px;line-height:14px;color:#f0f0f0;font-family:'Liberation Sans',sans-serif;letter-spacing:-0.5px;left:1607px;transform:translateX(-50%);">1:1</span>
<div style="left:98px;top:484px;width:447px;height:474px;background:#ffffff;box-shadow:0 2px 10px rgba(0,0,0,0.55),0 0 1px rgba(0,0,0,0.6);"></div>
<div style="left:99px;top:520px;width:445px;height:437px;background:#f0f0f0;"></div>
<span class="t" style="top:495px;font-size:15px;line-height:15px;color:#9a9a9a;font-family:'Liberation Sans',sans-serif;left:107px;">Gerenciamento de dados de fio</span>
<div style="left:519px;top:492px;width:25px;height:25px;background:#e6e6e6;"></div>
<svg style="left:519px;top:492px;" width="25" height="25" viewBox="0 0 25 25"><path d="M9 9l7 7M16 9l-7 7" stroke="#cfcfcf" stroke-width="1.200"/></svg>
<div style="left:102px;top:551px;width:439px;height:1px;background:#a0a0a0;"></div>
<svg style="left:0px;top:0px;" width="560" height="600" viewBox="0 0 560 600"><rect x="107.500" y="530.500" width="11" height="14" fill="#fff" stroke="#555"/><path d="M110 532l6 6M116 532l-6 6" stroke="#d02020" stroke-width="1.400"/><path d="M116 537l5 9l-2-0.500l-1.200 2.500l-1.300-0.600l1.200-2.500l-2 0.600z" fill="#f0e060" stroke="#333" stroke-width="0.600"/><path d="M139 531.500h18M139 544.500h18" stroke="#555" stroke-dasharray="2 1.500"/><path d="M141 533.500h14" stroke="#555"/><path d="M144 531v16" stroke="#d02020" stroke-width="1.200"/><path d="M152 533v8" stroke="#3f78c0"/><path d="M150 536l5 9l-2-0.500l-1.200 2.500l-1.300-0.600l1.200-2.500l-2 0.600z" fill="#f0e060" stroke="#333" stroke-width="0.600"/><path d="M171 538h6l-3 3.500z" fill="#111"/><path d="M184 531h20M184 535.500h20M184 540h20" stroke="#222" stroke-width="2"/><path d="M184 545.500h20" stroke="#555" stroke-dasharray="2 1.500"/><path d="M195 535l6 10l-2.200-0.500l-1.200 2.500l-1.300-0.600l1.200-2.500l-2.200 0.600z" fill="#ddd" stroke="#333" stroke-width="0.700"/><path d="M211 531h20" stroke="#2020c0" stroke-width="2"/><path d="M211 535.500h20" stroke="#222" stroke-width="2"/><path d="M211 540h20" stroke="#7a4a10" stroke-width="2"/><path d="M211 545h20" stroke="#e0d020" stroke-width="2"/><path d="M211 545h20" stroke="#109010" stroke-width="2" stroke-dasharray="3 3"/><path d="M238 536l7-6v4c6 0 9 3 10 8c-3-3-5-4-10-4v4z" fill="#1f4e9a" stroke="#6a9ad8" stroke-width="0.800"/><rect x="240.500" y="541.500" width="16" height="6" fill="#dfe9f2" stroke="#3f6fb0"/><rect x="242" y="544" width="13" height="1.500" fill="#3f6fb0"/><path d="M285 536l-7-6v4c-6 0-9 3-10 8c3-3 5-4 10-4v4z" fill="#1f4e9a" stroke="#6a9ad8" stroke-width="0.800"/><rect x="266.500" y="541.500" width="16" height="6" fill="#dfe9f2" stroke="#3f6fb0"/><rect x="268" y="544" width="13" height="1.500" fill="#3f6fb0"/><path d="M294 532l13 13M307 532l-13 13" stroke="#111" stroke-width="2.400"/><path d="M307 544l2 2" stroke="#111" stroke-width="1.400"/><path d="M288.500 558.500h5v6h6v5h-6v6h-5v-6h-6v-5h6z" fill="#e8f0f8" stroke="#1a2a4a" stroke-width="1.400"/><rect x="311.500" y="563.500" width="18" height="5" fill="#dfe6ee" stroke="#1a2a4a" stroke-width="1.200"/><path d="M341.500 558.500h12l3 3v14.500h-15z" fill="#dfe9f2" stroke="#7a9ac8"/><path d="M345 565a4 4 0 0 1 7-1.500l1.500-1.500v4.500h-4.500l1.600-1.600a2.500 2.500 0 0 0 -4 1zM353 569a4 4 0 0 1 -7 1.500l-1.500 1.500v-4.500h4.500l-1.600 1.600a2.500 2.500 0 0 0 4-1z" fill="#18a018"/></svg>
<div style="left:102px;top:583px;width:218px;height:30px;background:#ffffff;border:1px solid #7a7a7a;box-sizing:border-box;"></div>
<svg style="left:0;top:0;" width="1" height="1"><text x="109.5" y="603" font-family="'Liberation Sans',sans-serif" font-size="15" font-weight="normal" font-style="normal" fill="#111" text-anchor="start" textLength="113" lengthAdjust="spacingAndGlyphs">&lt;Todas as cores&gt;</text></svg>
<svg style="left:304px;top:592px;" width="12" height="10" viewBox="0 0 12 10"><path d="M1.500 2.500l4.500 4.500l4.500-4.500" stroke="#444" stroke-width="1.200" fill="none"/></svg>
<div style="left:322px;top:583px;width:219px;height:30px;background:#ffffff;border:1px solid #7a7a7a;box-sizing:border-box;"></div>
<svg style="left:0;top:0;" width="1" height="1"><text x="329.5" y="603" font-family="'Liberation Sans',sans-serif" font-size="15" font-weight="normal" font-style="normal" fill="#111" text-anchor="start" textLength="121.5" lengthAdjust="spacingAndGlyphs">&lt;Todas as seções&gt;</text></svg>
<svg style="left:525px;top:592px;" width="12" height="10" viewBox="0 0 12 10"><path d="M1.500 2.500l4.500 4.500l4.500-4.500" stroke="#444" stroke-width="1.200" fill="none"/></svg>
<div style="left:103px;top:616px;width:438px;height:338px;background:#ffffff;border:1px solid #828790;box-sizing:border-box;overflow:hidden;"></div>
<div style="left:104px;top:617px;width:414px;height:65px;background:#0078d7;"></div>
<span class="t" style="top:621px;font-size:15px;line-height:15px;color:#ffffff;font-family:'Liberation Sans',sans-serif;font-weight:bold;left:131px;">1,5 mm²</span>
<svg style="left:0;top:0;" width="1" height="1"><text x="107.5" y="676" font-family="'Liberation Sans',sans-serif" font-size="15" font-weight="normal" font-style="italic" fill="#ffffff" text-anchor="start" textLength="178" lengthAdjust="spacingAndGlyphs">Característica não atribuída</text></svg>
<div style="left:107px;top:683px;width:19px;height:19px;background:#000000;border:1px solid #000;box-sizing:border-box;"></div>
<span class="t" style="top:686px;font-size:15px;line-height:15px;color:#000000;font-family:'Liberation Sans',sans-serif;font-weight:bold;left:131px;">1,5 mm²</span>
<span class="t" style="top:686px;font-size:15px;line-height:15px;color:#000000;font-family:'Liberation Sans',sans-serif;font-weight:bold;left:515px;transform:translateX(-100%);">BK</span>
<span class="t" style="top:708px;font-size:15px;line-height:15px;color:#000000;font-family:'Liberation Sans',sans-serif;left:107px;">N1VV-K</span>
<svg style="left:0;top:0;" width="1" height="1"><text x="107.5" y="741" font-family="'Liberation Sans',sans-serif" font-size="15" font-weight="normal" font-style="italic" fill="#000000" text-anchor="start" textLength="178" lengthAdjust="spacingAndGlyphs">Característica não atribuída</text></svg>
<div style="left:107px;top:748px;width:19px;height:19px;background:#996633;border:1px solid #000;box-sizing:border-box;"></div>
<span class="t" style="top:751px;font-size:15px;line-height:15px;color:#000000;font-family:'Liberation Sans',sans-serif;font-weight:bold;left:131px;">1,5 mm²</span>
<span class="t" style="top:751px;font-size:15px;line-height:15px;color:#000000;font-family:'Liberation Sans',sans-serif;font-weight:bold;left:515px;transform:translateX(-100%);">BN</span>
<svg style="left:0;top:0;" width="1" height="1"><text x="107.5" y="806" font-family="'Liberation Sans',sans-serif" font-size="15" font-weight="normal" font-style="italic" fill="#000000" text-anchor="start" textLength="178" lengthAdjust="spacingAndGlyphs">Característica não atribuída</text></svg>
<div style="left:107px;top:813px;width:19px;height:19px;background:#996633;border:1px solid #000;box-sizing:border-box;"></div>
<span class="t" style="top:816px;font-size:15px;line-height:15px;color:#000000;font-family:'Liberation Sans',sans-serif;font-weight:bold;left:131px;">1,5 mm²</span>
<span class="t" style="top:816px;font-size:15px;line-height:15px;color:#000000;font-family:'Liberation Sans',sans-serif;font-weight:bold;left:515px;transform:translateX(-100%);">BN</span>
<span class="t" style="top:838px;font-size:15px;line-height:15px;color:#000000;font-family:'Liberation Sans',sans-serif;left:107px;">N1VV-K</span>
<svg style="left:0;top:0;" width="1" height="1"><text x="107.5" y="871" font-family="'Liberation Sans',sans-serif" font-size="15" font-weight="normal" font-style="italic" fill="#000000" text-anchor="start" textLength="178" lengthAdjust="spacingAndGlyphs">Característica não atribuída</text></svg>
<div style="left:107px;top:878px;width:19px;height:19px;background:#0000ff;border:1px solid #000;box-sizing:border-box;"></div>
<span class="t" style="top:881px;font-size:15px;line-height:15px;color:#000000;font-family:'Liberation Sans',sans-serif;font-weight:bold;left:131px;">1,5 mm²</span>
<span class="t" style="top:881px;font-size:15px;line-height:15px;color:#000000;font-family:'Liberation Sans',sans-serif;font-weight:bold;left:515px;transform:translateX(-100%);">BU</span>
<span class="t" style="top:903px;font-size:15px;line-height:15px;color:#000000;font-family:'Liberation Sans',sans-serif;left:107px;">N1VV-K</span>
<svg style="left:0;top:0;" width="1" height="1"><text x="107.5" y="936" font-family="'Liberation Sans',sans-serif" font-size="15" font-weight="normal" font-style="italic" fill="#000000" text-anchor="start" textLength="178" lengthAdjust="spacingAndGlyphs">Característica não atribuída</text></svg>
<div style="left:103px;top:616px;width:416px;height:337px;overflow:hidden;"><svg style="left:4px;top:327.5px;" width="19" height="19" viewBox="0 0 19 19"><rect x="0.5" y="0.5" width="18" height="18" fill="#00d000" stroke="#000"/><path d="M18 1v17h-17z" fill="#f0f000"/><rect x="0.5" y="0.5" width="18" height="18" fill="none" stroke="#000"/></svg><span class="t" style="top:330px;font-size:15px;line-height:15px;color:#000000;font-family:'Liberation Sans',sans-serif;font-weight:bold;left:28px;">1,5 mm²</span><span class="t" style="top:330px;font-size:15px;line-height:15px;color:#000000;font-family:'Liberation Sans',sans-serif;font-weight:bold;left:412px;transform:translateX(-100%);">GNYE</span></div>
<div style="left:519px;top:617px;width:21px;height:336px;background:#f0f0f0;"></div>
<div style="left:519px;top:638px;width:19px;height:92px;background:#cdcdcd;"></div>
<svg style="left:519px;top:617px;" width="21" height="336" viewBox="0 0 21 336"><path d="M6 13.500l4.500-4.500l4.500 4.500" stroke="#444" stroke-width="1.600" fill="none"/><path d="M6 322l4.500 4.500l4.500-4.500" stroke="#444" stroke-width="1.600" fill="none"/></svg>
</body></html>
